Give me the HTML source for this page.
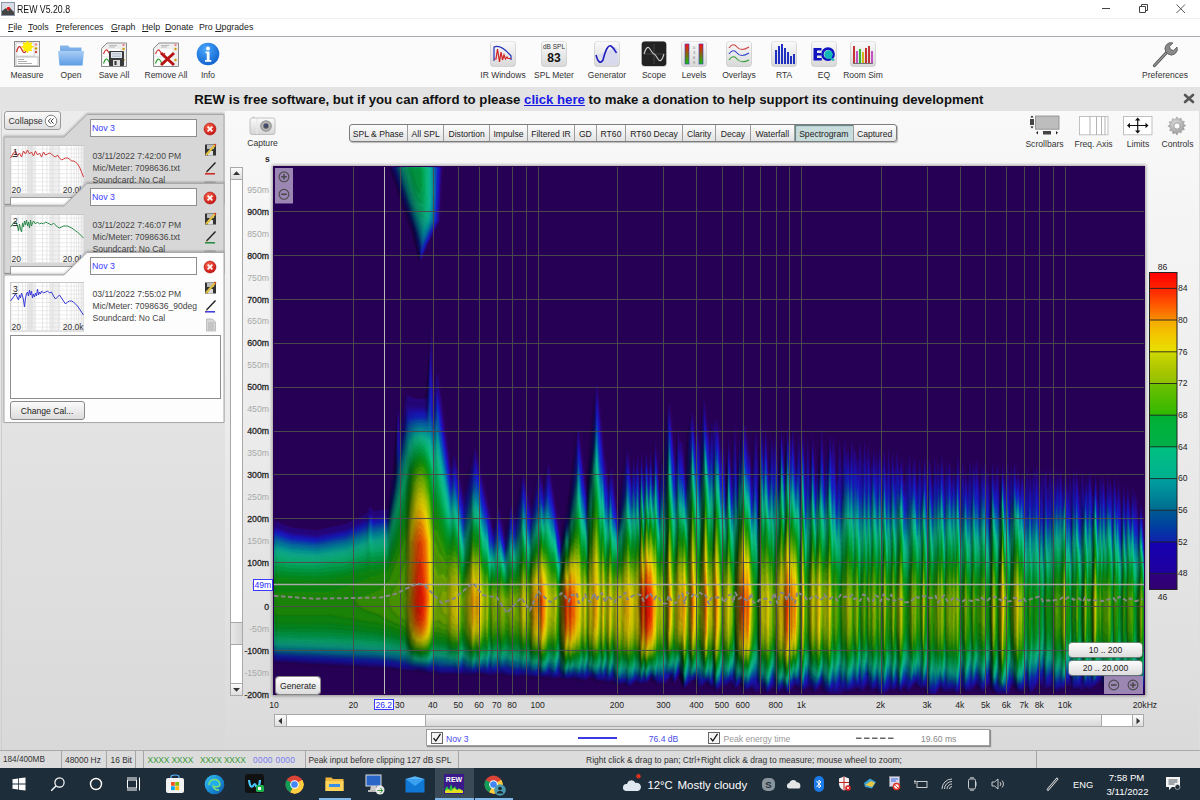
<!DOCTYPE html>
<html><head><meta charset="utf-8"><title>REW</title><style>*{margin:0;padding:0;box-sizing:border-box}
html,body{width:1200px;height:800px;overflow:hidden;background:#fff;font-family:"Liberation Sans",sans-serif;color:#222}
.a{position:absolute}
.t{position:absolute;white-space:pre;font-size:8.5px;line-height:10px;color:#333}
#title{left:0;top:0;width:1200px;height:18px;background:#fff}
#menu{left:0;top:18px;width:1200px;height:19px;background:#fff;border-top:1px solid #f0f0f0;border-bottom:1px solid #a9abb3}
#tool{left:0;top:37px;width:1200px;height:50px;background:#fbfbfb}
#banner{left:0;top:87px;width:1200px;height:24px;background:#e3e3e3}
#left{left:0;top:111px;width:225px;height:639px;background:linear-gradient(#ececec,#d9d9d9)}
#graph{left:225px;top:111px;width:975px;height:639px;background:linear-gradient(#f9f9f9 0%,#efefef 40%,#dadada 100%)}
#status{left:0;top:750px;width:1200px;height:18px;background:#dcdcdc;border-top:1px solid #a9a9a9}
#task{left:0;top:768px;width:1200px;height:32px;background:#1e2d3a}
.u{text-decoration:underline}
.ico{position:absolute;width:26px;height:26px;border-radius:4px;background:linear-gradient(#fdfdfd,#dcdcdc);box-shadow:0 0 0 1px #c9c9c9, 1px 1px 1px #bbb}
.lbl{position:absolute;white-space:pre;font-size:8.5px;line-height:10px;color:#333;text-align:center}
</style></head>
<body>
<div id="title" class="a"></div>
<svg class="a" style="left:1px;top:2px" width="14" height="14" viewBox="0 0 14 14">
<rect x="0.5" y="0.5" width="13" height="13" fill="#d8dde6" stroke="#8a96a8"/>
<path d="M2 12 L7 3 L12 12 Z" fill="#f4f4f4"/><path d="M1 9 L5 6 L7 9 L9 6 L13 10 L13 13 L1 13Z" fill="#444"/>
<circle cx="7.5" cy="6.5" r="1.8" fill="#e01818"/></svg>
<div class="t" style="left:17.0px;top:4.84px;font-size:10px;line-height:10px;color:#111;transform:scaleX(0.875);transform-origin:0 0;">REW V5.20.8</div>
<div class="a" style="left:1102px;top:8px;width:8px;height:1px;background:#444"></div>
<svg class="a" style="left:1138px;top:3px" width="11" height="11"><path d="M1.5 3.5h6v6h-6z M3.5 3.5V1.5h6v6h-2" stroke="#444" stroke-width="1" fill="none"/></svg>
<svg class="a" style="left:1176px;top:4px" width="10" height="10"><path d="M0.5 0.5 L9 9 M9 0.5 L0.5 9" stroke="#444" stroke-width="0.9"/></svg>
<div id="menu" class="a"></div>
<div class="t" style="left:8.0px;top:23.25px;font-size:8.8px;line-height:8.8px;color:#222;"><u>F</u>ile</div>
<div class="t" style="left:28.0px;top:23.25px;font-size:8.8px;line-height:8.8px;color:#222;"><u>T</u>ools</div>
<div class="t" style="left:56.0px;top:23.25px;font-size:8.8px;line-height:8.8px;color:#222;"><u>P</u>references</div>
<div class="t" style="left:111.0px;top:23.25px;font-size:8.8px;line-height:8.8px;color:#222;"><u>G</u>raph</div>
<div class="t" style="left:142.0px;top:23.25px;font-size:8.8px;line-height:8.8px;color:#222;"><u>H</u>elp</div>
<div class="t" style="left:165.0px;top:23.25px;font-size:8.8px;line-height:8.8px;color:#222;"><u>D</u>onate</div>
<div class="t" style="left:199.0px;top:23.25px;font-size:8.8px;line-height:8.8px;color:#222;">Pro <u>U</u>pgrades</div>
<div id="tool" class="a"></div>
<svg class="a" style="left:13px;top:40px" width="28" height="28" viewBox="0 0 28 28">
<rect x="1.5" y="1.5" width="25" height="25" fill="#f4f4f4" stroke="#8c8c8c"/>
<rect x="3" y="3" width="18" height="13" fill="#fff" stroke="#bbb" stroke-width="0.6"/>
<path d="M3.5 12 Q6 3 8.5 9 T13 11" stroke="#d03030" stroke-width="1.3" fill="none"/>
<rect x="3" y="17" width="22" height="8.5" fill="#fff" stroke="#999" stroke-width="0.6"/>
<path d="M5 19.5h6M5 21.5h9M5 23.5h14" stroke="#777" stroke-width="0.6"/>
<circle cx="23" cy="4.5" r="1.3" fill="#e88"/><circle cx="23" cy="8.5" r="1.3" fill="#c90"/><circle cx="23" cy="12" r="1.2" fill="#c44"/>
<circle cx="14.5" cy="6.8" r="4.6" fill="#ffee00"/><path d="M14.5 0.8v12M8.5 6.8h12M10.3 2.6l8.4 8.4M18.7 2.6l-8.4 8.4" stroke="#ffd800" stroke-width="1.6"/><circle cx="14.5" cy="6.8" r="4" fill="#fff200"/>
</svg>
<div class="t" style="left:-33px;width:120px;text-align:center;top:71.40px;font-size:8.5px;line-height:8.5px;color:#333">Measure</div>
<svg class="a" style="left:57px;top:43px" width="28" height="24" viewBox="0 0 28 24">
<defs><linearGradient id="fo" x1="0" y1="0" x2="0" y2="1"><stop offset="0" stop-color="#8ab8ec"/><stop offset="1" stop-color="#4d8fdc"/></linearGradient>
<linearGradient id="fo2" x1="0" y1="0" x2="0" y2="1"><stop offset="0" stop-color="#a9cdf5"/><stop offset="1" stop-color="#5c9ce4"/></linearGradient></defs>
<path d="M3 2.5h8l2 2h11.5v14H3z" fill="url(#fo)"/>
<path d="M1 8h26l-1.5 14.5h-23z" fill="url(#fo2)"/>
</svg>
<div class="t" style="left:11px;width:120px;text-align:center;top:71.40px;font-size:8.5px;line-height:8.5px;color:#333">Open</div>
<svg class="a" style="left:100px;top:40px" width="28" height="28" viewBox="0 0 28 28">
<path d="M1.5 26.5V8.5L7 3h19.5v23.5z" fill="#eee" stroke="#8c8c8c"/>
<rect x="3" y="9" width="17" height="7" fill="#fff"/><path d="M3.5 14 Q6 7 8.5 12 T13 13" stroke="#d03030" stroke-width="1.2" fill="none"/>
<rect x="3" y="17.5" width="17" height="8" fill="#fff"/><path d="M3.5 23.5 Q6 16 8.5 21 T13 22" stroke="#30a030" stroke-width="1.2" fill="none"/>
<path d="M9 5.5h8M9 7h6" stroke="#999" stroke-width="0.6"/>
<circle cx="23.5" cy="5" r="1.2" fill="#e88"/><circle cx="23.5" cy="9" r="1.2" fill="#c90"/><circle cx="23.5" cy="20" r="1.2" fill="#c90"/>
<rect x="9" y="11" width="15" height="15" rx="1" fill="#3a3a3a"/><rect x="11" y="12" width="11" height="6" fill="#dfe6ee"/><path d="M12 13.5h9M12 15h9M12 16.5h9" stroke="#9ab" stroke-width="0.5"/><rect x="13" y="20" width="7" height="6" fill="#ddd"/><rect x="14.5" y="21" width="2" height="4" fill="#333"/></svg>
<div class="t" style="left:54px;width:120px;text-align:center;top:71.40px;font-size:8.5px;line-height:8.5px;color:#333">Save All</div>
<svg class="a" style="left:152px;top:40px" width="28" height="28" viewBox="0 0 28 28">
<path d="M1.5 26.5V8.5L7 3h19.5v23.5z" fill="#eee" stroke="#8c8c8c"/>
<rect x="3" y="9" width="17" height="7" fill="#fff"/><path d="M3.5 14 Q6 7 8.5 12 T13 13" stroke="#d03030" stroke-width="1.2" fill="none"/>
<rect x="3" y="17.5" width="17" height="8" fill="#fff"/><path d="M3.5 23.5 Q6 16 8.5 21 T13 22" stroke="#30a030" stroke-width="1.2" fill="none"/>
<path d="M9 5.5h8M9 7h6" stroke="#999" stroke-width="0.6"/>
<circle cx="23.5" cy="5" r="1.2" fill="#e88"/><circle cx="23.5" cy="9" r="1.2" fill="#c90"/><circle cx="23.5" cy="20" r="1.2" fill="#c90"/>
<path d="M9 13 L22 25 M22 13 L9 25" stroke="#b81414" stroke-width="3"/></svg>
<div class="t" style="left:106px;width:120px;text-align:center;top:71.40px;font-size:8.5px;line-height:8.5px;color:#333">Remove All</div>
<svg class="a" style="left:196px;top:42px" width="24" height="24" viewBox="0 0 24 24">
<defs><radialGradient id="ig" cx="0.4" cy="0.3" r="0.8"><stop offset="0" stop-color="#4aa8ff"/><stop offset="1" stop-color="#0a5cc8"/></radialGradient></defs>
<circle cx="12" cy="12" r="11.3" fill="url(#ig)"/>
<circle cx="12" cy="6.5" r="2" fill="#fff"/><path d="M9.5 9.5h4v8.5h1.8v1.8H9v-1.8h1.8v-6.7H9.5z" fill="#fff"/>
</svg>
<div class="t" style="left:148px;width:120px;text-align:center;top:71.40px;font-size:8.5px;line-height:8.5px;color:#333">Info</div>
<svg class="a" style="left:489px;top:40px" width="28" height="28" viewBox="0 0 28 28">
<defs><linearGradient id="bt" x1="0" y1="0" x2="0" y2="1"><stop offset="0" stop-color="#fafafa"/><stop offset="1" stop-color="#d9d9d9"/></linearGradient></defs>
<rect x="1.2" y="1.2" width="25.6" height="25.6" rx="3.5" fill="#c6c6c6"/>
<rect x="1.8" y="1.5" width="24.4" height="24.6" rx="3" fill="url(#bt)"/>
<path d="M5 21V7 Q12 4 22 16 v4" stroke="#2030c0" stroke-width="1.2" fill="none"/><path d="M5 19h2l1.5-10 2 13 1.5-10 1.5 8 1.5-5 1.5 4 1.5-2 1 1.5H22" stroke="#d02020" stroke-width="1.2" fill="none"/></svg>
<div class="t" style="left:443px;width:120px;text-align:center;top:71.40px;font-size:8.5px;line-height:8.5px;color:#333">IR Windows</div>
<svg class="a" style="left:540px;top:40px" width="28" height="28" viewBox="0 0 28 28">
<defs><linearGradient id="bt" x1="0" y1="0" x2="0" y2="1"><stop offset="0" stop-color="#fafafa"/><stop offset="1" stop-color="#d9d9d9"/></linearGradient></defs>
<rect x="1.2" y="1.2" width="25.6" height="25.6" rx="3.5" fill="#c6c6c6"/>
<rect x="1.8" y="1.5" width="24.4" height="24.6" rx="3" fill="url(#bt)"/>
<text x="14" y="9" font-size="6.5" text-anchor="middle" fill="#333" font-family="Liberation Sans">dB SPL</text><text x="14" y="21.5" font-size="12" font-weight="700" text-anchor="middle" fill="#111" font-family="Liberation Sans">83</text></svg>
<div class="t" style="left:494px;width:120px;text-align:center;top:71.40px;font-size:8.5px;line-height:8.5px;color:#333">SPL Meter</div>
<svg class="a" style="left:593px;top:40px" width="28" height="28" viewBox="0 0 28 28">
<defs><linearGradient id="bt" x1="0" y1="0" x2="0" y2="1"><stop offset="0" stop-color="#fafafa"/><stop offset="1" stop-color="#d9d9d9"/></linearGradient></defs>
<rect x="1.2" y="1.2" width="25.6" height="25.6" rx="3.5" fill="#c6c6c6"/>
<rect x="1.8" y="1.5" width="24.4" height="24.6" rx="3" fill="url(#bt)"/>
<path d="M3 16 Q8 16 9 19 V25 H25 V10 Q21 4 19 9z" fill="#d8d8ef" opacity="0.9"/><path d="M3 15 Q6 26 10 20 Q14 4 18 6 Q21 8 23.5 13" stroke="#2020c0" stroke-width="1.6" fill="none"/></svg>
<div class="t" style="left:547px;width:120px;text-align:center;top:71.40px;font-size:8.5px;line-height:8.5px;color:#333">Generator</div>
<svg class="a" style="left:640px;top:40px" width="28" height="28" viewBox="0 0 28 28">
<defs><linearGradient id="bt" x1="0" y1="0" x2="0" y2="1"><stop offset="0" stop-color="#fafafa"/><stop offset="1" stop-color="#d9d9d9"/></linearGradient></defs>
<rect x="1.2" y="1.2" width="25.6" height="25.6" rx="3.5" fill="#c6c6c6"/>
<rect x="1.8" y="1.5" width="24.4" height="24.6" rx="3" fill="#222"/>
<path d="M14 4v20M4 14h20" stroke="#666" stroke-width="0.5"/><path d="M4 14 Q7 4 10 9 T14 14 T18 19 T24 14" stroke="#ccc" stroke-width="1.1" fill="none"/></svg>
<div class="t" style="left:594px;width:120px;text-align:center;top:71.40px;font-size:8.5px;line-height:8.5px;color:#333">Scope</div>
<svg class="a" style="left:680px;top:40px" width="28" height="28" viewBox="0 0 28 28">
<defs><linearGradient id="bt" x1="0" y1="0" x2="0" y2="1"><stop offset="0" stop-color="#fafafa"/><stop offset="1" stop-color="#d9d9d9"/></linearGradient></defs>
<rect x="1.2" y="1.2" width="25.6" height="25.6" rx="3.5" fill="#c6c6c6"/>
<rect x="1.8" y="1.5" width="24.4" height="24.6" rx="3" fill="url(#bt)"/>
<rect x="5" y="4" width="4" height="20" fill="url(#lv)" stroke="#3a3ac0" stroke-width="0.6"/><rect x="19" y="4" width="4" height="20" fill="url(#lv)" stroke="#3a3ac0" stroke-width="0.6"/><defs><linearGradient id="lv" x1="0" y1="0" x2="0" y2="1"><stop offset="0" stop-color="#ff1010"/><stop offset="1" stop-color="#10c010"/></linearGradient></defs><text x="14" y="9" font-size="4" text-anchor="middle" fill="#777" font-family="Liberation Sans">0</text><text x="14" y="14" font-size="4" text-anchor="middle" fill="#777" font-family="Liberation Sans">3</text><text x="14" y="19" font-size="4" text-anchor="middle" fill="#777" font-family="Liberation Sans">6</text><text x="14" y="24" font-size="4" text-anchor="middle" fill="#777" font-family="Liberation Sans">9</text></svg>
<div class="t" style="left:634px;width:120px;text-align:center;top:71.40px;font-size:8.5px;line-height:8.5px;color:#333">Levels</div>
<svg class="a" style="left:725px;top:40px" width="28" height="28" viewBox="0 0 28 28">
<defs><linearGradient id="bt" x1="0" y1="0" x2="0" y2="1"><stop offset="0" stop-color="#fafafa"/><stop offset="1" stop-color="#d9d9d9"/></linearGradient></defs>
<rect x="1.2" y="1.2" width="25.6" height="25.6" rx="3.5" fill="#c6c6c6"/>
<rect x="1.8" y="1.5" width="24.4" height="24.6" rx="3" fill="url(#bt)"/>
<path d="M4 8 Q8 2 12 7 T24 7" stroke="#d04040" stroke-width="1.1" fill="none"/><path d="M4 14 Q8 8 12 13 T24 13" stroke="#3040d0" stroke-width="1.1" fill="none"/><path d="M4 20 Q8 14 12 19 T24 20" stroke="#30a030" stroke-width="1.1" fill="none"/></svg>
<div class="t" style="left:679px;width:120px;text-align:center;top:71.40px;font-size:8.5px;line-height:8.5px;color:#333">Overlays</div>
<svg class="a" style="left:770px;top:40px" width="28" height="28" viewBox="0 0 28 28">
<defs><linearGradient id="bt" x1="0" y1="0" x2="0" y2="1"><stop offset="0" stop-color="#fafafa"/><stop offset="1" stop-color="#d9d9d9"/></linearGradient></defs>
<rect x="1.2" y="1.2" width="25.6" height="25.6" rx="3.5" fill="#c6c6c6"/>
<rect x="1.8" y="1.5" width="24.4" height="24.6" rx="3" fill="url(#bt)"/>
<path d="M6 10v14M9 6v18M12 4v20M15 8v16M18 12v12M21 16v8M24 14v10" stroke="#2030c0" stroke-width="2"/></svg>
<div class="t" style="left:724px;width:120px;text-align:center;top:71.40px;font-size:8.5px;line-height:8.5px;color:#333">RTA</div>
<svg class="a" style="left:810px;top:40px" width="28" height="28" viewBox="0 0 28 28">
<defs><linearGradient id="bt" x1="0" y1="0" x2="0" y2="1"><stop offset="0" stop-color="#fafafa"/><stop offset="1" stop-color="#d9d9d9"/></linearGradient></defs>
<rect x="1.2" y="1.2" width="25.6" height="25.6" rx="3.5" fill="#c6c6c6"/>
<rect x="1.8" y="1.5" width="24.4" height="24.6" rx="3" fill="url(#bt)"/>
<path d="M3.5 8h8v2.6H7v2.3h4v2.5H7v2.5h4.8V20.5H3.5z" fill="#1014c0"/><circle cx="18" cy="14.2" r="5.6" fill="none" stroke="#1014c0" stroke-width="2.6"/><circle cx="18.5" cy="14.5" r="4.2" fill="#12b8b8"/><path d="M20 17.5l4 3" stroke="#12b8b8" stroke-width="2"/></svg>
<div class="t" style="left:764px;width:120px;text-align:center;top:71.40px;font-size:8.5px;line-height:8.5px;color:#333">EQ</div>
<svg class="a" style="left:849px;top:40px" width="28" height="28" viewBox="0 0 28 28">
<defs><linearGradient id="bt" x1="0" y1="0" x2="0" y2="1"><stop offset="0" stop-color="#fafafa"/><stop offset="1" stop-color="#d9d9d9"/></linearGradient></defs>
<rect x="1.2" y="1.2" width="25.6" height="25.6" rx="3.5" fill="#c6c6c6"/>
<rect x="1.8" y="1.5" width="24.4" height="24.6" rx="3" fill="url(#bt)"/>
<path d="M5 6v17" stroke="#c02020" stroke-width="1.8"/><path d="M8 11v12" stroke="#c040c0" stroke-width="1.8"/><path d="M11 9v14" stroke="#20b020" stroke-width="1.8"/><path d="M14 12v11" stroke="#d0b000" stroke-width="1.8"/><path d="M17 8v15" stroke="#c02020" stroke-width="1.8"/><path d="M20 6v17" stroke="#c02020" stroke-width="1.8"/><path d="M23 11v12" stroke="#c040c0" stroke-width="1.8"/><path d="M4 23.5h20" stroke="#555" stroke-width="0.8"/></svg>
<div class="t" style="left:803px;width:120px;text-align:center;top:71.40px;font-size:8.5px;line-height:8.5px;color:#333">Room Sim</div>
<svg class="a" style="left:1151px;top:40px" width="28" height="28" viewBox="0 0 28 28">
<path d="M3.5 25.5 L17 11" stroke="#555" stroke-width="3.2" stroke-linecap="round"/>
<path d="M3.5 25.5 L17 11" stroke="#999" stroke-width="1.2" stroke-linecap="round"/>
<path d="M15 12 a6 6 0 0 1 7-9 l-3.5 3.5 1 3 3 1 3.5-3.5 a6 6 0 0 1 -9 7z" fill="#8a8a8a" stroke="#555" stroke-width="0.8"/>
</svg>
<div class="t" style="left:1105px;width:120px;text-align:center;top:71.40px;font-size:8.5px;line-height:8.5px;color:#333">Preferences</div>
<div id="banner" class="a"></div>
<div class="t" style="left:194.3px;top:92.63px;font-size:13.2px;line-height:13.2px;color:#111;font-weight:700;">REW is free software, but if you can afford to please <span style="color:#1a1ae6;text-decoration:underline">click here</span> to make a donation to help support its continuing development</div>
<svg class="a" style="left:1183px;top:93px" width="12" height="11"><path d="M2 2 L10 9 M10 2 L2 9" stroke="#555" stroke-width="2.6" stroke-linecap="round"/></svg>
<div id="left" class="a"></div>
<div class="a" style="left:3.5px;top:111px;width:57.5px;height:19px;border:1px solid #9a9a9a;border-radius:3px;background:linear-gradient(#fafafa,#dedede)"></div>
<div class="t" style="left:8.5px;top:117.05px;font-size:8.8px;line-height:8.8px;color:#333;">Collapse</div>
<svg class="a" style="left:44px;top:114px" width="14" height="14" viewBox="0 0 14 14"><circle cx="7" cy="7" r="5.8" fill="#fff" stroke="#777" stroke-width="0.9"/><path d="M6.8 4.3 4.3 7l2.5 2.7M9.6 4.3 7.1 7l2.5 2.7" stroke="#444" stroke-width="1" fill="none"/></svg>
<svg class="a" style="left:0;top:0" width="226" height="208"><defs><filter id="cs0" x="-5%" y="-5%" width="110%" height="110%"><feDropShadow dx="0" dy="-1" stdDeviation="1" flood-color="#000" flood-opacity="0.25"/></filter></defs><polygon points="4,137.0 64,137.0 87,114.5 224,114.5 224,204.5 4,204.5" fill="#d7d7d7" stroke="#a9a9a9" stroke-width="1" filter="url(#cs0)"/></svg>
<div class="a" style="left:89.5px;top:119.0px;width:107px;height:18px;background:#fff;border:1px solid #8e8e8e"></div>
<div class="t" style="left:92px;top:124.35px;font-size:8.8px;line-height:8.8px;color:#3a3aff;">Nov 3</div>
<svg class="a" style="left:203px;top:121.5px" width="14" height="14" viewBox="0 0 14 14"><defs><radialGradient id="dg128" cx="0.4" cy="0.35" r="0.7"><stop offset="0" stop-color="#ff6a50"/><stop offset="1" stop-color="#c01010"/></radialGradient></defs><circle cx="7" cy="7" r="6" fill="url(#dg128)" stroke="#a00" stroke-width="0.5"/><path d="M4.6 4.6l4.8 4.8M9.4 4.6l-4.8 4.8" stroke="#fff" stroke-width="1.6"/></svg>
<svg class="a" style="left:9.5px;top:144.5px" width="74.5" height="49.5" viewBox="0 0 74.5 49.5"><rect x="0.5" y="0.5" width="73.5" height="48.5" fill="#fff" stroke="#c8c8c8"/><rect x="17" y="1" width="6" height="47" fill="#ececec"/><rect x="40" y="1" width="4" height="47" fill="#efefef"/><path d="M1.0 1V48.5" stroke="#d8d8d8" stroke-width="0.6"/><path d="M8.3 1V48.5" stroke="#d8d8d8" stroke-width="0.6"/><path d="M12.6 1V48.5" stroke="#d8d8d8" stroke-width="0.6"/><path d="M15.6 1V48.5" stroke="#d8d8d8" stroke-width="0.6"/><path d="M18.0 1V48.5" stroke="#d8d8d8" stroke-width="0.6"/><path d="M19.9 1V48.5" stroke="#d8d8d8" stroke-width="0.6"/><path d="M21.5 1V48.5" stroke="#d8d8d8" stroke-width="0.6"/><path d="M22.9 1V48.5" stroke="#d8d8d8" stroke-width="0.6"/><path d="M24.2 1V48.5" stroke="#d8d8d8" stroke-width="0.6"/><path d="M25.3 1V48.5" stroke="#d8d8d8" stroke-width="0.6"/><path d="M32.6 1V48.5" stroke="#d8d8d8" stroke-width="0.6"/><path d="M36.9 1V48.5" stroke="#d8d8d8" stroke-width="0.6"/><path d="M39.9 1V48.5" stroke="#d8d8d8" stroke-width="0.6"/><path d="M42.3 1V48.5" stroke="#d8d8d8" stroke-width="0.6"/><path d="M44.2 1V48.5" stroke="#d8d8d8" stroke-width="0.6"/><path d="M45.8 1V48.5" stroke="#d8d8d8" stroke-width="0.6"/><path d="M47.2 1V48.5" stroke="#d8d8d8" stroke-width="0.6"/><path d="M48.5 1V48.5" stroke="#d8d8d8" stroke-width="0.6"/><path d="M49.6 1V48.5" stroke="#d8d8d8" stroke-width="0.6"/><path d="M56.9 1V48.5" stroke="#d8d8d8" stroke-width="0.6"/><path d="M61.2 1V48.5" stroke="#d8d8d8" stroke-width="0.6"/><path d="M64.2 1V48.5" stroke="#d8d8d8" stroke-width="0.6"/><path d="M66.6 1V48.5" stroke="#d8d8d8" stroke-width="0.6"/><path d="M68.5 1V48.5" stroke="#d8d8d8" stroke-width="0.6"/><path d="M70.1 1V48.5" stroke="#d8d8d8" stroke-width="0.6"/><path d="M71.5 1V48.5" stroke="#d8d8d8" stroke-width="0.6"/><path d="M72.8 1V48.5" stroke="#d8d8d8" stroke-width="0.6"/><path d="M1 4.1H73.5" stroke="#dedede" stroke-width="0.6"/><path d="M1 8.2H73.5" stroke="#dedede" stroke-width="0.6"/><path d="M1 12.3H73.5" stroke="#dedede" stroke-width="0.6"/><path d="M1 16.4H73.5" stroke="#dedede" stroke-width="0.6"/><path d="M1 20.5H73.5" stroke="#dedede" stroke-width="0.6"/><path d="M1 24.6H73.5" stroke="#dedede" stroke-width="0.6"/><path d="M1 28.7H73.5" stroke="#dedede" stroke-width="0.6"/><path d="M1 32.8H73.5" stroke="#dedede" stroke-width="0.6"/><path d="M1 36.9H73.5" stroke="#dedede" stroke-width="0.6"/><path d="M1 41.0H73.5" stroke="#dedede" stroke-width="0.6"/><path d="M1 45.1H73.5" stroke="#dedede" stroke-width="0.6"/><path d="M0.5 13.0 3.5 8.0 5.5 6.0 7.5 11.0 9.5 8.0 11.5 12.0 13.5 6.0 15.5 9.0 17.5 5.0 19.5 9.0 21.5 7.0 23.5 11.0 25.5 6.0 27.5 10.0 29.5 8.0 31.5 12.0 33.5 7.0 35.5 10.0 37.5 9.0 39.5 8.0 41.5 9.0 43.5 11.0 45.5 12.0 47.5 10.0 49.5 13.0 51.5 15.0 53.5 14.0 55.5 13.0 57.5 13.0 59.5 14.0 61.5 16.0 63.5 16.0 65.5 17.0 67.5 19.0 69.5 22.0 71.5 27.0 73.5 32.0" stroke="#d03a3a" stroke-width="1" fill="none"/><text x="3" y="10" font-size="8.5" fill="#222" font-family="Liberation Sans">1</text><path d="M2.5 11.5h5" stroke="#222" stroke-width="0.9"/><text x="1.5" y="47.5" font-size="8.5" fill="#333" font-family="Liberation Sans">20</text><text x="73.5" y="47.5" font-size="8.5" fill="#333" text-anchor="end" font-family="Liberation Sans">20.0k</text></svg>
<div class="t" style="left:92.5px;top:151.72px;font-size:8.6px;line-height:8.6px;color:#444;">03/11/2022 7:42:00 PM</div>
<div class="t" style="left:92.5px;top:163.72px;font-size:8.6px;line-height:8.6px;color:#444;">Mic/Meter: 7098636.txt</div>
<div class="t" style="left:92.5px;top:175.72px;font-size:8.6px;line-height:8.6px;color:#444;">Soundcard: No Cal</div>
<svg class="a" style="left:204px;top:142.5px" width="13" height="13" viewBox="0 0 13 13"><rect x="1" y="1.5" width="11" height="11" fill="#333"/><rect x="3" y="2" width="7" height="4" fill="#bbb"/><rect x="4" y="8" width="5" height="4.5" fill="#ddd"/><path d="M2 12 L11.5 1.5" stroke="#e0c040" stroke-width="2.2"/><path d="M10.5 1 l1.5 1.5" stroke="#d03020" stroke-width="1.5"/></svg>
<svg class="a" style="left:204px;top:160.5px" width="13" height="14" viewBox="0 0 13 14"><path d="M2.5 11 L11.5 1.5" stroke="#222" stroke-width="1.4"/><path d="M2 11.5 l1.5 -0.5" stroke="#c9a060" stroke-width="1"/><path d="M1 12.8h10" stroke="#d02020" stroke-width="1.5"/></svg>
<div class="a" style="left:204px;top:180.5px;width:12px;height:4px;background:#bbb;border-radius:2px 2px 0 0"></div>
<div class="a" style="left:9.5px;top:197.0px;width:74px;height:8px;background:#fff;border:1px solid #999;border-bottom:none"></div>
<svg class="a" style="left:0;top:0" width="226" height="276"><defs><filter id="cs1" x="-5%" y="-5%" width="110%" height="110%"><feDropShadow dx="0" dy="-1" stdDeviation="1" flood-color="#000" flood-opacity="0.25"/></filter></defs><polygon points="4,206.0 64,206.0 87,183.5 224,183.5 224,273.5 4,273.5" fill="#d7d7d7" stroke="#a9a9a9" stroke-width="1" filter="url(#cs1)"/></svg>
<div class="a" style="left:89.5px;top:188.0px;width:107px;height:18px;background:#fff;border:1px solid #8e8e8e"></div>
<div class="t" style="left:92px;top:193.35px;font-size:8.8px;line-height:8.8px;color:#3a3aff;">Nov 3</div>
<svg class="a" style="left:203px;top:190.5px" width="14" height="14" viewBox="0 0 14 14"><defs><radialGradient id="dg197" cx="0.4" cy="0.35" r="0.7"><stop offset="0" stop-color="#ff6a50"/><stop offset="1" stop-color="#c01010"/></radialGradient></defs><circle cx="7" cy="7" r="6" fill="url(#dg197)" stroke="#a00" stroke-width="0.5"/><path d="M4.6 4.6l4.8 4.8M9.4 4.6l-4.8 4.8" stroke="#fff" stroke-width="1.6"/></svg>
<svg class="a" style="left:9.5px;top:213.5px" width="74.5" height="49.5" viewBox="0 0 74.5 49.5"><rect x="0.5" y="0.5" width="73.5" height="48.5" fill="#fff" stroke="#c8c8c8"/><rect x="17" y="1" width="6" height="47" fill="#ececec"/><rect x="40" y="1" width="4" height="47" fill="#efefef"/><path d="M1.0 1V48.5" stroke="#d8d8d8" stroke-width="0.6"/><path d="M8.3 1V48.5" stroke="#d8d8d8" stroke-width="0.6"/><path d="M12.6 1V48.5" stroke="#d8d8d8" stroke-width="0.6"/><path d="M15.6 1V48.5" stroke="#d8d8d8" stroke-width="0.6"/><path d="M18.0 1V48.5" stroke="#d8d8d8" stroke-width="0.6"/><path d="M19.9 1V48.5" stroke="#d8d8d8" stroke-width="0.6"/><path d="M21.5 1V48.5" stroke="#d8d8d8" stroke-width="0.6"/><path d="M22.9 1V48.5" stroke="#d8d8d8" stroke-width="0.6"/><path d="M24.2 1V48.5" stroke="#d8d8d8" stroke-width="0.6"/><path d="M25.3 1V48.5" stroke="#d8d8d8" stroke-width="0.6"/><path d="M32.6 1V48.5" stroke="#d8d8d8" stroke-width="0.6"/><path d="M36.9 1V48.5" stroke="#d8d8d8" stroke-width="0.6"/><path d="M39.9 1V48.5" stroke="#d8d8d8" stroke-width="0.6"/><path d="M42.3 1V48.5" stroke="#d8d8d8" stroke-width="0.6"/><path d="M44.2 1V48.5" stroke="#d8d8d8" stroke-width="0.6"/><path d="M45.8 1V48.5" stroke="#d8d8d8" stroke-width="0.6"/><path d="M47.2 1V48.5" stroke="#d8d8d8" stroke-width="0.6"/><path d="M48.5 1V48.5" stroke="#d8d8d8" stroke-width="0.6"/><path d="M49.6 1V48.5" stroke="#d8d8d8" stroke-width="0.6"/><path d="M56.9 1V48.5" stroke="#d8d8d8" stroke-width="0.6"/><path d="M61.2 1V48.5" stroke="#d8d8d8" stroke-width="0.6"/><path d="M64.2 1V48.5" stroke="#d8d8d8" stroke-width="0.6"/><path d="M66.6 1V48.5" stroke="#d8d8d8" stroke-width="0.6"/><path d="M68.5 1V48.5" stroke="#d8d8d8" stroke-width="0.6"/><path d="M70.1 1V48.5" stroke="#d8d8d8" stroke-width="0.6"/><path d="M71.5 1V48.5" stroke="#d8d8d8" stroke-width="0.6"/><path d="M72.8 1V48.5" stroke="#d8d8d8" stroke-width="0.6"/><path d="M1 4.1H73.5" stroke="#dedede" stroke-width="0.6"/><path d="M1 8.2H73.5" stroke="#dedede" stroke-width="0.6"/><path d="M1 12.3H73.5" stroke="#dedede" stroke-width="0.6"/><path d="M1 16.4H73.5" stroke="#dedede" stroke-width="0.6"/><path d="M1 20.5H73.5" stroke="#dedede" stroke-width="0.6"/><path d="M1 24.6H73.5" stroke="#dedede" stroke-width="0.6"/><path d="M1 28.7H73.5" stroke="#dedede" stroke-width="0.6"/><path d="M1 32.8H73.5" stroke="#dedede" stroke-width="0.6"/><path d="M1 36.9H73.5" stroke="#dedede" stroke-width="0.6"/><path d="M1 41.0H73.5" stroke="#dedede" stroke-width="0.6"/><path d="M1 45.1H73.5" stroke="#dedede" stroke-width="0.6"/><path d="M0.5 13.0 3.5 9.0 5.5 7.0 7.5 12.0 8.5 17.0 9.5 10.0 10.5 15.0 11.5 18.0 12.5 9.0 13.5 13.0 14.5 7.0 15.5 11.0 16.5 6.0 17.5 12.0 18.5 8.0 19.5 14.0 20.5 6.0 21.5 12.0 22.5 9.0 23.5 7.0 25.5 10.0 27.5 8.0 29.5 10.0 31.5 9.0 33.5 10.0 35.5 8.0 37.5 9.0 39.5 10.0 41.5 11.0 43.5 9.0 45.5 11.0 47.5 13.0 49.5 14.0 51.5 13.0 53.5 12.0 55.5 12.0 57.5 12.0 59.5 13.0 61.5 14.0 63.5 15.0 65.5 17.0 67.5 18.0 69.5 20.0 71.5 22.0 73.5 24.0" stroke="#2a8a4a" stroke-width="1" fill="none"/><text x="3" y="10" font-size="8.5" fill="#222" font-family="Liberation Sans">2</text><path d="M2.5 11.5h5" stroke="#222" stroke-width="0.9"/><text x="1.5" y="47.5" font-size="8.5" fill="#333" font-family="Liberation Sans">20</text><text x="73.5" y="47.5" font-size="8.5" fill="#333" text-anchor="end" font-family="Liberation Sans">20.0k</text></svg>
<div class="t" style="left:92.5px;top:220.72px;font-size:8.6px;line-height:8.6px;color:#444;">03/11/2022 7:46:07 PM</div>
<div class="t" style="left:92.5px;top:232.72px;font-size:8.6px;line-height:8.6px;color:#444;">Mic/Meter: 7098636.txt</div>
<div class="t" style="left:92.5px;top:244.72px;font-size:8.6px;line-height:8.6px;color:#444;">Soundcard: No Cal</div>
<svg class="a" style="left:204px;top:211.5px" width="13" height="13" viewBox="0 0 13 13"><rect x="1" y="1.5" width="11" height="11" fill="#333"/><rect x="3" y="2" width="7" height="4" fill="#bbb"/><rect x="4" y="8" width="5" height="4.5" fill="#ddd"/><path d="M2 12 L11.5 1.5" stroke="#e0c040" stroke-width="2.2"/><path d="M10.5 1 l1.5 1.5" stroke="#d03020" stroke-width="1.5"/></svg>
<svg class="a" style="left:204px;top:229.5px" width="13" height="14" viewBox="0 0 13 14"><path d="M2.5 11 L11.5 1.5" stroke="#222" stroke-width="1.4"/><path d="M2 11.5 l1.5 -0.5" stroke="#c9a060" stroke-width="1"/><path d="M1 12.8h10" stroke="#208a40" stroke-width="1.5"/></svg>
<div class="a" style="left:204px;top:249.5px;width:12px;height:4px;background:#bbb;border-radius:2px 2px 0 0"></div>
<div class="a" style="left:9.5px;top:266.0px;width:74px;height:8px;background:#fff;border:1px solid #999;border-bottom:none"></div>
<svg class="a" style="left:0;top:0" width="226" height="426"><defs><filter id="cs2" x="-5%" y="-5%" width="110%" height="110%"><feDropShadow dx="0" dy="-1" stdDeviation="1" flood-color="#000" flood-opacity="0.25"/></filter></defs><polygon points="4,275.0 64,275.0 87,252.5 224,252.5 224,422.5 4,422.5" fill="#fdfdfd" stroke="#a9a9a9" stroke-width="1" filter="url(#cs2)"/></svg>
<div class="a" style="left:89.5px;top:257.0px;width:107px;height:18px;background:#fff;border:1px solid #8e8e8e"></div>
<div class="t" style="left:92px;top:262.35px;font-size:8.8px;line-height:8.8px;color:#3a3aff;">Nov 3</div>
<svg class="a" style="left:203px;top:259.5px" width="14" height="14" viewBox="0 0 14 14"><defs><radialGradient id="dg266" cx="0.4" cy="0.35" r="0.7"><stop offset="0" stop-color="#ff6a50"/><stop offset="1" stop-color="#c01010"/></radialGradient></defs><circle cx="7" cy="7" r="6" fill="url(#dg266)" stroke="#a00" stroke-width="0.5"/><path d="M4.6 4.6l4.8 4.8M9.4 4.6l-4.8 4.8" stroke="#fff" stroke-width="1.6"/></svg>
<svg class="a" style="left:9.5px;top:282.0px" width="74.5" height="49.5" viewBox="0 0 74.5 49.5"><rect x="0.5" y="0.5" width="73.5" height="48.5" fill="#fff" stroke="#c8c8c8"/><rect x="17" y="1" width="6" height="47" fill="#ececec"/><rect x="40" y="1" width="4" height="47" fill="#efefef"/><path d="M1.0 1V48.5" stroke="#d8d8d8" stroke-width="0.6"/><path d="M8.3 1V48.5" stroke="#d8d8d8" stroke-width="0.6"/><path d="M12.6 1V48.5" stroke="#d8d8d8" stroke-width="0.6"/><path d="M15.6 1V48.5" stroke="#d8d8d8" stroke-width="0.6"/><path d="M18.0 1V48.5" stroke="#d8d8d8" stroke-width="0.6"/><path d="M19.9 1V48.5" stroke="#d8d8d8" stroke-width="0.6"/><path d="M21.5 1V48.5" stroke="#d8d8d8" stroke-width="0.6"/><path d="M22.9 1V48.5" stroke="#d8d8d8" stroke-width="0.6"/><path d="M24.2 1V48.5" stroke="#d8d8d8" stroke-width="0.6"/><path d="M25.3 1V48.5" stroke="#d8d8d8" stroke-width="0.6"/><path d="M32.6 1V48.5" stroke="#d8d8d8" stroke-width="0.6"/><path d="M36.9 1V48.5" stroke="#d8d8d8" stroke-width="0.6"/><path d="M39.9 1V48.5" stroke="#d8d8d8" stroke-width="0.6"/><path d="M42.3 1V48.5" stroke="#d8d8d8" stroke-width="0.6"/><path d="M44.2 1V48.5" stroke="#d8d8d8" stroke-width="0.6"/><path d="M45.8 1V48.5" stroke="#d8d8d8" stroke-width="0.6"/><path d="M47.2 1V48.5" stroke="#d8d8d8" stroke-width="0.6"/><path d="M48.5 1V48.5" stroke="#d8d8d8" stroke-width="0.6"/><path d="M49.6 1V48.5" stroke="#d8d8d8" stroke-width="0.6"/><path d="M56.9 1V48.5" stroke="#d8d8d8" stroke-width="0.6"/><path d="M61.2 1V48.5" stroke="#d8d8d8" stroke-width="0.6"/><path d="M64.2 1V48.5" stroke="#d8d8d8" stroke-width="0.6"/><path d="M66.6 1V48.5" stroke="#d8d8d8" stroke-width="0.6"/><path d="M68.5 1V48.5" stroke="#d8d8d8" stroke-width="0.6"/><path d="M70.1 1V48.5" stroke="#d8d8d8" stroke-width="0.6"/><path d="M71.5 1V48.5" stroke="#d8d8d8" stroke-width="0.6"/><path d="M72.8 1V48.5" stroke="#d8d8d8" stroke-width="0.6"/><path d="M1 4.1H73.5" stroke="#dedede" stroke-width="0.6"/><path d="M1 8.2H73.5" stroke="#dedede" stroke-width="0.6"/><path d="M1 12.3H73.5" stroke="#dedede" stroke-width="0.6"/><path d="M1 16.4H73.5" stroke="#dedede" stroke-width="0.6"/><path d="M1 20.5H73.5" stroke="#dedede" stroke-width="0.6"/><path d="M1 24.6H73.5" stroke="#dedede" stroke-width="0.6"/><path d="M1 28.7H73.5" stroke="#dedede" stroke-width="0.6"/><path d="M1 32.8H73.5" stroke="#dedede" stroke-width="0.6"/><path d="M1 36.9H73.5" stroke="#dedede" stroke-width="0.6"/><path d="M1 41.0H73.5" stroke="#dedede" stroke-width="0.6"/><path d="M1 45.1H73.5" stroke="#dedede" stroke-width="0.6"/><path d="M0.5 19.0 3.5 15.0 5.5 12.0 7.5 16.0 8.5 18.0 9.5 13.0 10.5 16.0 11.5 11.0 12.5 14.0 13.5 18.0 14.5 25.0 15.5 16.0 16.5 12.0 17.5 10.0 18.5 14.0 19.5 8.0 20.5 13.0 21.5 9.0 22.5 16.0 23.5 12.0 24.5 15.0 25.5 11.0 26.5 14.0 27.5 7.0 28.5 13.0 29.5 10.0 30.5 12.0 31.5 9.0 33.5 11.0 35.5 10.0 37.5 9.0 39.5 11.0 41.5 10.0 43.5 14.0 45.5 17.0 47.5 15.0 49.5 13.0 51.5 16.0 53.5 19.0 55.5 22.0 57.5 20.0 59.5 19.0 61.5 19.0 63.5 20.0 65.5 22.0 67.5 24.0 69.5 27.0 71.5 30.0 73.5 33.0" stroke="#3838d8" stroke-width="1" fill="none"/><text x="3" y="10" font-size="8.5" fill="#222" font-family="Liberation Sans">3</text><path d="M2.5 11.5h5" stroke="#222" stroke-width="0.9"/><text x="1.5" y="47.5" font-size="8.5" fill="#333" font-family="Liberation Sans">20</text><text x="73.5" y="47.5" font-size="8.5" fill="#333" text-anchor="end" font-family="Liberation Sans">20.0k</text></svg>
<div class="t" style="left:92.5px;top:289.72px;font-size:8.6px;line-height:8.6px;color:#444;">03/11/2022 7:55:02 PM</div>
<div class="t" style="left:92.5px;top:301.72px;font-size:8.6px;line-height:8.6px;color:#444;">Mic/Meter: 7098636_90deg</div>
<div class="t" style="left:92.5px;top:313.72px;font-size:8.6px;line-height:8.6px;color:#444;">Soundcard: No Cal</div>
<svg class="a" style="left:204px;top:280.5px" width="13" height="13" viewBox="0 0 13 13"><rect x="1" y="1.5" width="11" height="11" fill="#333"/><rect x="3" y="2" width="7" height="4" fill="#bbb"/><rect x="4" y="8" width="5" height="4.5" fill="#ddd"/><path d="M2 12 L11.5 1.5" stroke="#e0c040" stroke-width="2.2"/><path d="M10.5 1 l1.5 1.5" stroke="#d03020" stroke-width="1.5"/></svg>
<svg class="a" style="left:204px;top:298.5px" width="13" height="14" viewBox="0 0 13 14"><path d="M2.5 11 L11.5 1.5" stroke="#222" stroke-width="1.4"/><path d="M2 11.5 l1.5 -0.5" stroke="#c9a060" stroke-width="1"/><path d="M1 12.8h10" stroke="#3838d8" stroke-width="1.5"/></svg>
<svg class="a" style="left:205px;top:317.5px" width="12" height="14" viewBox="0 0 12 14"><path d="M1.5 1h6l3 3v9h-9z" fill="#d8d8d8" stroke="#aaa" stroke-width="0.7"/><path d="M3 5h6M3 7h6M3 9h6M3 11h6" stroke="#999" stroke-width="0.6"/></svg>
<div class="a" style="left:9.5px;top:334.5px;width:211px;height:64px;background:#fff;border:1px solid #8e8e8e"></div>
<div class="a" style="left:9.5px;top:401px;width:75px;height:18.5px;border:1px solid #8a8a8a;border-radius:3px;background:linear-gradient(#fbfbfb,#dcdcdc)"></div>
<div class="t" style="left:47px;top:406.72px;font-size:8.6px;line-height:8.6px;color:#222;width:75px;left:9.5px;text-align:center">Change Cal...</div>
<div id="graph" class="a"></div>
<svg class="a" style="left:249px;top:116px" width="28" height="20" viewBox="0 0 28 20">
<defs><linearGradient id="cam" x1="0" y1="0" x2="0" y2="1"><stop offset="0" stop-color="#fbfbfb"/><stop offset="1" stop-color="#d5d5d5"/></linearGradient>
<radialGradient id="lens" cx="0.5" cy="0.5" r="0.5"><stop offset="0" stop-color="#333"/><stop offset="0.35" stop-color="#555"/><stop offset="0.6" stop-color="#bbb"/><stop offset="1" stop-color="#888"/></radialGradient></defs>
<rect x="3" y="0.5" width="3" height="2" fill="#ddd"/>
<rect x="1" y="2" width="25" height="16.5" rx="2" fill="url(#cam)" stroke="#b5b5b5" stroke-width="0.8"/>
<path d="M8 3v15" stroke="#e8e8e8" stroke-width="1.5"/>
<circle cx="17" cy="10" r="5.8" fill="url(#lens)"/><circle cx="17" cy="9.5" r="1.5" fill="#3a4a8a"/>
</svg>
<div class="t" style="left:222.5px;width:80px;text-align:center;top:138.72px;font-size:8.6px;line-height:8.6px;color:#333">Capture</div>
<div class="t" style="left:265px;top:154.72px;font-size:8.6px;line-height:8.6px;color:#222;font-weight:700">s</div>
<div class="a" style="left:348.5px;top:124.2px;width:548px;height:17.5px;border:1px solid #7c7c7c;border-radius:3px;background:linear-gradient(#fdfdfd,#e2e2e2);box-shadow:1px 1px 1px rgba(0,0,0,0.25)"></div>
<div class="t" style="left:328.125px;width:100px;text-align:center;top:130.02px;font-size:8.6px;line-height:8.6px;color:#222">SPL &amp; Phase</div>
<div class="a" style="left:407.0px;top:125px;width:1px;height:16px;background:#9c9c9c"></div>
<div class="t" style="left:375.625px;width:100px;text-align:center;top:130.02px;font-size:8.6px;line-height:8.6px;color:#222">All SPL</div>
<div class="a" style="left:443.25px;top:125px;width:1px;height:16px;background:#9c9c9c"></div>
<div class="t" style="left:416.625px;width:100px;text-align:center;top:130.02px;font-size:8.6px;line-height:8.6px;color:#222">Distortion</div>
<div class="a" style="left:489.0px;top:125px;width:1px;height:16px;background:#9c9c9c"></div>
<div class="t" style="left:458.5px;width:100px;text-align:center;top:130.02px;font-size:8.6px;line-height:8.6px;color:#222">Impulse</div>
<div class="a" style="left:527.0px;top:125px;width:1px;height:16px;background:#9c9c9c"></div>
<div class="t" style="left:501.0px;width:100px;text-align:center;top:130.02px;font-size:8.6px;line-height:8.6px;color:#222">Filtered IR</div>
<div class="a" style="left:574.0px;top:125px;width:1px;height:16px;background:#9c9c9c"></div>
<div class="t" style="left:535.375px;width:100px;text-align:center;top:130.02px;font-size:8.6px;line-height:8.6px;color:#222">GD</div>
<div class="a" style="left:595.75px;top:125px;width:1px;height:16px;background:#9c9c9c"></div>
<div class="t" style="left:561.0px;width:100px;text-align:center;top:130.02px;font-size:8.6px;line-height:8.6px;color:#222">RT60</div>
<div class="a" style="left:625.25px;top:125px;width:1px;height:16px;background:#9c9c9c"></div>
<div class="t" style="left:604.125px;width:100px;text-align:center;top:130.02px;font-size:8.6px;line-height:8.6px;color:#222">RT60 Decay</div>
<div class="a" style="left:682.0px;top:125px;width:1px;height:16px;background:#9c9c9c"></div>
<div class="t" style="left:649.125px;width:100px;text-align:center;top:130.02px;font-size:8.6px;line-height:8.6px;color:#222">Clarity</div>
<div class="a" style="left:715.25px;top:125px;width:1px;height:16px;background:#9c9c9c"></div>
<div class="t" style="left:682.875px;width:100px;text-align:center;top:130.02px;font-size:8.6px;line-height:8.6px;color:#222">Decay</div>
<div class="a" style="left:749.5px;top:125px;width:1px;height:16px;background:#9c9c9c"></div>
<div class="t" style="left:722.25px;width:100px;text-align:center;top:130.02px;font-size:8.6px;line-height:8.6px;color:#222">Waterfall</div>
<div class="a" style="left:794.5px;top:125px;width:58.5px;height:16px;background:#c9dcdc;box-shadow:inset 1px 1px 1px #5f8080"></div>
<div class="a" style="left:794.0px;top:125px;width:1px;height:16px;background:#9c9c9c"></div>
<div class="t" style="left:773.75px;width:100px;text-align:center;top:130.02px;font-size:8.6px;line-height:8.6px;color:#222">Spectrogram</div>
<div class="a" style="left:852.5px;top:125px;width:1px;height:16px;background:#9c9c9c"></div>
<div class="t" style="left:824.625px;width:100px;text-align:center;top:130.02px;font-size:8.6px;line-height:8.6px;color:#222">Captured</div>
<svg class="a" style="left:1028px;top:114px" width="34" height="22" viewBox="0 0 34 22">
<rect x="7.5" y="2" width="23.5" height="13.2" fill="#bdbdbd" stroke="#888" stroke-width="0.8"/>
<rect x="2" y="5" width="4" height="6" fill="#444"/><path d="M4 1.5 2.3 3.5h3.4zM4 14.5 2.3 12.5h3.4z" fill="#222"/>
<rect x="15" y="17" width="8" height="3.5" fill="#444"/><path d="M8 18.8 10 17v3.5zM30 18.8 28 17v3.5z" fill="#222"/>
</svg>
<div class="t" style="left:1004.5px;width:80px;text-align:center;top:140.22px;font-size:8.6px;line-height:8.6px;color:#333">Scrollbars</div>
<svg class="a" style="left:1078px;top:115px" width="31" height="21" viewBox="0 0 31 21">
<rect x="1.5" y="1.5" width="28.5" height="18.3" fill="#fff" stroke="#bbb" stroke-width="0.9"/>
<path d="M12 1.5v18.3M18.5 1.5v18.3M23.5 1.5v18.3M27 1.5v18.3" stroke="#aaa" stroke-width="0.9"/>
</svg>
<div class="t" style="left:1053.5px;width:80px;text-align:center;top:140.22px;font-size:8.6px;line-height:8.6px;color:#333">Freq. Axis</div>
<svg class="a" style="left:1122px;top:115px" width="31" height="21" viewBox="0 0 31 21">
<rect x="1.5" y="1.5" width="28.5" height="18.3" fill="#fff" stroke="#bbb" stroke-width="0.9"/>
<path d="M15.7 4v13M7 10.5h17.5" stroke="#111" stroke-width="1.2"/>
<path d="M15.7 2.5 13 5.5h5.4zM15.7 18.5 13 15.5h5.4zM5 10.5 8 7.8v5.4zM26.5 10.5 23.5 7.8v5.4z" fill="#111"/>
</svg>
<div class="t" style="left:1098.0px;width:80px;text-align:center;top:140.22px;font-size:8.6px;line-height:8.6px;color:#333">Limits</div>
<svg class="a" style="left:1167px;top:116px" width="20" height="20" viewBox="0 0 20 20">
<defs><radialGradient id="gear" cx="0.45" cy="0.4" r="0.6"><stop offset="0" stop-color="#e6e6e6"/><stop offset="1" stop-color="#8f8f8f"/></radialGradient></defs>
<path d="M10 0.8l1.6 2.3 2.6-1 .5 2.8 2.8.5-1 2.6 2.3 1.6-2.3 1.6 1 2.6-2.8.5-.5 2.8-2.6-1L10 19.2l-1.6-2.3-2.6 1-.5-2.8-2.8-.5 1-2.6L.8 10l2.3-1.6-1-2.6 2.8-.5.5-2.8 2.6 1z" fill="url(#gear)" stroke="#999" stroke-width="0.4"/>
<circle cx="10" cy="10" r="3.2" fill="#fafafa" stroke="#888" stroke-width="0.8"/>
</svg>
<div class="t" style="left:1137.5px;width:80px;text-align:center;top:140.22px;font-size:8.6px;line-height:8.6px;color:#333">Controls</div>
<div class="a" style="left:273px;top:166px;width:872px;height:529px;box-shadow:0 0 3px 1px rgba(0,0,0,0.35);background:#2e0052"></div>
<svg class="a" style="left:274px;top:167px" width="870" height="527" viewBox="0 0 870 527"><defs><filter id="cm" x="0" y="0" width="1" height="1" color-interpolation-filters="sRGB"><feGaussianBlur stdDeviation="0.6" result="g"/><feComponentTransfer in="g" result="col"><feFuncR type="table" tableValues="0.180 0.169 0.157 0.137 0.118 0.098 0.078 0.059 0.039 0.029 0.020 0.010 0.000 0.029 0.059 0.049 0.039 0.020 0.000 0.000 0.000 0.039 0.078 0.176 0.275 0.392 0.510 0.627 0.745 0.833 0.922 0.941 0.961 0.961 0.961 0.961 0.961 0.951 0.941 0.922 0.902"/><feFuncG type="table" tableValues="0.000 0.016 0.031 0.051 0.071 0.104 0.137 0.216 0.294 0.373 0.451 0.529 0.608 0.667 0.725 0.735 0.745 0.716 0.686 0.647 0.608 0.598 0.588 0.618 0.647 0.686 0.725 0.755 0.784 0.814 0.843 0.775 0.706 0.618 0.529 0.431 0.333 0.235 0.137 0.069 0.000"/><feFuncB type="table" tableValues="0.392 0.490 0.588 0.667 0.745 0.765 0.784 0.745 0.706 0.686 0.667 0.647 0.627 0.608 0.588 0.539 0.490 0.412 0.333 0.245 0.157 0.098 0.039 0.020 0.000 0.000 0.000 0.000 0.000 0.000 0.000 0.000 0.000 0.000 0.000 0.000 0.000 0.000 0.000 0.000 0.000"/></feComponentTransfer><feGaussianBlur in="SourceGraphic" stdDeviation="1.0" result="gb"/><feColorMatrix in="gb" type="matrix" values="0 0 0 0 0  0 0 0 0 0  0 0 0 0 0  1 0 0 0 0" result="h"/><feDiffuseLighting in="h" surfaceScale="9" diffuseConstant="1.0" lighting-color="#fff" result="lt"><feDistantLight azimuth="-30" elevation="50"/></feDiffuseLighting><feComposite in="col" in2="lt" operator="arithmetic" k1="0.85" k2="0.2" k3="0" k4="0"/></filter></defs><g filter="url(#cm)"><rect width="870" height="527" fill="#000"/><path fill="rgb(10,10,10)" fill-rule="evenodd" d="M146.5 94.5l-6.5 -26 -23.5 -68 51 0 -2.5 54 -13 25 -5.5 15zM832.5 526.5l-6 -12 -11 8 -5 -1.5 -4 2.5 -3 -2.5 -4 2 -3 -4 -4 -0.5 -4 4 -3 0 -3 2.5 -5 -5 -6 2 -7 -5.5 -8 10 -4 -7 -4 4.5 -2 0.5 -3 -0.5 -3 -5 -2 -1 -2.5 3.5 -1.5 5 -12.5 0 -6.5 -8.5 -8 7 -5 -7.5 -5 5.5 -5 2 -5 -4.5 -4 6 -2 0 -3 -3 -8 1.5 -5 -4.5 -3.5 6 -8.5 0 -3 -6 -4 1 -6 -5 -6 8 -5 -4.5 -3 4.5 -4 -3.5 -3 2.5 -4 -1 -4 3.5 -2 0.5 -4 0 -4 -5 -4 2.5 -4 -5.5 -6 6 -5 -3.5 -9 4 -4 -1 -2.5 2.5 -12.5 0 -4 -2.5 -4 -6 -5 7 -6 -5.5 -6 4.5 -9 -5.5 -7 8 -5 -4.5 -5 3 -4 -4.5 -2 0.5 -4 5.5 -6 -6 -5 5.5 -6 -5.5 -5 4 -5 -8 -5 5.5 -5 -6.5 -6 4 -3 0 -5 4.5 -3 -4 -3 0 -4 -4.5 -7 5.5 -5 -8.5 -6 4.5 -4 5 -4 -11.5 -2 -2 -4 8.5 -4 -7 -6 7.5 -4 -1 -3 1 -7 -6.5 -5 6 -2 -1 -4 1.5 -4 -2.5 -6 5 -5 -3 -8 1 -5 -4 -4 1.5 -5 -1.5 -5 0 -7 -3.5 -6 3 -11 -2 -7 1 -6 -1.5 -8 1 -4 -1.5 -19 -0.5 -8 -1.5 -5 1.5 -5 -1.5 -5 0.5 -5 -2 -12 1.5 -11 -2 -10 1.5 -5 -1.5 -5 1.5 -4 -1 -15 0.5 -6 -2 -5 0.5 -10 -2.5 -16 0 -9 -2 -119 -6.5 0 -140.5 16 6 25 3 30 -6.5 21 -10.5 3 -7 4 5 11 -2.5 3 1 7 -42.5 3 -56 1 -1 1 21 7 -36.5 4 2.5 6 1.5 8 0 2 -1.5 5 -71 1 61 1 7 3 -20.5 1 0 13 96 3 -13.5 1 0 9 41.5 11 -48 1 0 17 79 1 1 4 -21 1 0 6 29.5 6 -31.5 1 0 3 11.5 8 -42 1 0 7 33.5 8 -36.5 1 0 4 17 4 -25.5 1 0 12 75.5 9 -41 8 -69.5 1 -0.5 7 58.5 1 -2 10 -104.5 8 79.5 1 0.5 3 24.5 2 -16.5 1 0.5 6 47 9 -65 1 0 4 28.5 2 -24 2 19.5 2 -23 2 31 2 -31.5 1 22.5 1 2 2 -22 1 -1.5 2 23.5 2 -25.5 2 28 3 -40 4 54 2 -35 1 8 6 -61.5 1 0 6 61.5 3 -40 1 16.5 2 -1.5 2 15.5 2 24.5 4 -60.5 1 3.5 1 -11 1 0 3 33 2 -27 2 31 4 -49 1 0 3 29 1 -2.5 1 17.5 2 -23.5 2 8.5 1 -11 1 0 1 10.5 1 -11 3 38 2 -29 3 61.5 3 -53.5 3 45.5 3 -60.5 3 56.5 2 -42.5 1 22 2 -32 3 2.5 3 30.5 1 -7 2 31.5 4 -55.5 3 47 3 -52 2 39.5 2 -37 3 53.5 3 -42.5 2 18 2 -21.5 3 43 3 -49.5 3 48 3 -47.5 1 16.5 1 -4.5 1 0 1 7 1 -19.5 3 47 3 -38.5 2 24 2 -29 3 48 2 -40 2 33 1 0.5 2 -38.5 3 53.5 2 -23.5 1 18.5 3 -55 3 55 2 -31 1 16.5 2 -28 1 -1.5 1 18.5 2 -20.5 3 51.5 3 -47.5 2 34 3 -36 2 20.5 2 -8.5 1 16 2 -25.5 2 15.5 1 -6 3 15.5 2 -23 3 25.5 2 -26.5 2 23.5 2 -19 2 26.5 3 -21.5 2 14 1 -11.5 1 14 2 -18.5 2 21.5 1 -1.5 1 -15.5 1 1.5 2 24.5 2 -31 2 30 2 -27 2 22.5 2 -20.5 3 20 2 -16 2 26 1 1 2 -23.5 1 12.5 2 -17.5 2 22 2 -18.5 1 0.5 2 26.5 3 -26 2 21.5 3 -23 2 21 3 -20 3 28.5 2 -32.5 2 21.5 1 -12 1 -0.5 1 11.5 2 -20.5 3 28.5 2 -23.5 1 14 2 -14.5 2 25 2 -16.5 2 12.5 2 -24.5 3 32.5 2 -26.5 2 22.5 1 -13 1 1 1 13 2 -22.5 1 0 1 15 2 -18.5 1 13 2 -13 3 29 2 -24 2 9 1 -10 1 1 1 10 2 -1 1 15.5 3 -26.5 2 22.5 2 -19 1 0 2 28 3 -31 2 25.5 3 -26 2 20.5 2 -17 1 13.5 2 -18 2 20.5 2 -11.5 2 16 2 -16 2 23 2 -27 2 16 2 -11 1 11.5 2 -16 2 10 1 -12 3 27.5 2 -23 2 12.5 2 -15.5 2 25 2 -20.5 1 -0.5 1 14.5 2 -20 2 23.5 2 -19.5 1 14 2 -14.5 2 23 3 -23.5 2 27 2 -21.5 2 14.5 2 -19 2 15.5 1 -14.5 3 27.5 2 -21.5 1 -2.5 2 18 2 -16 1 11 2 -17 3 27.5 1 -1 2 -23 2 31 3 -30.5 1 12 1 -0.5 1 -10.5 2 28 2 -27 2 16 1 -11 2 14 2 -19.5 2 25 2 -19.5 3 31 2 -28 2 24 2 -21.5 3 26 2 -24.5 2 15 1 -11 3 30 2 -17.5 1 4.5 2 23.5 0 161 -6 -1.5 -4 1 -5 -5.5 -4 4 -2 0.5 -5 -6 -3 2.5 -3 -1 -5 7z"/><path fill="rgb(16,16,16)" fill-rule="evenodd" d="M146.5 94l-6.5 -27.5 -23 -66 50 0 -2.5 54 -12.5 25 -5.5 14.5zM733.5 526.5l-6 -1.5 -3.5 1.5 -4.5 -3 -4 -7.5 -8 7.5 -5 -7.5 -4 5 -7 3 -3 -4.5 -2 -1 -4 7 -4 -3 -9 0.5 -4 -3.5 -4 7 -7 0 -4 -7 -5 0 -5 -4 -6 7 -5 -4 -3 5 -1 0 -3 -4.5 -3 3.5 -4 -2 -4 4 -5 1.5 -4 -5.5 -5 2 -4 -6 -6 6.5 -2 -2.5 -1 0.5 -3 -1 -8 4 -3 -2 -3 2 -2 -1 -5 3 -2 -1.5 -4 0.5 -3 -1 -5 -7 -5 7 -7 -6.5 -5 5.5 -9 -5.5 -7 8 -5 -4.5 -4 3 -1 0 -3 -4.5 -2 -0.5 -5 6.5 -6 -6 -6 3 -5 -3 -5 3.5 -5 -7 -5 5 -5 -6.5 -6 4 -3 -1 -5 5.5 -3 -4.5 -3 0.5 -4 -4 -7 4.5 -5 -7.5 -6 3.5 -4 6 -4 -12.5 -2 -1.5 -4 8 -4 -6.5 -7 7.5 -7 -1 -6 -5 -4 5 -3 -0.5 -3 1.5 -5 -2.5 -7 5 -4 -3 -8 1 -4 -4 -5 1.5 -3 -1.5 -7 0.5 -7 -4 -6 3 -12 -2 -6 1 -8 -2 -5 1.5 -5 -2 -7 0.5 -3 -1 -4 1 -13 -2 -5 1 -10 -1 -4 -1.5 -15 1 -9 -1 -11 0.5 -5 -1 -4 1.5 -13 -1.5 -6 0.5 -6 -2 -5 1 -10 -2.5 -6 0.5 -36 -4 -102 -5 0 -134.5 15.5 6 25.5 3 30 -6 21 -10.5 3 -6 4 4.5 11 -3 3 1 7 -40 3 -58 1 -1 1 22.5 1 1.5 6 -33 18.5 0 1.5 -2.5 4 -60.5 3 62 2.5 -16 0.5 -2 1 0 13 88.5 2.5 -11.5 1.5 -1.5 9 41 9.5 -41.5 1.5 -5.5 1 0 17 75 1 1 3.5 -17.5 1.5 -1 6 27 6 -30 1 0 3 11 8 -40.5 1 -0.5 7 32.5 8 -32.5 1 -1.5 4 14 4 -22 1.5 2.5 11.5 68 8 -34.5 8.5 -67.5 1.5 -4 7 56.5 1 -1 10 -102 8 79 4 22 2 -16 1 2 6 43 9 -61 1 -1 4 27 2 -22 2 18.5 2 -22.5 2 31 2 -33 2 25.5 3 -24.5 2 23 2 -25 2 27 3 -37.5 4 53 2 -33 1 7 5.5 -57 1.5 -3.5 6 61 3 -38.5 1 16.5 2 -1.5 4 36.5 3 -47.5 1 -7.5 1 1.5 1 -13 1 -0.5 3 33.5 2 -22.5 2 30 3.5 -45.5 1.5 -5.5 2 22 1 6 1 -0.5 1 16 2 -21 2 10.5 1 -14.5 1 -2.5 1 11 1 -9.5 3 38 2 -25.5 3 55 3 -52 3 45.5 3 -49 3 44 2 -41.5 1 21 2 -31 1 0 2 5.5 3 26.5 1 -5.5 2 31.5 4 -45.5 3 41 3 -55 2 37.5 2 -35 3 50.5 3 -38 2 19 2 -21 3 37 3 -48 3 46.5 3 -46.5 1 18 2 -3 1 4.5 1 -17.5 3 43.5 3 -33 2 23 2 -32.5 3 52 2 -38.5 2 29 1 -0.5 2 -37 3 51.5 2 -23.5 1 17.5 3 -49.5 3 50.5 2 -28.5 1 15 2 -28.5 1 -0.5 1 20 1 0.5 1 -17.5 3 46.5 2 -32.5 1 -5 2 26 3 -34 2 16.5 2 -8.5 1 15.5 2 -23 2 17.5 1 -8 1 1 2 12 1 -9.5 1 -1.5 1 0.5 2 15.5 2 -26 2 24.5 2 -21 2 27 3 -23 2 14 1 -8.5 1 13 2 -19.5 2 22.5 1 -1.5 1 -17 1 -0.5 2 26.5 2 -29 2 28.5 2 -28 2 22 2 -17 1 0.5 2 14.5 2 -16 2 28 1 1.5 2 -20 1 10.5 2 -17 2 17.5 2 -16 1 0 2 25.5 3 -24 2 20 3 -23 2 24 1 0.5 2 -24 3 29 2 -30.5 2 19.5 2 -14 1 12.5 2 -21 3 30.5 2 -24 1 12.5 2 -13.5 2 23.5 2 -16 2 13 2 -25 3 36.5 2 -27 2 18.5 1 -12.5 2 15 2 -20 2 14 2 -20.5 1 13 1 0 1 -9 3 25.5 2 -23.5 2 8 1 -8.5 2 13.5 1 -2.5 1 0.5 1 16.5 3 -31.5 2 22 2 -14.5 1 0.5 2 22.5 3 -31.5 2 26.5 3 -22.5 2 23 2 -21 1 13.5 2 -20 2 20 2 -10.5 1 14.5 1 1 1 -12.5 1 -0.5 2 22 2 -22 2 13 2 -11.5 1 14 2 -17.5 2 9.5 1 -11.5 3 29 2 -23.5 2 27 2 -32 2 25 2 -18.5 1 -1 1 14.5 2 -21.5 2 21 2 -16.5 1 12 2 -13 2 19.5 3 -22 2 27.5 2 -18.5 2 16.5 2 -23 2 16 1 -16 3 28.5 3 -21 2 11.5 2 -13 1 12.5 2 -18 3 25 3 -25 2 32.5 3 -29.5 1 13 1 -0.5 1 -12 2 27 2 -26 2 15 1 -9.5 0.5 1.5 1.5 15.5 2 -23.5 2 25.5 2 -17 3 29 2 -29.5 2 25 2 -21.5 3 24 2 -23 2 16.5 1 -8.5 3 25 2 -18.5 1 4 2 24 0 154 -7 -1.5 -3 1.5 -5 -5 -5 4.5 -5 -6.5 -4 3 -3 -2 -5 7.5 -6 -12 -7 6.5 -4 1.5 -8 -2 -1 1.5 -3 -0.5 -4 1.5 -3 -8 -1 3 -3 0 -4 4.5 -3 0 -4 2.5 -4 -5.5 -6 2.5 -2 -7 -2 3.5 -3 -3.5 -3 6 -5 5 -4 -7.5 -4 6 -2 0.5 -3 -0.5 -3 -5 -2 -1 -2.5 2.5 -2.5 7z"/><path fill="rgb(22,22,22)" fill-rule="evenodd" d="M146.5 93l-6.5 -27.5 -22 -65 48 0 -2.5 54 -11.5 24 -5.5 14.5zM732.5 526l-5 -2 -2 1 -6 -2.5 -4 -9 -7 8.5 -2 -1 -4 -6.5 -4 5 -2 -0.5 -5 4 -5 -7 -2 6.5 -2 2 -4 -3.5 -6 1 -1 -1.5 -2 1 -4 -3.5 -5 7.5 -5 0.5 -2 -6 -8 -2 -5 -3.5 -5 6 -6 -3.5 -3 5.5 -1 0 -3 -5.5 -3 4.5 -4 -3 -4 5 -3 -0.5 -2 1.5 -4 -6 -4 3 -3 -2.5 -2 -4.5 -6 7 -2 -5 -1 3.5 -2 -1.5 -3 0 -6 4 -3 -2 -3 2 -2 -3.5 -1 2.5 -4 2.5 -2 -2 -3 2 -4 -1.5 -4 -7 -6 7 -7 -7.5 -5 7.5 -4 -4 -6 -2 -6 8 -5 -4.5 -4 3.5 -1 -0.5 -2 -4 -3 -2 -5 7.5 -5 -5.5 -3 0.5 -2 -3.5 -2 3.5 -5 -1.5 -3 3.5 -3 0 -4 -6.5 -4 4.5 -3 -5 -1 0.5 -2 -1.5 -6 3.5 -3 -1.5 -5 6.5 -3 -5.5 -3 1.5 -4 -4 -7 3.5 -5 -6.5 -3 2.5 -3 1 -4 6 -5 -14 -2 1 -3 7 -4 -6 -7 6.5 -3 -1 -2 1.5 -3 -1.5 -5 -4 -4 5 -3 -1 -3 1.5 -5 -2.5 -7 5 -3 -2.5 -9 0.5 -4 -4.5 -5 2 -2 -2 -8 1 -6 -4 -4 0.5 -3 2.5 -12 -2 -7 1.5 -7 -3.5 -5 2.5 -5 -2.5 -7 1.5 -3 -2 -2 1.5 -3 0 -12 -2 -4 1 -10 -1 -9 -2 -11 1.5 -10 -1 -10 0.5 -5 -1.5 -4 2 -4 -1 -15 0 -6 -2 -5 1 -10 -2 -6 0.5 -36 -4.5 -102 -5 0 -131.5 16 6 25 2.5 30 -6 21 -10 3 -6 4 4.5 11 -3 3 1 8 -47 2 -46 1 -0.5 1 21.5 7 -34.5 20 -1.5 4 -57.5 2 57 1 2 3 -18.5 1 0.5 13 87.5 3 -12.5 1 0 9 41 9 -40 2 -6 1 0 17 72.5 1 1 4 -17 2 3.5 5 21.5 6 -29 1 0.5 3 10.5 8 -40 1 0 7 32 7 -29 2 -3 1 0.5 3 11.5 4 -20.5 6 27.5 7 40.5 8 -34.5 9 -68 1 -1 7 55 1 0 10 -100 8 78.5 4 20 2 -16 1 2.5 6 41.5 9 -59 1 -1.5 4 26 2 -21 2 18 2 -22 2 31 2 -34.5 2 27 3 -26 2 23 2 -24.5 2 27 3 -36 4 52 2 -32.5 1 7.5 3 -20.5 3 -38.5 1 -1 6 60 3 -37 1 16 2 -1 4 34.5 3 -45 1 -8 1 1 1 -13 1 -1 3 34 2 -21.5 2 30 5 -52 2 21.5 1 6 1 0 1 16 2 -20.5 2 13.5 1 -18.5 1 -2.5 1 11 1 -9.5 3 38.5 2 -23.5 3 51.5 3 -50.5 3 44.5 3 -39 3 34 2 -42 1 21 2 -31 1 0 5 31.5 1 -4.5 2 32 3 -36 1 -1.5 2 36.5 1 -0.5 3 -57.5 2 37 2 -34 3 48.5 3 -36 2 20 2 -21.5 3 34.5 3 -47 3 45.5 3 -46.5 2 21 1 -3 1 2 1 -16 3 41 3 -30 2 22 2 -33 3 54 2 -37.5 2 25.5 1 -0.5 2 -36.5 3 51 2 -24 1 17.5 3 -46.5 3 48 2 -27.5 1 14.5 2 -28.5 1 0 2 23 1 -16 3 42 2 -29 1 1 2 17.5 3 -32.5 2 14 2 -8.5 1 15.5 2 -22 2 19 1 -9.5 1 0.5 2 11.5 1 -8.5 1 7.5 1 -4.5 2 11.5 2 -25 2 25 2 -22.5 2 27 3 -23.5 2 13.5 1 -6.5 1 12.5 2 -20.5 2 24 2 -20.5 1 -0.5 2 27 2 -27 2 26.5 2 -28.5 2 21.5 3 -15.5 2 13.5 2 -15.5 2 28 1 1.5 2 -16.5 1 8 2 -16 2 15 2 -15.5 1 0 2 25 3 -22.5 2 19 3 -23 2 26.5 1 3 2 -29 3 29 2 -29.5 2 18.5 2 -14.5 1 12.5 2 -20.5 3 31.5 2 -25 1 12 2 -13 2 23 2 -16 2 13.5 2 -25 3 39.5 2 -28.5 2 16.5 1 -12.5 1 2.5 1 13 2 -18.5 2 13.5 2 -21.5 1 13 1 1.5 1 -9 3 24 2 -23.5 2 8 1 -8.5 2 16 1 -3.5 1 1.5 1 16.5 3 -34 2 21 2 -12.5 3 21 3 -31.5 2 27 3 -21.5 2 26 1.5 -20.5 0.5 -4 1 13.5 2 -20.5 2 20 2 -11 1 15 1 0.5 1 -12 1 0 2 21.5 2 -17.5 2 10.5 1 -11.5 1 -1 1 17.5 2 -20 2 9 1 -11 3 31.5 2 -25 2 35 2 -42 2 25.5 3 -18.5 1 15.5 2 -23.5 2 19.5 2 -16 1 12 2 -12.5 2 18.5 3 -22 2 28 2 -16 1 23 3 -31.5 2 16 1 -16.5 3 29.5 2 -5.5 1 -13.5 2 8 2 -13 1 14.5 2 -19.5 3 24.5 3 -25 2 32 3 -29 1 13.5 1 -0.5 1 -12.5 2 26.5 2 -25.5 2 15 1 -9.5 0 1 2 18.5 2 -26.5 2 26 2 -15.5 3 28.5 2 -30.5 2 24.5 2 -21 3 23 2 -22 2 17.5 1 -5.5 3 20 2 -18.5 1 4 2 23.5 0 149.5 -3 0.5 -5 -3.5 -2 3 -4 -5 -3 0.5 -3 4 -4 -6.5 -3 1 -2 2.5 -2 -4 -6 9 -5 -11.5 -1 0 -3 1.5 -4 5 -2 -1 -2 2 -2 -1.5 -4 1 -2 -4.5 -2 4 -6 1.5 -1.5 -2.5 -1.5 -10 -2 8 -2 -1 -4 5.5 -3 0 -4 2 -4 -6.5 -6 3.5 -2 -11.5 -2 7 -3 -4 -3 7 -2 2.5 -2 0 -1 3 -1 0 -3 -8.5 -3 5.5 -3 2.5 -3 -0.5 -5 -6.5 -3 2 -3 8.5z"/><path fill="rgb(29,29,29)" fill-rule="evenodd" d="M146.5 91l-6.5 -27.5 -21.5 -63 47 0 -2.5 54 -16.5 36.5zM655.5 524.5l-2 -8 -5 1.5 -2 -2.5 -1 1 -2 -2.5 -3 -1 -3 4.5 -2 1 -2 -0.5 -1 -2 -3 -0.5 -3 6 -4 -6.5 -3 5.5 -4 -4 -2 1 -3 5.5 -2 -2 -3 1.5 -3 -6 -4 4 -3 -3 -2 -5.5 -6 8 -2 -7.5 -1 5.5 -5 -1.5 -2 3 -4 2 -3 -3 -2 2 -1 -0.5 -2 -4.5 -1 3.5 -3 3.5 -3 -2.5 -3 3 -5 -2.5 -3 -6.5 -6 7.5 -6 -6 -1 -2.5 -6 8.5 -3 -5 -2 0.5 -4 -2 -2 4 -2 -0.5 -2 5.5 -5 -5 -4 3.5 -1 -0.5 -2 -4.5 -3 -2.5 -5 8.5 -5 -6 -3 1 -2 -6 -3 4.5 -3 -0.5 -4 4 -3 0 -4 -6.5 -4 4.5 -3 -7.5 -1 2.5 -2 -1.5 -6 4 -3 -2.5 -5 7.5 -1.5 -1.5 -1.5 -5 -3 2.5 -4 -3.5 -6 3 -6 -6.5 -3 3 -3 0 -4 6.5 -5 -14.5 -2 1 -3 7 -4 -5.5 -7 6 -3 -0.5 -2 1 -1 -1 -2 0.5 -5 -4.5 -4 5.5 -3 -2 -3 2 -5 -2.5 -4 4 -3 1 -3 -3 -9 1 -4 -5.5 -3 2.5 -3 -0.5 -1 -2.5 -2 2.5 -3 -1 -3 1 -6 -3.5 -4 0 -3 2.5 -3 -1 -3 1 -6 -1.5 -7 1 -7 -4.5 -2 2.5 -3 1 -5 -2.5 -3 1.5 -4 0.5 -3 -3.5 -2 2.5 -4 0 -11 -2 -4 0.5 -10 -1 -9 -2 -6 2 -3 -1.5 -2 1.5 -10 -1 -5 1.5 -10 -3 -4 2.5 -4 -1.5 -15 0.5 -6 -2 -5 1 -35 -5 -17 -1.5 -102 -5 0 -128.5 16 5.5 25 3 30 -6 21 -10 3 -6 1 0 2 4 12 -2.5 3 1 8 -45.5 2 -41 1 -0.5 1 17.5 7 -35 7 -2 13 -0.5 4 -49 2 49.5 1 2 3 -18 1 0.5 13 86 3 -11.5 1 0 9 41.5 9 -40.5 2 -5 1 0.5 4 13 10.5 50.5 3.5 7.5 3 -13 1 -2.5 1 0.5 6 23 6 -28 1 0 3 10.5 8 -39.5 1 0 7 31.5 6 -25.5 1 -2 1 1 2 -5 3 11 4 -18 6 25 7 40 8 -33.5 9 -66.5 1 -1.5 4.5 38 3.5 17 10 -98.5 9 84.5 1 0 2 12 2 -16 7 43 10 -59 4 25 2 -19.5 2 17.5 2 -22 2 31 2 -35.5 2 28 2 -24.5 1 -2.5 2 23 2 -24 2 26 3 -35 4 51.5 2 -31 1 7 3 -15.5 3 -43.5 1 -0.5 6 59.5 3 -35.5 1 16 2 -1 1 9 1 0.5 2 22.5 3 -41.5 1 -8.5 1 -0.5 1 -13.5 1 -1.5 3 34 2 -18 2 30 5 -54.5 5 43.5 2 -19 2 16.5 2 -26.5 1 11.5 1 -9 3 38.5 2 -20.5 3 47 3 -50 3 45 4 -33 2 27.5 2 -41.5 1 20.5 2 -30.5 1 -0.5 5 31.5 1 -3.5 2 32 3 -30.5 1 2 2 32 1 -1.5 3 -60.5 2 35.5 2 -33 3 47 3 -33 2 21.5 2 -22 3 30.5 3 -46 3 44.5 3 -45.5 2 25 2 -5 1 -14 3 38 3 -26 2 21 2 -35.5 3 57.5 2 -36.5 2 22 1 -1.5 2 -35 3 49.5 2 -24 1 17 3 -43 3 45 2 -26 1 13.5 2 -28.5 1 0.5 2 26.5 1 -15 1 6 2 31.5 2 -24.5 2 16 1 0 3 -31.5 2 11 2 -8.5 1 15.5 2 -21 2 21 1 -11.5 1 0.5 1 9 1 1 1 -6.5 1 15.5 2 -9.5 1 8.5 2 -24.5 2 26 2 -24.5 2 27.5 3 -25 2 13.5 1 -3.5 1 11.5 2 -21.5 2 25.5 3 -24.5 2 29 2 -25 2 25 2 -30 2 21.5 3 -14 2 11 2 -15.5 2 29.5 1 2 2 -14 1 7.5 2 -17 2 12 2 -14 1 0 2 24.5 3 -21 2 17.5 3 -23 3 34.5 2 -34 3 29 2 -28 2 17 2 -15.5 1 13 2 -20.5 3 33 2 -25.5 1 11 2 -12.5 2 22.5 2 -16 2 13.5 2 -25 3 43.5 2 -30.5 2 14 1 -12.5 0.5 1.5 1.5 15.5 2 -17 2 13 2 -23 2 16 1 -8.5 1 4 2 18 2 -23 2 7 1 -7.5 2 18.5 1 -4.5 1 2 1 17 3 -38.5 2 21.5 2 -10 3 18 3 -31.5 2 27.5 3 -19.5 2 29 1.5 -24 0.5 -4.5 1 13.5 2 -21.5 2 19 2 -10 1 15 1 0.5 1 -11.5 1 1 2 21 2 -13 2 7.5 1 -12.5 1 -0.5 1 21 2 -22.5 2 8.5 1 -10.5 3 33.5 2 -26 2 31.5 2 -41 2 26.5 3 -17.5 1 16 2 -25.5 2 18 1 -12.5 1 -2 1 11 2 -11.5 2 16 3 -21 2 28 0 1 2 -13.5 1 20 1 1 2 -31.5 2 16 1 -17.5 3 31 2 -2 1 -14.5 1 -1 1 3.5 1 -10.5 1 -0.5 1 16 2 -20.5 3 22.5 3 -25.5 2 33 3 -28.5 1 14.5 1 -1 1 -13 2 25.5 2 -24.5 2 13.5 1 -8.5 2 23 2 -30 2 26.5 1 -14 1 0 3 27.5 2 -31.5 2 25 2 -21.5 3 22 2 -21 2 19 1 -3 2 6 1 9.5 2 -19 1 3.5 2 23.5 0 145.5 -3 1 -5 -5.5 -2 4.5 -4 -4.5 -3 -1 -3 5.5 -4 -8 -3 2 -2 3 -2 -5.5 -6 10.5 -5 -12 -4 1.5 -4 5.5 -2 -2 -2 2.5 -2 -2 -2 2 -2.5 -1.5 -1.5 -5.5 -2 5 -2 1.5 -2 -0.5 -2 1 -1.5 -1.5 -1.5 -11 -2 9 -2 -2.5 -3 6 -1 1 -2 -1 -5 3 -4 -8.5 -6 5 -2 -12 -2 7 -3 -5.5 -3 9 -2 2 -2 -1.5 -1 4.5 -1 0 -3 -9 -5 9.5 -4 -0.5 -4 -6 -1 -1 -2 1.5 -1 -1 -3 10 -5 -1.5 -2 1 -2 -2.5 -3 0.5 -2 -1.5 -3 -10 -7 10.5 -1.5 -0.5 -4.5 -8 -3 5 -1 1 -2 -2 -5 5.5 -5 -9 -3 10 -5 -3 -6 1 -1 -3 -2 2.5 -4 -3.5 -4 6.5 -4 0 -2 1z"/><path fill="rgb(35,35,35)" fill-rule="evenodd" d="M147.5 87.5l-1 0.5 -6.5 -26.5 -20.5 -61 45 0 -2 54 -15 33zM732.5 522.5l-7 0.5 -2 -4 -4 1.5 -2 -4 -2 -9 -2 4 -1 -0.5 -2 6.5 -2 2 -6 -9 -3 6 -1 0.5 -2 -3.5 -1.5 4 -3.5 3 -5 -10.5 -3 12 -5 -3.5 -6 1 -1 -4 -2 3.5 -4 -3.5 -4 6.5 -4 0 -2 1.5 -2 -10.5 -5 4 -2 -3.5 -1 1.5 -2 -2.5 -3 -0.5 -3 4.5 -4 -0.5 -1 -2.5 -3 0.5 -3 7 -2 -2.5 -2 -5.5 -3 6 -4 -4.5 -2 0.5 -3 7 -2 -3 -3 2 -3 -6.5 -4 4.5 -2 -3.5 -1 1 -2 -6.5 -6 8 -2 -7.5 -1 6 -4 -0.5 -1 -2 -2 4 -4 2.5 -3 -4 -2 2.5 -0.5 -0.5 -2.5 -5.5 -4 8 -3 -3.5 -3 5 -5 -3.5 -3 -6.5 -4 6.5 -1 1 -2 -0.5 -5 -5 -1 -4 -2 4 -1 -1 -2 7 -2 -1 -2 -5 -2 1.5 -4 -2.5 -2 4.5 -2 -1.5 -2 6.5 -5 -5 -4 3.5 -1 -0.5 -2 -5 -3 -3 -4 8.5 -2 0.5 -4 -5.5 -3 0.5 -2 -6 -3 3 -4 1.5 -3 4 -2 -1.5 -1 1.5 -1 -0.5 -3 -5.5 -2 0.5 -2 3.5 -3 -9 -1 3.5 -2 -1 -6 4 -3 -3.5 -2 5 -3 4 -1.5 -2 -1.5 -6.5 -3 4 -3 -3 -7 1.5 -6 -5 -3 2.5 -3 -0.5 -4 7.5 -5 -15 -2 1 -3 7 -4 -5.5 -5 2.5 -3 3.5 -2 -0.5 -2 1 -1 -1.5 -2 1 -5 -4 -4 5 -3 -2.5 -2 3 -1 0 -1 -2 -4 -1 -4 4 -3 1 -3 -3 -6 1.5 -3 -0.5 -4 -6 -3 3.5 -3 -1 -1 -3.5 -2 3.5 -3 -1.5 -3 1.5 -6 -3.5 -3 0.5 -1 -1 -3 3 -3 -1.5 -3 1.5 -6 -1.5 -7 1.5 -7 -6 -2 3.5 -3 1 -5 -3 -3 2 -4 0.5 -3 -4 -2 2.5 -4 0.5 -4 -1.5 -28 -2 -2 -2 -6 3 -3 -2.5 -2 2.5 -5 -1 -3 0.5 -4 -0.5 -3 1.5 -10 -3.5 -4 3 -5 -1.5 -14 0 -6 -2 -6 2 -34 -6 -17 -1 -102 -5 0 -126 16 5.5 25 2.5 30 -6 21 -9.5 3 -6 1 0 2 4.5 12 -3 3 1 8 -43 2 -36.5 1 -0.5 1 12.5 7 -35.5 7 -3 13 -0.5 4 -37 2 39.5 1 1.5 3 -17.5 1 0.5 13 85 3 -11 1 0 9 41.5 9 -40.5 2 -3.5 2 2 3 9.5 2 13 6 22 2 15 4 7 3 -12 1 -2 2 2 5 20 6 -27 1 0 2 9 1 0.5 8 -38 1 0 5 26 2 5 6 -25 1 -1 1 3 2 -8.5 3 10.5 4 -16 6 23.5 5 33.5 2 5.5 8 -33 10 -66 4 35.5 4 19.5 10 -98 9 87 1 -3 2 10.5 2 -15.5 7 41.5 10 -57 4 24 2 -18 2 16.5 2 -21.5 2 31.5 2 -37 2 29.5 2 -26 1 -2.5 2 23 2 -24 2 25.5 3 -33.5 4 51 2 -30.5 1 7 3 -10.5 3 -47.5 1 -1 6 59 3 -34 1 16 2 -0.5 1 8 1 -1 2 21.5 3.5 -41 3.5 -23.5 3 34.5 2 -15 2 29.5 5 -56.5 5 43.5 2 -17.5 2 19.5 2 -31.5 1 11.5 1 -8 3 38.5 1 1 1 -19 3 42.5 3 -49 3 45 4 -30.5 2 24 2 -41 1 20.5 2 -30.5 1 -1 5 32 1 -2.5 2 32 3 -25 1 1 2 27.5 1 1.5 3 -63.5 2 34.5 2 -31.5 3 45 3 -30 2 22.5 2 -22.5 3 27 3 -45 3 43.5 3 -45 2 29.5 3 -21 3 35 3 -22.5 2 20.5 2 -38 3 61 2 -35.5 2 18 1 -1.5 2 -34.5 3 48.5 2 -24 1 16 3 -39 3 42.5 2 -25 1 13 2 -29.5 1 1.5 2 30 1 -14 1 3 2 30.5 2 -20.5 2 14.5 1 -1.5 3 -30.5 2 8.5 2 -9 1 15.5 2 -19.5 2 23 1 -13.5 1 0 1 8.5 1 0.5 1 -5 1 15.5 2 -9.5 1 9 2 -24.5 2 27.5 2 -26.5 2 28 3 -26.5 1 11 1 3 1 -1.5 1 11 2 -22.5 2 27 3 -27.5 2 30.5 2 -23.5 2 23.5 2 -30.5 2 20.5 1 -0.5 2 -11.5 2 8.5 2 -15 3 32.5 2 -10.5 1 5.5 2 -17 2 8.5 2 -12 1 -0.5 2 24.5 3 -19.5 1 14.5 1 1.5 3 -23.5 3 39 2 -38.5 3 29.5 2 -26.5 2 15.5 2 -16 1 13 2 -20.5 3 35 2 -26.5 1 9.5 1 -1 1 -11 2 22 2 -16 2 14 2 -25 3 47 2 -31.5 2 10.5 1 -11.5 2 17.5 2 -15 2 12.5 2 -25 1 13 1 5 1 -7.5 3 20 2 -23.5 2 6.5 1 -7 2 21.5 1 -6 1 3 1 17.5 3 -42.5 2 21 1 -0.5 1 -6 3 14.5 3 -32 2 28.5 3 -17.5 2 31.5 1.5 -28 0.5 -4 1 13.5 2 -22.5 2 18.5 2 -9.5 1 15 1 0 1 -11 1 2.5 2 20 2 -8 2 5 1 -14.5 1 0.5 1 23.5 2 -24 1 7 1 0.5 1 -9.5 3 34.5 2 -26 2 28.5 2 -40 2 26.5 3 -15.5 1 16 2 -27 2 15.5 1 -11.5 1 -1.5 1 10.5 2 -11 2 14.5 3 -20.5 1.5 26 0.5 4 2 -11.5 2 21 1 -28 1 -5 2 16 1 -18.5 3 32.5 1 0 1 -4 2 -15 1 2 1 -10.5 1 1 1 17.5 2 -21.5 3 21.5 3 -26.5 2 33.5 3 -27.5 1 15 1 -0.5 1 -14.5 2 25 2 -24 2 13 1 -7.5 2 25 2 -33 2 27 1 -14 4 28.5 2 -33 2 26 2 -21.5 3 20.5 2 -20.5 2 21 1 -1.5 2 3 1 8.5 2 -19.5 1 3.5 2 24 0 141 -3 1.5 -5 -8 -2 6.5 -4 -4.5 -2 0.5 -1 -2 -3 6 -4 -9 -5 6 -2 -7 -3 8.5 -3 3.5 -5 -12.5 -4 2 -4 6 -2 -3.5 -2 3.5 -2 -3 -1.5 3 -1.5 0.5 -3 -8 -4 7.5 -2 -1.5 -2 1.5 -1 -0.5 -2 -12 -2 9 -2 -3 -3 7 -1 0.5 -2 -1.5 -5 3.5 -4 -9.5 -1 2 -2 0 -3 4 -2 -12.5 -2 6.5 -1 0 -2 -6 -2 8 -3 4 -2 -3 -1 6.5 -1 0 -3 -10.5 -3 8 -3 3.5 -3 0 -4 -6.5 -1 -1.5 -2 1.5 -1 -3 -3 11.5z"/><path fill="rgb(41,41,41)" fill-rule="evenodd" d="M147.5 85.5l-8.5 -29 -18.5 -56 43.5 0 -2 54 -14.5 31zM729.5 522l-4 -0.5 -2 -5 -3 3.5 -2 -1.5 -3 -13 -2 4 -1 -1 -2 7.5 -2 2 -6 -9.5 -4 7 -2 -4.5 -1.5 4.5 -3.5 4 -5 -12 -3 13.5 -5 -3.5 -6 0.5 -1 -5 -2 4.5 -4 -3 -4 6.5 -4 -1 -2 2 -2 -11 -4 5 -1.5 -0.5 -1.5 -4.5 -1 2 -2 -2.5 -2 1.5 -2 -1 -2 4.5 -4 -2 -1 -2.5 -3 1 -3 8 -2 -2.5 -2 -7 -3 7.5 -4 -6 -1 1.5 -1 -1 -3 8 -2 -4 -1 -0.5 -2 3.5 -3 -7 -4 5.5 -2 -4.5 -1 1.5 -2 -7.5 -1 0 -5 9 -2 -8 -1 6.5 -1 0.5 -3 -1 -1 -2.5 -2 4.5 -4 3 -3 -5 -2 3 -3 -6 -4 7.5 -3 -4 -3 6.5 -5 -3.5 -3 -7 -4 7 -3 0.5 -5 -5.5 -1 -5 -2 5 -1 -2 -2 8.5 -1 0.5 -1 -1.5 -2 -6.5 -3 2.5 -3 -2.5 -2 5 -2 -1.5 -2 6.5 -5 -5 -4 3.5 -1 -0.5 -2 -5.5 -3 -3.5 -5 10.5 -5 -6 -3 0.5 -2 -7 -2 2.5 -4 1.5 -4 5.5 -2 -2 -1 2 -1 -0.5 -3 -5.5 -2 0.5 -2 3.5 -3 -9.5 -1 3.5 -2 -1 -2 2.5 -4 2 -3 -4.5 -2 6 -3 4 -1.5 -2 -1.5 -7 -1 0 -2 4.5 -3 -3 -7 1 -6 -4.5 -3 3 -3 -1.5 -4 8 -5 -15.5 -2 1 -3 7 -4 -5 -2 2 -3 -0.5 -3 4.5 -2 -1 -2 1.5 -1 -2.5 -2 2 -5 -4 -4 5.5 -3 -3 -2 3.5 -2 -3 -4 -1 -3 3.5 -4 2 -3 -3 -4 0 -2 1.5 -3 -0.5 -4 -7 -3 4.5 -2 -0.5 -2 -4.5 -2 4 -3 -1.5 -4 1.5 -5 -3.5 -3 0.5 -1 -1.5 -3 3.5 -3 -1.5 -3 1.5 -6 -1.5 -7 2 -5.5 -4.5 -1.5 -3 -3 5 -2 0.5 -5 -4 -3 3 -4 1 -3 -5 -2 3 -4 0.5 -4 -2 -5 0.5 -4 -1.5 -5 1 -9 -2.5 -5 1 -2 -2.5 -2 2 -4 1.5 -3 -3.5 -2 3.5 -5 -1.5 -3 1.5 -4 -1 -3 1.5 -6 -1.5 -4 -2.5 -4 3.5 -5 -1.5 -14 -0.5 -6 -1.5 -6 2 -15 -2 -19 -4 -17 -1.5 -102 -4.5 0 -123.5 16 5.5 25 2.5 30 -6 21 -9.5 3 -6 1 0 2 4.5 12 -2.5 3 0.5 7.5 -39.5 2.5 -32.5 1 -0.5 1 6.5 7 -35.5 8 -3.5 12 -0.5 1.5 -6 1.5 -18.5 1 2 1 21 2 6.5 3 -17 1 0.5 13 84 3 -10 1 -0.5 9 42 10 -43.5 3 2 3 8 2 14 6 20.5 2 16.5 2 1.5 2 4 3 -11.5 1 -1 2 1 5 19.5 6 -26.5 1 0.5 3 9.5 1 -2.5 7 -35.5 1 -0.5 5 27 2 4 6 -24 2 1 2 -8.5 3 10.5 2 -10 2 -4 6 21.5 5 34 2 4 5 -24.5 3 -7.5 10 -65 3.5 31.5 4.5 23.5 10 -96.5 9 87 1 -3.5 2 9 2 -16 2 18.5 5 22.5 10 -55.5 4 23 2 -17 2 16.5 2 -21 2 31.5 2 -39 2 31 2 -26.5 1 -3 2 22.5 2 -23.5 2 24.5 3 -31.5 4 50 2 -29 1 6.5 3 -7.5 3 -50 1 -1 4 48.5 2 10 3 -32.5 1 16 1 1 1 -1.5 1 8 1 -2.5 2 20.5 7 -64 3 35 2 -12.5 2 29.5 5 -58.5 5 43.5 2 -16.5 2 20 2 -34 1 11.5 1 -7 3 39 1 3.5 1 -19.5 3 38.5 3 -48.5 3 46 4 -28.5 2 21 2 -40.5 1 20 2 -30.5 1 -1 2 18.5 3 13.5 1 -1.5 2 32.5 3 -23 1 -0.5 3 29 3 -64 2 33.5 2 -30.5 3 43 3 -27 2 23 2 -22.5 3 23.5 3 -44.5 3 42.5 3 -44 2 30 3 -19 3 32 2 -18.5 1 -0.5 1 18 1 1.5 2 -40 3 63.5 2 -34 1 14.5 1 0.5 3 -35.5 3 47 2 -24 1 15.5 2 -34 1 -1.5 3 39.5 2 -23.5 1 12 2 -29.5 1 2 2 33 1 -13.5 1 1.5 2 28.5 2 -18 1 0.5 1 11.5 1 0 3 -29 1 0 1 5.5 2 -9 1 15.5 2 -18.5 2 24.5 1 -14.5 1 -0.5 1 8 2 -4 1 15 2 -9 1 9.5 2 -24 2 28 2 -28 2 28.5 2 -25.5 1 -2.5 4 25 2 -23.5 2 28.5 3 -30 2 32 2 -22 2 22.5 2 -32 3 22 2 -12.5 2 6 2 -14.5 3 34 2 -8 1 4.5 2 -16.5 2 5 2 -11 1 -0.5 2 24 3 -18 1 15.5 1 -0.5 3 -23.5 3 38.5 2 -38.5 3 30 2 -25 2 14 2 -17 1 13.5 2 -21 3 37 2 -27 1 8.5 1 -0.5 1 -11 2 21 2 -15.5 2 14.5 2 -26 3 49 2 -31 1 7.5 1 0.5 1 -11.5 2 19 2 -14 2 12 2 -26.5 2 20 1 -7 3 18 2 -23.5 2 6.5 1 -6.5 2 23 1 -6.5 1 3.5 1 16.5 3 -44.5 2 20.5 1 0.5 1 -4 3 11.5 3 -32.5 2 29.5 3 -16 2 32 1.5 -29.5 0.5 -3.5 1 13.5 2 -23.5 2 18 2 -9 1 15 1 -0.5 1 -10.5 0.5 1.5 2.5 22 2 -6 2 4.5 1 -15.5 1 1.5 1 22.5 2 -23 1 8 1 -0.5 1 -9 3 31.5 2 -22.5 2 25.5 2 -38.5 2 26.5 3 -14.5 1 15.5 2 -27.5 2 14 1 -11 1 -0.5 1 10 2 -10.5 2 12 3 -19.5 1 26.5 1 4.5 1 -10.5 1 1 2 18.5 2 -32.5 2 16.5 1 -19.5 3 33.5 2 -5 2 -15 1 0.5 1 -10.5 2 21.5 2 -22.5 2 20.5 1 0 3 -27.5 2 34.5 3 -27.5 1 16.5 1 -1 1 -15 2 23.5 2 -23 2 12 1 -6.5 2 27.5 2 -35.5 2 27.5 1 -14.5 2 21.5 2 8 2 -34 2 26 2 -21.5 3 19.5 2 -19.5 2 22.5 1 -2 1 2 1 -0.5 1 8.5 2 -20 1 3 2 24 0 137 -2 2 -1 0 -5 -9.5 -2 7 -1 0.5 -3 -4.5 -2 0.5 -1 -3 -3 7 -4 -10.5 -2 5 -1 -1 -2 4 -2 -9 -2 7.5 -3 5.5 -2 -0.5 -4 -11.5 -1 1.5 -3 0.5 -4 6.5 -2 -5 -2 4.5 -2 -4 -1.5 4.5 -1.5 0.5 -3 -8.5 -4 7.5 -2 -2 -2 2 -1 -0.5 -2 -12.5 -2 9.5 -2 -4 -2 7.5 -2 1.5 -2 -2 -5 3.5 -4 -11 -1 2.5 -2 0 -3 4.5 -2 -12.5 -3 6.5 -2 -5.5 -2 7.5 -3 4 -2 -3 -2 7 -3 -11.5 -2 7 -4 5.5 -1 -0.5 -2 1 -5 -8.5 -1 1.5 -1 -0.5 -1 -3 -2 11 -4 2z"/><path fill="rgb(48,48,48)" fill-rule="evenodd" d="M147.5 82.5l-26.5 -82 42 0 -2 54 -13.5 28zM728.5 521.5l-1 -1.5 -2 0.5 -2 -6.5 -3 5 -2 -1.5 -3 -14 -2 4 -1 -1 -2 8 -2 2 -6 -10 -3 7.5 -1 0 -2 -5 -2 5.5 -1 0 -2 4 -5 -13 -3 14 -5 -3.5 -4 0 -1 1 -2 -6 -2 5.5 -4 -3.5 -4 6.5 -2 -2 -2 1 -2 2.5 -2 -12 -4 6 -1 -0.5 -2 -5.5 -1 2 -2 -2.5 -2 2 -2 -1 -2 5 -5 -5.5 -3 1.5 -3 8.5 -2 -3 -2 -7 -3 8 -4 -7 -1 1.5 -1 -1 -3 9 -2 -5.5 -1 0 -2 4 -3 -7.5 -1 3 -3 3 -2 -5 -1 2 -2 -8 -1 0.5 -2 5 -3 3.5 -2 -8 -2 8 -3 -1.5 -1 -3 -2 5 -4 3 -3 -5.5 -2 3.5 -3 -6.5 -4 8 -3 -4.5 -3 7.5 -5 -4 -3 -7 -4 7.5 -3 0 -5 -5.5 -1 -5 -2 4.5 -1 -1.5 -2 9 -1 0.5 -1 -1.5 -2 -7.5 -3 3.5 -3 -2.5 -2 4.5 -2 -1.5 -2 7.5 -5 -5.5 -4 3.5 -1 -1 -2 -6 -3 -3.5 -4 10.5 -2 0.5 -4 -5.5 -3 0.5 -2 -7.5 -2 2.5 -4 1.5 -4 6 -2 -2 -2 2 -3 -6 -2 0.5 -2 3 -3 -10 -1 4 -2 -1 -2 3 -4 1.5 -3 -5 -2 7 -3 4 -1.5 -1 -1.5 -8.5 -1 0 -2 4.5 -2 -2.5 -3 1 -3 -1.5 -2 0.5 -6 -3 -3 2.5 -3 -2 -4 8.5 -5 -15.5 -2 0.5 -2 7 -1 0 -1 -2 -3 -2 -2 1.5 -3 -1 -3 5 -2 -1.5 -2 1.5 -1 -2.5 -2 2.5 -5 -3.5 -4 5 -3 -3 -2 3.5 -2 -3.5 -4 -0.5 -3 3.5 -4 2 -2 -3 -5 0 -2 1.5 -3 -0.5 -4 -7.5 -3 5 -2 -1 -2 -4.5 -2 4.5 -3 -2 -4 2 -5 -3.5 -3 1 -1 -3 -3 4.5 -3 -2 -3 2 -6 -2 -2 2 -2 -1.5 -3 2.5 -4.5 -4 -2.5 -4.5 -3 5.5 -2 0 -5 -3.5 -3 3.5 -4 0.5 -3 -5 -2 3 -4 0.5 -4 -2.5 -2 1 -2 -1 -1 1 -4 -2 -2 1 -4 0 -8 -2.5 -5 1.5 -2 -3 -2 2 -2 0 -2 1.5 -3 -3.5 -2 4 -5 -1.5 -3 1.5 -4 -1.5 -3 2.5 -2 -1.5 -4 -0.5 -4 -3 -4 4 -5 -2 -14 0 -6 -2 -6 2.5 -15 -1.5 -7 -3 -12 -2 -17 -1.5 -102 -4.5 0 -120.5 16 5.5 25 2.5 30 -6 21 -9 3 -6 1 0 2 4 12 -2.5 3 1 7.5 -39.5 2.5 -25 1 -2.5 1 2 0.5 -1.5 6.5 -33.5 3 -3 5 -2 12 0 3 -15.5 2 16 2 5.5 3 -15.5 1 0.5 13 82 3 -9.5 1 0 9 42 10 -43.5 3 2 3 7 2 15 6 19.5 2 17 1 1 1 -0.5 2 4 3 -11 2 1 1 -1 5 18.5 6 -25.5 4 10 1 -2.5 7 -35 1 -0.5 5 27 2 4 2 -12 4 -12 2 0.5 2 -8 3 9.5 3 -11.5 1 0 6 19.5 5 33.5 2 3.5 5 -25 3 -6.5 10 -63 3 29 5 25.5 3 -37 7 -58 3 37 2 14 1 1 3 33.5 1 -3 2 8 2 -16 2 19.5 3 8.5 2 11.5 10 -53.5 4 22.5 2 -16 2 15.5 2 -20.5 2 31.5 2 -40 2 32 3 -30.5 2 22.5 2 -23 2 23.5 0.5 -1.5 2.5 -29 4 49.5 2 -28 1 6.5 1 -2 1 1 1 -5.5 3 -50.5 1 -1 4 50 2 8 3 -31 1 16 1 1 1 -1.5 1 7.5 1 -4 2 20 7 -63.5 3 35.5 2 -9.5 2 28.5 5 -60 5 43.5 2 -15 2 18 2 -34.5 1 12 1 -6.5 3 39.5 1 4 1 -18 3 34.5 3 -47.5 3 46 4 -26.5 2 18.5 2 -40.5 1 19.5 2 -29.5 1 -1.5 2 19.5 1 4.5 1 0 1 7.5 1 0 2 32.5 3 -22.5 1 0 2 25.5 1 1.5 3 -63 2 32.5 2 -29.5 3 41.5 3 -24.5 2 23.5 2 -22 3 20 3 -43.5 3 41.5 3 -43 2 30 3 -17 3 29 2 -16 1 0.5 1 17.5 1 1 2 -42 3 64 2 -31.5 1 12.5 1 0.5 1 -3 2 -32.5 3 46 2 -24 1 14.5 2 -32 1 0.5 3 36.5 2 -21.5 1 10.5 2 -30 3 36.5 1 -13 1 1.5 2 27.5 2 -17.5 1 1 1 10.5 1 0.5 3 -27 1 -1.5 1 4.5 2 -9 1 15.5 2 -17.5 2 24.5 1 -14.5 1 -0.5 1 7 2 -3 1 15 2 -9 1 9.5 2 -23 2 27 2 -28 2 29 2 -27 1 -2.5 4 26.5 2 -24 2 28.5 3 -32 2 33.5 2 -21 2 21.5 2 -32.5 3 23.5 2 -13 2 4 2 -14.5 3 35.5 2 -8 1 5 2 -16 2 2.5 1 -6 2 -4 2 23.5 1 -1 2 -16 1 16 4 -25.5 3 38.5 2 -39 3 30.5 2 -24 2 13 2 -18 1 14 2 -21 3 38 2 -27.5 1 8 1 0 1 -11 2 20.5 2 -15.5 2 14.5 2 -26 3 48.5 2 -28.5 1 7 2 -13 2 20 2 -12.5 2 11.5 2 -27.5 2 21 1 -6 1 0 2 16 2 -23.5 2 6 1 -5.5 2 23 1 -5.5 2 18 3 -45 2 20 1 2 1 -3 3 9 3 -33 2 30.5 1 -1 2 -13 2 30.5 2 -31.5 0 -1 1 13.5 2 -24.5 2 17 2 -8.5 1 15.5 1 -1 1 -9.5 3 24 2 -5.5 2 5 1 -16 1 1.5 1 21.5 2 -21 1 7.5 1 -0.5 1 -9 3 30 2 -21 2 24 2 -37.5 2 27 3 -14.5 1 14 2 -26 2 12 1 -10 1 0 1 9.5 2 -9.5 2 10 3 -19 1 27.5 1 4 1 -10.5 3 19 1 -26.5 1 -5 2 16.5 1 -20.5 3 34 5 -21 1 -10 2 23.5 2 -23 2 21.5 1 -2.5 3 -28 2 35.5 3 -27 1 17 1 -1 1 -16 2 23 2 -22.5 2 11.5 1 -6 2 27.5 2 -36 2 28 1 -15 2 21.5 2 9 2 -35 2 26.5 2 -21 3 17.5 2 -18 2 23 1 -2.5 1 2.5 1 -1 1 7.5 2 -20.5 1 3 2 24.5 0 132 -2 3 -1 -0.5 -5 -10 -3 8 -3 -4.5 -2 0.5 -1 -4 -3 8.5 -4 -11.5 -2 5.5 -1 -1.5 -2 5 -2 -10 -2 8.5 -3 5 -2 -0.5 -4 -12 -1 2 -2 -0.5 -1 1 -2 5.5 -2 1.5 -2 -6 -2 4.5 -2 -4.5 -1.5 6 -1.5 0.5 -3 -9.5 -4 8 -2 -3 -2 2.5 -1 -0.5 -2 -12.5 -2 9.5 -2 -4.5 -2 9 -2 1.5 -2 -3 -5 4 -4 -11 -1 2 -2 0 -3 5 -2 -13 -3 6.5 -2 -5.5 -2 7.5 -1 1.5 -1 0 -1 2 -2 -3 -2 8 -3 -12 -5 13 -2 -0.5 -2 1.5 -5 -9 -1 2 -1 -1 -1 -3.5 -2 11 -5 3.5z"/><path fill="rgb(54,54,54)" fill-rule="evenodd" d="M148.5 79l-1 0.5 -1 -2 -24.5 -77 40 0 0 28 -1.5 26 -12 24.5zM728.5 521l-1 -2 -2 0.5 -2 -7.5 -3 5.5 -2 -1 -3 -15 -2 4 -1 -1 -2 8.5 -2 2.5 -6 -11 -3 8.5 -1 -0.5 -2 -5.5 -2 6 -1 -0.5 -2 4.5 -2 -7.5 -3 -6 -3 15 -2 -2.5 -2 0 -1 -1.5 -4 0 -1 1.5 -2 -7 -2 6 -2 -0.5 -1 -3 -1 0 -4 6 -2 -2 -2 1 -2 3 -2 -13 -4 7.5 -1 -0.5 -2 -6.5 -1 2.5 -2 -3 -2 3 -2 -1 -2 5 -5 -6.5 -3 1.5 -3 9.5 -2 -3 -2 -8 -3 8.5 -3 -6.5 -1 -0.5 -1 1.5 -1 -1.5 -3 10 -2 -6.5 -1 0 -2 4.5 -3 -8 -1 3.5 -3 3 -2 -5.5 -1.5 2 -1.5 -7.5 -6 8.5 -2 -8 -2 9 -3 -2.5 -1 -3 -2 5.5 -4 3.5 -3 -6.5 -2 3.5 -3 -6.5 -4 8 -3 -4 -3 8 -3 -3.5 -2 -1 -3 -7 -4 8 -3 -0.5 -5 -5 -1 -5.5 -2 4.5 -1 -2 -2 10 -1.5 0 -2.5 -9 -3 4 -2 -0.5 -1 -2.5 -2 5 -2 -1.5 -2 7.5 -5 -5.5 -4 3.5 -1 -1 -4 -10 -1 0 -4 11 -2 0.5 -4 -6 -3 0.5 -2 -8 -2 2.5 -4 2 -4 6.5 -2 -2.5 -2 2.5 -2 -5.5 -3 0 -2 3 -3 -10.5 -1 3.5 -2 0 -2 3.5 -3 0.5 -2 -0.5 -2 -4.5 -2 7.5 -4 4 -2 -9.5 -1 -0.5 -2 5 -2 -3 -3 1.5 -3 -2 -2 0.5 -2 -1.5 -2 0 -2 -1 -3 3 -3 -3 -4 9.5 -5 -16 -2 0.5 -2 7 -4 -4 -3 1.5 -3 -1.5 -3 5 -2 -1 -2 1.5 -1 -3 -2 3.5 -5 -4 -4 5.5 -3 -4 -2 4.5 -2 -4 -2 0.5 -2 -1 -3 3.5 -2 0 -2 2 -2 -3.5 -5 0.5 -2 2 -3 -1 -4 -7.5 -3 5 -2 -1 -2 -5 -2 5 -3 -2.5 -4 2.5 -3 -1 -2 -2.5 -3 1 -1 -3.5 -3 5 -3 -2.5 -2 2.5 -7 -2 -2 2 -2 -1.5 -3 2.5 -4 -3.5 -3 -5.5 -3 6 -2 0 -5 -4 -3 4 -4 0.5 -3 -5 -2 3 -4 0.5 -4 -3 -2 1.5 -2 -1 -1 1 -4 -2.5 -2 1.5 -7 -1 -5 -2 -5 1.5 -2 -3 -2 2.5 -2 -0.5 -2 2 -3 -4 -2 4.5 -5 -2 -3 2 -4 -1.5 -3 2.5 -2 -2 -4 -0.5 -4 -3 -4 4 -5 -1.5 -14 -0.5 -6 -1.5 -6 2.5 -15 -1.5 -7 -3 -11 -2 -18 -1.5 -102 -5 0 -117 16 5 25 2.5 30 -5.5 21 -9 3 -5.5 1 0 2 3.5 12 -2.5 3 1 7.5 -37.5 2.5 -22.5 3 -7.5 6 -30.5 3 -4 4 -2.5 6 -1 7 0.5 3 -7.5 4 16 3 -15 1 1 13 80 2 -7 2 -2 5 20 3 19.5 1 2 10 -43 2 2.5 1 -0.5 3 6.5 2 15.5 6 18 2 17 1 1.5 1 -1.5 2 4 3 -10 2 1 1 -1 5 17.5 6 -24.5 4 9.5 1 -2 4 -15.5 3 -19 1 -0.5 5 27 2 3 2 -12 2 -3 2 -8 2 0 2 -8 3 9.5 3 -11 1 0.5 6 18.5 5 33 2 3 5 -25.5 3 -5.5 10 -61.5 3 28.5 5 26 3 -38 7 -56 3 38 2 13.5 1 -1 3 34 1 -2.5 2 7 2 -16 2 19.5 3 7.5 2 11.5 10 -52 3 20.5 1 1 2 -15 2 15 2 -20 2 30.5 2 -40 2 31.5 3 -30.5 2 23 2 -23 2 23 3 -29 4 49 2 -27 1 6 1 -1 1 0.5 1 -5 3 -50.5 1 -1.5 4 51 2 6.5 1 -1.5 2 -28.5 1 15.5 2 -1 1 7.5 1 -4 2 19 7 -63 3 35.5 2 -7 2 27.5 5 -60.5 5 43 2 -13 2 16.5 2 -35 1 12 1 -6 3 39.5 1 4.5 1 -17 3 31.5 3 -46.5 3 45.5 4 -24.5 2 16.5 2 -40.5 1 19.5 2 -29.5 1 -2 2 20.5 4 12 2 32 3 -20.5 1 0 2 24.5 1 1 3 -62.5 2 31.5 2 -28 3 39.5 3 -22 2 22.5 2 -20.5 3 16.5 3 -42.5 3 41 3 -42.5 2 30 3 -16.5 3 28 2 -14 1 1 1 16.5 1 2 2 -44 3 64.5 2 -30.5 1 12.5 2 -4 2 -31 3 44.5 2 -24 1 14 2 -30.5 4 36 2 -20.5 1 10.5 2 -30.5 3 37 1 -12 1 1.5 2 26 2 -17 2 11.5 1 0.5 1 -16 2 -10 1 -1.5 1 3.5 2 -9 1 15 2 -16 2 24 1 -14.5 1 -0.5 1 6.5 2 -2 1 14.5 2 -8.5 1 9 2 -22.5 2 26 2 -27.5 2 28.5 2 -27 1 -2.5 4 27 2 -24 2 28 3 -32.5 2 34 2 -20.5 2 21.5 2 -32.5 3 23.5 2 -12.5 1 -1 1 3 2 -14.5 3 36.5 2 -7.5 1 4.5 2 -15 1 1.5 1 -1 1 -6.5 2 -2.5 2 23 1 0 2 -15.5 1 15 3 -25.5 1 -0.5 3 39 2 -39.5 3 31 2 -23 2 12 2 -18.5 1 14 2 -21 3 38.5 2 -27 1 6.5 1 0.5 1 -10.5 2 19.5 2 -15.5 2 15 2 -26 3 48.5 2 -27.5 1 7 2 -14 2 20.5 2 -11.5 2 11 2 -28.5 2 22 1 -5.5 1 -0.5 2 15.5 2 -23.5 2 5.5 1 -5 2 23 1 -5.5 2 17 3 -45 2 19.5 1 3 1 -1.5 1 4 2 2.5 3 -33.5 2 31 1 0 2 -12 2 29.5 2 -31.5 1 13 2 -26 2 17 2 -8 1 15.5 2 -10.5 3 24.5 1 -0.5 1 -4.5 2 4.5 1 -15.5 1 2 1 20.5 2 -19.5 1 6.5 1 0 1 -8.5 3 28.5 2 -20 2 23.5 2 -37 2 25.5 3 -13.5 1 14 2 -25.5 2 11 1 -10 2 9.5 2 -9 2 8.5 2 -17 1 -1 1 28 1 3.5 1 -10.5 3 19 1 -26.5 1 -4 2 16 1 -20.5 3 33.5 2 -5.5 4 -26.5 2 24.5 2 -22.5 2 21 4 -31.5 2 36 3 -26.5 1 17.5 1 -1 1 -16.5 2 22.5 2 -22 2 11 1 -5.5 2 27.5 2 -36 2 28 1 -15 2 21.5 2 8 2 -34 2 26.5 2 -21.5 1 1 2 16 2 -17 2 23 1 -2.5 1 2.5 1 -1.5 1 7 2 -21 1 3 2 24.5 0 50.5 0 77 -2 4 -6 -11.5 -3 8.5 -3 -4 -2 -0.5 -1 -4 -3 9 -4 -12 -2 6 -1 -1.5 -2 5 -2 -10.5 -2 9.5 -3 5 -2 -1 -4 -12.5 -1 2.5 -2 -1 -1 1.5 -3 7.5 -1 0 -2 -7 -2 5 -2 -5 -2 7 -1 0 -3 -10 -4 9 -2 -4 -2 3 -1 -0.5 -2 -13 -2 10 -2 -4.5 -2 9.5 -2 1 -2 -3 -3 1 -2 3 -4 -11.5 -1 2 -2 0 -3 5 -2 -13.5 -2 6.5 -1 0.5 -2 -5.5 -3 9 -1 0 -1 2 -2 -3 -2 8 -3 -12 -5 14 -2 -0.5 -2 2 -5 -10 -1.5 1.5 -1.5 -4.5 -2 11 -5 5z"/><path fill="rgb(61,61,61)" fill-rule="evenodd" d="M148.5 76l-2 -2 -23.5 -73.5 38 0 0 28 -1.5 26 -11 21.5zM728.5 520l-1 -2 -2 0 -2 -8 -3 6.5 -2 -1 -3 -16 -2 4 -1 -1 -2 8.5 -2 3 -6 -11 -3 8.5 -3 -7 -5 11.5 -2 -8.5 -3 -6 -3 16 -2 -3.5 -2 0.5 -1 -1.5 -4 0 -1 1.5 -2 -7 -2 6 -2 0 -1 -3 -1 0 -1 2.5 -2 0 -1 3 -2 -2.5 -2 1 -2 4 -2 -14 -4 8.5 -3 -8 -1 3 -2 -3 -2 3.5 -2 -1.5 -2 5 -5 -7 -3 1.5 -3 10 -4 -11 -1 0.5 -2 8.5 -3 -7 -1 -1 -1 2 -1 -2 -3 11 -2 -7 -1 -0.5 -2 4.5 -3 -8 -1 4 -3 3.5 -2 -6.5 -1 3 -2 -8.5 -6 9 -2 -8.5 -2 9.5 -3 -2.5 -1 -3 -2 5.5 -4 3.5 -3 -6.5 -2 3.5 -3 -7 -4 8.5 -3 -4.5 -3 9 -3 -4.5 -2 0 -3 -7.5 -4 8.5 -3 -0.5 -4 -4 -2 -7.5 -2 4.5 -1 -1.5 -3 11.5 -3 -10.5 -3 4.5 -2 -0.5 -1 -2.5 -2 5 -2 -1.5 -2 7.5 -5 -5.5 -4 3.5 -1 -1 -4 -10.5 -1 0 -4 11.5 -2 0 -4 -5.5 -2 1 -1 -0.5 -2 -9 -6 5 -3 6 -1 1 -2 -2.5 -2 3 -2 -6 -3 0 -2 2.5 -3 -11 -1 4 -2 0 -2 4 -2 -0.5 -1 1 -2 -1 -2 -5 -2 8.5 -4 4 -2 -10 -1 -0.5 -2 5.5 -2 -3 -3 2 -7 -4.5 -2 1 -2 -1 -3 3 -3 -3.5 -4 10 -5 -16 -2 0.5 -2 6.5 -2 -3 -3 -0.5 -2 2 -3 -2.5 -3 5.5 -2 -1.5 -2 1.5 -1 -3 -2 4 -5 -3.5 -4 5 -3 -4 -2 4.5 -2 -4.5 -2 1 -3 -1.5 -2 4 -1 1 -1 -1 -2 2 -2 -4 -5 0.5 -2 2.5 -3 -1 -4 -8 -3 5.5 -2 -1.5 -2 -5 -3 5.5 -2 -3 -4 3 -3 -0.5 -2 -3 -2 1.5 -2 -4.5 -3 5.5 -3 -2.5 -2 2.5 -7 -2 -2 2.5 -2 -2 -3 3 -4 -4.5 -3 -5.5 -3 6.5 -2 0 -5 -4 -3 4 -4 1 -3 -5.5 -2 3 -4 0.5 -4 -3.5 -2 1.5 -2 -1 -1 1.5 -4 -2.5 -2 1 -7 -0.5 -5 -2.5 -5 2 -2 -3.5 -2 2.5 -2 -0.5 -2 2.5 -3 -4.5 -2 5 -5 -2.5 -3 3 -4 -2 -3 2.5 -2 -2 -4 -0.5 -4 -3.5 -4 4.5 -5 -1.5 -3 0.5 -17 -3 -6 3 -15 -1.5 -7 -3.5 -29 -3.5 -102 -4.5 0 -114 16 5 25 2 30 -5.5 21 -8.5 3 -5.5 1 0 2 3.5 12 -2.5 3 1 7 -35.5 3 -21 3 -9 6 -30.5 3 -5 4 -3 6 -1.5 7 1 3 -3.5 4 13.5 3 -14 13.5 78 0.5 1 2 -6.5 2 -1.5 4 14 4 25 1 2 10 -43 1 2 2 0.5 3 5.5 2 16 6 17.5 2 16.5 1 1.5 1 -1.5 2 3.5 3 -9.5 2 1 2 -0.5 4 16.5 6 -23.5 4 9.5 1 -2 4 -15.5 3 -18.5 1 -0.5 5 26.5 2 3 2 -12 2 -3.5 2 -8 2 0.5 2 -8 1 0 2 9 3 -9.5 1 0 4 15 2 3 5 32.5 2 2.5 5 -26 3 -4.5 2 -17 8 -42.5 3 28.5 5 25 3 -38.5 7 -53.5 3 38 2 13 1 -2 3 33.5 1 -2.5 2 6.5 2 -15.5 2 19.5 3 7 2 10.5 10 -50 3 20 1 0.5 1 -2.5 1 -11.5 2 14.5 2 -19.5 2 29.5 2 -40.5 2 32 3 -30.5 2 22.5 2 -22.5 2 22.5 3 -28 4 48.5 2 -26 1 6 2 0.5 1 -5.5 3 -50.5 1 -1.5 4 51.5 2 5 1 -1 2 -27.5 1 14.5 2 -1 1 7.5 1 -4.5 2 18.5 7 -62.5 3 36 2 -5 2 26 5 -61 5 43.5 2 -12.5 2 16 2 -36 1 12.5 1 -5.5 1 6 2 33.5 1 5 1 -16.5 3 29 3 -46 3 46 1 -8 1 2 2 -17.5 2 14.5 2 -39.5 1 19 3 -31.5 2 21 4 12 2 31 3 -18.5 1 0 2 24 1 0.5 3 -61.5 2 30.5 2 -27.5 3 38 3 -20 2 22 2 -19.5 1 0.5 2 13.5 3 -41.5 3 40 3 -42 2 30 3 -15.5 3 26 2 -12 3 19 2 -44.5 3 64.5 2 -28.5 1 11.5 2 -5 2 -30 3 43.5 2 -24 1 13 2 -29 4 35.5 2 -19 1 9 2 -30.5 3 38 1 -11.5 1 1.5 2 24.5 2 -15.5 2 11.5 1 -0.5 1 -15.5 2 -9.5 1 -1.5 1 2.5 2 -9 1 15 2 -15 2 23.5 1 -13.5 1 -1.5 1 6 1 -1.5 1 0 1 15.5 2 -9.5 1 9 2 -22 2 25.5 2 -27 2 27.5 2 -27 1 -2 4 27 2 -24 2 28 3 -33.5 2 34.5 2 -20 2 21 2 -32.5 3 24.5 3 -14.5 1 2 2 -14 3 37 2 -6.5 1 4 2 -15 1 1.5 2 -9 2 -1.5 2 23 1 0.5 2 -15.5 1 15 3 -27 1 0.5 3 39 2 -39.5 3 31 2 -22 2 11 2 -19 1 14.5 0.5 -1.5 1.5 -20 3 39 2 -27 2 7 1 -10.5 2 19 2 -15 2 15 2 -26.5 3 49 2 -27 1 7 2 -15 2 21 2 -10.5 2 10 2 -28.5 2 22.5 1 -5 1 -0.5 2 14.5 2 -23 2 5 1 -4.5 2 23 1 -5.5 2 16.5 3 -46 2 20 4 8 2 -4.5 2 -30 2 32 1 0 2 -11 2 29.5 2 -32.5 1 13.5 2 -26.5 2 16 2 -7 1 15.5 2 -10.5 3 24.5 1 0.5 1 -4 2 4 1 -16 1 2.5 1 20.5 2 -19.5 1 6.5 1 0 1 -8 3 27.5 2 -19.5 2 24 2 -37 2 24.5 3 -13 1 13.5 2 -24.5 2 9.5 1 -9.5 2 10 2 -8.5 2 6.5 2 -17 1 0 1 28 1 3.5 1 -10.5 3 19 1 -26 1 -3.5 2 15.5 1 -21 3 33.5 2 -5.5 4 -27 2 25.5 2 -22 2 20.5 4 -32.5 2 35.5 3 -25.5 1 18 1 -1 1 -17 2 21.5 2 -21 2 10 1 -4.5 2 27 2 -36 2 28 1 -15 2 22 2 7.5 2 -34 2 26.5 2 -21 1 0.5 2 15.5 2 -16.5 2 23 1 -2 1 2.5 1 -2 1 7 2 -21.5 1 2.5 2 24.5 0 48 0 75.5 -2 4 -6 -12 -3 8.5 -3 -3.5 -2 -0.5 -1 -4.5 -3 9.5 -4 -13 -2 7 -1 -2 -2 6 -2 -11.5 -2.5 10.5 -2.5 4.5 -2 -1 -2 -4.5 -2 -8.5 -1 3 -2 -1 -1 1 -3 8.5 -1 0 -2 -8 -2 5 -2 -5 -2 8 -1 0 -3 -11 -3 5 -1 4.5 -2 -4.5 -2 3 -1 -0.5 -2 -13.5 -2 11 -2 -5 -2 10.5 -2 0.5 -2 -3.5 -3 1.5 -2 3 -4 -12.5 -1 3 -2 -0.5 -3 5.5 -2 -14.5 -2 7 -1 0.5 -2 -5.5 -2 8 -1 1 -1 0 -1 2 -2 -3 -2 8 -3 -12 -5 14.5 -1 0.5 -1 -1 -2 2.5 -5 -10.5 -1 2 -2 -6 -2 12 -5 5.5z"/><path fill="rgb(67,67,67)" fill-rule="evenodd" d="M148.5 72.5l-2 -2.5 -13 -37.5 -9.5 -32 36 0 0.5 28 -2 26 -7 14.5 -3 3.5zM728.5 519l-1 -2 -2 -0.5 -2 -9 -3 7.5 -2 -0.5 -3 -17 -2 4.5 -1 -1.5 -2 9 -2 3 -6 -11.5 -3 9 -3 -7.5 -5 12 -2 -9 -3 -6 -3 16.5 -2 -3.5 -2 1 -1 -2 -2 1 -2 -1 -1 1.5 -2 -7.5 -3 7 -2 -4 -1 0.5 -1 2.5 -2 -0.5 -1 3.5 -2 -3 -2 1 -2 4.5 -2 -15 -4 10 -3 -9 -1 3 -2 -3 -2 4 -2 -1.5 -2 5.5 -5 -8.5 -3 2.5 -3 10.5 -4 -11.5 -1 0 -2 9 -3 -7.5 -1 -1 -1 2 -1 -2 -3 11.5 -2 -8 -1 0 -2 5 -3 -8 -1 4 -3 3.5 -2 -6.5 -1 3 -1 -2.5 -1 -6 -2 1.5 -1 4 -2 0.5 -1 2.5 -2 -8.5 -2 10 -3 -3 -1 -3 -2 5.5 -4 4.5 -3 -7.5 -2 3.5 -3 -7 -4 8.5 -3 -4.5 -3 10 -3 -5 -2 0 -3 -7.5 -2 6.5 -2 2.5 -5 -2.5 -3 -4.5 -1 -5.5 -2 4.5 -1 -2 -3 12.5 -3 -11.5 -3 5.5 -2 -0.5 -1 -2.5 -2 5 -2 -2 -2 8 -1 0 -4 -6 -4 4 -1 -1 -4 -11.5 -1 0 -4 12.5 -2 0 -4 -6 -2 1.5 -1 -1 -2 -9.5 -6 5.5 -3 6.5 -1 0.5 -2 -2 -2 3 -2 -6 -3 -0.5 -2 3 -3 -12 -1 4.5 -2 0 -2 4.5 -2 -0.5 -2 1 -3 -6.5 -2 8.5 -4 5 -2 -11 -1 -0.5 -2 5.5 -2 -3 -3 3 -3 -3.5 -1 0.5 -3 -2.5 -2 1.5 -2 -1 -3 3 -3 -4 -4 10.5 -5 -16.5 -2 0.5 -2 6.5 -2 -3 -3 0 -2 2 -3 -3 -3 5.5 -2 -1.5 -2 2 -1 -3.5 -2 4.5 -5 -3.5 -2 1 -2 4.5 -3 -4.5 -2 5 -2 -5 -2 0.5 -3 -1 -2 4 -1 1 -1 -1.5 -2 2.5 -2 -4 -5 0 -2 3 -3 -1 -4 -8.5 -3 6 -3 -3.5 -1 -3.5 -3 6 -2 -3.5 -4 3.5 -3 -0.5 -2 -3 -2 1.5 -2 -5 -3 5.5 -3 -2.5 -2 3 -7 -2 -2 2.5 -2 -2 -3 3 -4 -4.5 -3 -6.5 -3 7.5 -2 -0.5 -5 -4 -3 4.5 -4 1 -3 -5.5 -2 3 -4 0.5 -4 -4 -2 2 -2 -1.5 -1 2 -4 -3 -2 1 -2 -1 -5 0.5 -5 -2.5 -5 2 -2 -3.5 -2 2.5 -2 0 -2 2 -3 -4.5 -2 5 -2 -1.5 -2 0.5 -1 -1 -3 3 -4 -2.5 -3 3 -10 -6.5 -4 5 -5 -2 -3 0.5 -17 -3 -4 3 -3 0.5 -14 -1.5 -7 -4 -29 -3.5 -102 -4.5 0 -110.5 16 4.5 25 2.5 30 -5.5 21 -8.5 3 -5.5 3 4 12 -3 3 1 10 -53 10 -43 4 -5.5 4 -2.5 5 -1 6 1.5 3 -1.5 4 13 3 -13.5 14 77.5 2 -6 2 -2 4 14 4 25 1 1.5 7 -27.5 2 -14.5 1 0 1 2 2 0.5 2 4.5 1 0 2 16.5 6 16.5 2 17 1 1 1 -1.5 2 3 3 -8.5 2 1 2 -1 4 16 6 -22.5 4 9 1 -2 4 -14.5 3 -19 1 -0.5 5 26.5 2 2.5 2 -12 2 -3 2 -8 2 0.5 2 -8 1 -0.5 2 9.5 2 -8.5 2 0 8 24.5 2.5 21 0.5 3 2 2 5 -26 1 -2 1 1 1 -3 2 -16.5 8 -41 3 29 5 24 3 -39 7 -51 3 38 2 12.5 1 -3 3 33.5 1 -2.5 2 6 2 -16 2 20 3 6 2 10 2 -13.5 8 -34.5 3 19.5 2 -2.5 1 -10.5 2 14 2 -19 2 28.5 2 -40.5 2 31.5 3 -30 2 22.5 2 -22.5 2 22 3 -26.5 2 33 2 14.5 2 -25 1 5.5 2 2 1 -5.5 3 -50.5 1 -2 4 51.5 2 4.5 1 -1 2 -27 1 14 2 -1 1 7 1 -4 2 17.5 2 -10 5 -52 3 36.5 1 -4 1 0.5 2 25.5 5 -61.5 5 43 2 -11.5 2 15.5 2 -37 1 12.5 1 -4.5 1 6 2 33.5 1 5 1 -16 3 26.5 3 -44.5 3 45.5 1 -7 1 2.5 2 -17.5 2 13 2 -39.5 1 18.5 3 -31.5 2 22 4 12 2 30.5 3 -16.5 1 0 2 23 1 0 3 -61 2 29.5 2 -26.5 3 36.5 3 -18 2 22 1 -16 2 -3.5 2 12 3 -41 3 39.5 3 -41.5 2 30.5 3 -15.5 3 25 2 -10.5 1 2 1 16 1 1 2 -45.5 3 65 2 -27.5 1 11.5 2 -6.5 2 -29 3 42 2 -23.5 1 12.5 2 -28 4 35 2 -18 1 8.5 2 -30.5 3 38.5 1 -10.5 1 0.5 2 24 2 -14.5 2 11 1 -1 1 -15 3 -10.5 1 1.5 2 -9 1 15 2 -13.5 2 23 1 -14 1 -1 1 5.5 1 -2.5 1 1.5 1 15.5 2 -9.5 1 8 2 -21.5 2 25.5 2 -26.5 2 27 2 -27 1 -2.5 4 27.5 2 -23.5 2 27.5 3 -34 2 35 2 -19.5 2 20 2 -32 3 24.5 3 -15 1 1.5 2 -14 2 35.5 1 2.5 2 -6 1 3.5 2 -14.5 1 1.5 2 -10.5 2 -0.5 2 22.5 1 0.5 2 -15 1 15 3 -28 1 1 3 39.5 2 -40.5 3 31.5 2 -21 2 10 2 -19.5 1 14.5 2 -21.5 3 39.5 2 -26.5 2 6.5 1 -10.5 2 18.5 2 -15 2 15.5 2 -27 3 49.5 2 -26 1 6.5 2 -16 2 21.5 2 -10 2 10 2 -29 2 23.5 2 -6 2 14 2 -23 2 5 1 -4 2 23 1 -6 2 16.5 3 -46.5 2 19.5 4 9 2 -5.5 2 -30.5 2 32.5 1 0.5 2 -9.5 2 28.5 2 -32.5 1 13.5 2 -27 2 15.5 1 -6.5 1 -0.5 1 15.5 2 -10 3 25 1 0.5 1 -3.5 2 3.5 1 -15.5 1 2.5 1 20 2 -18.5 1 6.5 1 -1 1 -7 3 26 2 -18.5 2 24.5 2 -37.5 2 24 3 -12.5 1 13 2 -24 2 8.5 1 -8.5 2 9.5 2 -7.5 2 4.5 2 -17 1 1 1 28.5 1 3 1 -10.5 3 19 1 -25.5 1 -3.5 2 15 1 -21 3 33 1 0 1 -4.5 4 -28.5 2 26.5 2 -21.5 2 20 4 -33.5 2 36.5 3 -25 1 18 1 -1.5 1 -17 2 20.5 2 -20.5 1 1 1 8.5 1 -3.5 2 27 2 -36.5 2 28.5 1 -15.5 2 22.5 2 7 2 -34 2 26.5 1 -1.5 1 -19 1 0 2 14.5 2 -15.5 2 23.5 1 -2 1 2.5 1 -2.5 1 6.5 2 -22 3 27 0 119 -2 5 -6 -13.5 -3 9.5 -3 -4 -2 0 -1 -5.5 -3 10.5 -2 -9.5 -2 -4 -2 7.5 -1 -2.5 -2 6.5 -2 -12.5 -2.5 12 -2.5 3.5 -2 -0.5 -2 -4.5 -2 -8.5 -1 3 -2 -1.5 -1 1.5 -3 9 -1 0 -2 -9.5 -2 5.5 -2 -5 -2 9 -1 0 -3 -12.5 -3 5 -1 5.5 -2 -5 -2 3 -1 0 -2 -14 -2 11 -2 -5 -2 11.5 -2 0.5 -2 -4.5 -3 1.5 -2 3.5 -4 -13 -1 3 -2 -0.5 -3 5.5 -2 -15 -2 7.5 -1 1 -2 -6.5 -2 8.5 -1 1 -1 -0.5 -1 2.5 -2 -3.5 -2 8.5 -3 -12 -5 15.5 -1 0.5 -1 -1.5 -2 3 -5 -11.5 -1 2.5 -2 -6.5 -2 12 -5 6.5z"/><path fill="rgb(73,73,73)" fill-rule="evenodd" d="M149.5 68.5l-1.5 0 -1.5 -2.5 -10 -27.5 -11.5 -38 34 0 0.5 27 -2 26 -8 15zM728.5 518.5l-1 -2.5 -2 -0.5 -2 -10 -3 8.5 -2 -0.5 -3 -18.5 -2 5 -1 -1.5 -2 9.5 -2 2.5 -6 -11.5 -3 10 -3 -9 -5 13 -2 -9.5 -3 -6.5 -3 18 -2 -4.5 -2 1.5 -1 -2 -2 1 -2 -1.5 -1 2 -2 -8.5 -3 8.5 -2 -4.5 -1 0 -1 3.5 -2 -1.5 -1 3.5 -2 -3 -2 1 -2 5 -2 -16 -4 11.5 -3 -10 -1 3 -2 -3 -2 5 -2 -2.5 -2 6 -1 -3.5 -4 -5.5 -3 2.5 -3 11.5 -4 -12.5 -1 0 -2 10 -3 -8.5 -1 -1 -1 2 -1 -2 -3 12.5 -2 -9 -1 -0.5 -2 5.5 -3 -8 -1 4.5 -3 3.5 -2 -7 -1 3.5 -1 -2.5 -1 -6.5 -2 1.5 -1 4.5 -2 0 -1 2.5 -2 -9 -2 11 -1 -2 -2 -1 -1 -3.5 -2 6 -4 4.5 -3 -7.5 -2 3.5 -3 -7.5 -4 9 -3 -5 -3 10.5 -3 -5 -2 0 -3 -7.5 -2 7 -2 2 -5 -2.5 -3 -4.5 -1 -6 -2 4.5 -1 -2 -3 13.5 -3 -12.5 -3 6 -2 -0.5 -1 -2.5 -2 5.5 -2 -2 -2 8 -1 0 -4 -6 -1 2 -3 2 -1 -1 -4 -12 -1 0 -4 12.5 -2 0.5 -4 -6.5 -2.5 1.5 -2.5 -11.5 -6 6.5 -3 7 -1 0.5 -2 -2.5 -2 3.5 -2 -6 -2 0.5 -1 -1 -2 2.5 -3 -12.5 -1 5 -2 0 -2 5 -2 -1 -2 1 -3 -7 -2 9 -4 5.5 -2 -11.5 -1 -0.5 -2 5.5 -2 -3 -3 3.5 -3 -4 -1 0.5 -3 -3 -2 2 -2 0 -3 3 -3 -5.5 -4 11.5 -5 -16.5 -2 0.5 -2 6.5 -2 -3.5 -1 1 -2 -0.5 -2 2 -3 -4 -3 6 -2 -1.5 -2 2 -1 -3.5 -2 5 -5 -3.5 -2 1.5 -2 4 -3 -4.5 -2 5 -2 -5.5 -2 1 -3 -1.5 -2 4.5 -1 0.5 -1 -1.5 -2 3 -2 -4.5 -5 0.5 -2 3 -2 -2 -1 1 -4 -9 -3 6.5 -4 -7.5 -3 6.5 -2 -4 -4 4 -2 -1 -1 1 -2 -3.5 -2 2 -2 -6 -3 6 -3 -3 -2 3.5 -7 -2 -2 2.5 -2 -2 -3 3.5 -4 -5 -3 -7 -3 7.5 -7 -4.5 -3 4.5 -4 1.5 -3 -5.5 -2 2.5 -2 -0.5 -2 1.5 -4 -4.5 -2 2 -2 -1 -1 2 -4 -3.5 -2 1 -2 -1 -5 0.5 -5 -2.5 -5 2.5 -2 -4 -2 2.5 -2 0 -2 2 -3 -5 -2 6 -2 -2 -2 0.5 -1 -1 -3 3.5 -4 -2.5 -3 3 -2 -2.5 -4 -1 -4 -3.5 -4 5 -5 -1.5 -3 0.5 -4 -2 -13 -1.5 -5 4 -5 0 -10 -1 -8 -5 -12 -2 -57 -4 -62 -2 0 -106.5 16 4.5 25 2 30 -5.5 21 -8.5 3 -5 3 3.5 12 -2.5 3 0.5 19 -91.5 5 -9 4 -3 4 -1 10 2.5 4 12.5 3 -12 1 1.5 12.5 71.5 0.5 2 2 -6 2 -1.5 4 13.5 4 25 1 1.5 7 -27.5 2 -14.5 1 0 1 2.5 2 0 2 5 1 -1 2 17 4 13 1 -1 1 3.5 2 17 1 1 1 -2 2 3.5 3 -8.5 2 1.5 2 -1.5 4 15.5 6 -21.5 4 8.5 1 -1.5 4 -14 3 -19 1 -0.5 5 26 2 2 2 -12 2 -3 2 -8 2 1 2 -8.5 1 0 2 9 2 -7.5 2 0 8 23.5 2.5 20.5 0.5 3.5 2 1.5 5 -26.5 1 -1.5 1 1 1 -2.5 2 -16.5 2 -6 6 -33.5 3 29.5 5 23 3 -39.5 2 -8.5 2 -25.5 3 -15 3 38.5 2 12 1 -4.5 3 34 1 -3 2 5.5 2 -15.5 2 19.5 3 5 2 10.5 2 -14 2 -4.5 6 -28.5 3 19.5 2 -3.5 1 -8.5 2 13.5 2 -19 2 27 2 -40 2 31.5 3 -30 2 22.5 2 -22 2 21 1 -1.5 2 -24 2 33.5 2 13.5 2 -24 1 6 2 2 1 -5 3 -51 1 -2 4 52 2 3.5 1 -1 2 -26.5 1 13 2 -0.5 1 7 1 -4.5 2 16.5 2 -7.5 5 -53.5 3 36.5 1 -2.5 1 1 2 24.5 5 -61.5 1 0.5 4 42.5 2 -11 2 15 2 -37.5 1 12.5 1 -3.5 1 5 2 34 1 5.5 1 -15.5 3 24 3 -44 3 46 1 -7 1 3.5 2 -17.5 2 11 2 -39 1 18.5 3 -31.5 2 22.5 4 11.5 2 30 3 -14.5 1 0.5 2 22 1 -0.5 3 -61 2 28.5 2 -25 3 35 1.5 -4 1.5 -12.5 2 22 1 -15 2 -4.5 2 10.5 3 -40 3 38.5 3 -40.5 2 30 3 -15 3 24 2 -8.5 2 18 1 0.5 2 -46 3 65 2 -26.5 1 11.5 2 -7.5 2 -28.5 3 41.5 2 -24.5 1 12 2 -26.5 4 34.5 2 -17 1 8.5 2 -31.5 3 40 1 -10.5 1 0.5 2 22.5 2 -13.5 2 11 1 -1.5 1 -14.5 3 -10 1 1 2 -9 1 15 2 -13 2 22.5 1 -13.5 1 -1 1 5 1 -3 1 2.5 1 16 2 -10.5 1 8 2 -21 2 25 2 -26 2 26 3 -29 4 27.5 2 -23 2 27 3 -35 2 35.5 2 -19 2 20 2 -32 3 25 6 -29 2 36 1 2.5 1 -4.5 1 -0.5 1 3 0.5 -1 1.5 -13 1 1 2 -12 1 2 1 -1 1 3.5 1 18.5 1 1 2 -15 1 15.5 3.5 -29.5 3.5 41.5 2 -41.5 3 32 2 -20.5 2 10 2 -21 1 15.5 2 -21.5 3 40 2 -26.5 2 6.5 1 -10.5 2 17.5 2 -15 2 16.5 2 -28 3 50 2 -25.5 1 6.5 2 -17 2 22.5 2 -9.5 2 9.5 2 -30 2 24.5 2 -5.5 2 13 2 -22 2 4 1 -3.5 2 23 1 -6 2 16 3 -47.5 3 25 2 5 1 0 2 -7.5 2 -31 2 34 1 1 2 -9 2 28 2 -32 1 13.5 2 -28.5 2 15.5 1 -7 1 0 1 16 2 -10 2.5 21.5 1.5 5 1 -3 2 2.5 1 -15 1 2.5 1 20 2 -18.5 1 6.5 2 -8 3 26 2 -18 2 25 2 -38 2 23 3 -12 1 13 2 -24 2 7.5 1 -8 2 9.5 2 -7 1 3 1 0 2 -17 1 2 1 29 1 2 1 -10 2 19 1 1 1 -26 1 -3 2 14.5 1 -21 3 32.5 1 0.5 1 -4.5 4 -30 2 27.5 2 -21 2 20 4 -35.5 2 37.5 3 -24.5 1 18 1 -1 1 -17 2 19.5 2 -20 1 0.5 1 8 1 -2.5 2 27.5 2 -37.5 2 28.5 1 -15 2 22.5 2 6.5 2 -34 2 26.5 1 -1 1 -19 1 -0.5 2 13.5 2 -14 2 23 1 -1.5 1 2.5 1 -3 1 6 2 -23 3 27.5 0 114 -2 6.5 -4 -9 -1 -6 -1 0 -3 10 -3 -3.5 -2 -0.5 -1 -6 -3 11.5 -2 -10.5 -2 -4 -2 8.5 -1 -3 -2 7 -2 -13.5 -4 16 -3 -0.5 -4 -13 -1 3.5 -2 -1.5 -1 1 -3 10 -1.5 -1 -1.5 -9.5 -2 6 -2 -6 -2 10.5 -1 -1 -3 -13 -3 5.5 -1 6 -2 -5.5 -2 3 -1 0 -2 -14.5 -2 11.5 -2 -5.5 -2 13 -2 0 -2 -5 -3 1.5 -2 3.5 -4 -13 -1 2.5 -2 -0.5 -3 6 -2 -16 -2 8.5 -1 0.5 -2 -6 -2 8.5 -1 1 -1 -0.5 -1 2.5 -2 -4 -2 9 -3 -12.5 -5 16.5 -1 0.5 -1 -1.5 -2 3.5 -5 -12 -1 2.5 -2 -7.5 -2 12.5 -5 8z"/><path fill="rgb(80,80,80)" fill-rule="evenodd" d="M149.5 65l-3 -3.5 -9 -23 -11.5 -38 32 0 0.5 27 -2 25 -3 7.5 -4 5zM728.5 517.5l-3 -3.5 -2 -11 -3 9.5 -2 -0.5 -3 -19 -2 4.5 -1 -1.5 -2 10 -2 2.5 -6 -11.5 -3 10 -3 -9.5 -5 14 -2 -10.5 -3 -6.5 -3 19 -2 -5 -2 2 -1 -2.5 -2 1 -2 -1.5 -1 2.5 -2 -9 -3 9 -1 0 -1 -5 -2 4 -2 -2 -1 3.5 -2 -3.5 -2 1.5 -2 5.5 -2 -17 -4 13 -3 -11.5 -1 4 -2 -3.5 -2 5.5 -1 -2.5 -1 0 -1 6 -1 0 -1 -4.5 -4 -5.5 -3 3 -3 12.5 -4 -13.5 -1 0 -2 10.5 -3 -9.5 -1 -0.5 -1 2.5 -1 -2.5 -3 13 -2 -9.5 -1 -0.5 -2 6 -3 -9 -1 5 -3 3.5 -2 -7.5 -1 4 -1 -2.5 -1 -6.5 -2 1.5 -1 5 -2 -0.5 -1 2.5 -2 -9.5 -2 12 -1 -2.5 -2 -1 -1 -3.5 -2 6 -4 5 -3 -8 -2 3.5 -2 -7.5 -1 -0.5 -4 9.5 -3 -5 -3 11.5 -3 -6 -2 0 -3 -7.5 -3 9 -1 1 -5 -3 -3 -4.5 -1 -6.5 -2 5 -1 -2.5 -3 14.5 -3 -13 -4 7 -2 -3.5 -2 5 -2 -2 -2 8.5 -1 0 -4 -6.5 -1 2.5 -3 1.5 -0.5 -0.5 -4.5 -13 -1 0 -4 13.5 -2 0 -4 -6.5 -2.5 2 -2.5 -13 -4 4.5 -5 10 -1 1 -2 -2.5 -2 3.5 -2 -6.5 -2 1 -1 -1.5 -2 2.5 -3 -13 -1 5 -2 0 -2 6 -2 -1.5 -2 1 -3 -7.5 -2 9.5 -4 6 -2 -12 -1 -0.5 -2 5.5 -2 -3 -3 4.5 -3 -5 -1 0.5 -3 -3 -5 3 -1 2.5 -1 0 -3 -6 -1 1 -3 11 -2 -9.5 -3 -7 -2 0 -2 6.5 -2 -3.5 -5 2.5 -3 -4 -3 6 -2 -1.5 -2 2 -1 -3.5 -2 5 -1 -1.5 -4 -1.5 -2 1.5 -2 4 -3 -4.5 -2 5 -2 -5.5 -2 0.5 -3 -1.5 -2 5 -1 0.5 -1 -2 -2 3 -2 -4.5 -5 0 -2 4 -2 -2.5 -1 1 -4 -9 -3 7 -4 -8 -2 6.5 -1 0.5 -2 -4.5 -3 4 -3 -0.5 -1 1 -2 -4 -2.5 2 -1.5 -6 -3 6 -3 -3 -2 4 -7 -2 -2 2.5 -2 -2 -3 4 -7 -13.5 -3 8 -7 -4 -3 4.5 -4 1.5 -3 -6 -2 3 -2 -0.5 -2 1 -4 -4.5 -2 2 -2 -1 -1 2 -4 -3.5 -2 1 -2 -1 -5 0.5 -5 -2.5 -5 2.5 -2 -4.5 -2 3 -2 -0.5 -2 2.5 -3 -5 -2 6 -2 -2 -2 0.5 -1 -1 -3 4 -4 -2.5 -3 3 -2 -2.5 -4 -1.5 -4 -3.5 -4 5.5 -12 -3.5 -13 -1.5 -5 4.5 -5 0 -10 -1 -8 -5.5 -12 -2.5 -57 -4 -62 -2 0 -102 16 4 25 2 30 -5 21 -8 3 -5 3 3.5 12 -3 3 0.5 20 -92 5 -9 7 -3 4 0.5 6 3 4 14 3 -11.5 1 1.5 12.5 68.5 0.5 2.5 2 -5.5 2 -1.5 4 13 4 24.5 1 1.5 7 -27 2 -14 1 -0.5 1 2.5 2 0.5 2 4.5 1 -1 2 17 4 12.5 1 -1 1 3.5 2 17 1 0.5 1 -2 2 3 3 -8 2 1.5 2 -1.5 4 15 6 -21 4 8.5 1 -1.5 4 -13.5 3 -18 1 -1 1 9 5 18.5 1 0 2 -12.5 2 -3 2 -7.5 2 1 3 -9 2 9 2 -7 2 0.5 4 14 4 8.5 2.5 21 0.5 2.5 2 1.5 5 -27 1 -1 1 1 1 -2.5 2 -16 2 -5.5 6 -31.5 3 29 5 22 3 -40 2 -6.5 2 -26.5 1 0.5 2 -13.5 3 38 2 12 1 -6 3 34 1 -3 2 5 2 -15 2 19 3 4.5 2 10 2 -14 2 -3.5 6 -28 3 19 2 -3.5 1 -8 2 13 2 -18.5 2 26 2 -40 2 31 3 -29 2 21.5 2 -21 2 20 1 -1 2 -23 2 33.5 2 13 2 -23 1 5.5 2 3 1 -5 3 -51 1 -2 4 52 2 2.5 1 -1 2 -26 1 12.5 2 -0.5 1 6.5 1 -4.5 2 16.5 2 -6 5 -55 3 37 1 -1.5 1 2 2 23 5 -61 1 -1 4 44 2 -10.5 2 14 2 -38.5 1 13.5 1 -3.5 1 5.5 2 33.5 1 6 1 -15 3 22 3 -44 3 46 1 -6 1 4 2 -17.5 1 0.5 1 9.5 2 -39 1 18 3 -31 2 22 1 4 1 -0.5 2 8.5 2 29.5 3 -12.5 1 0.5 2 22 1 -2 2 -56.5 1 -3 2 27 2 -23.5 3 32.5 1 -1 2 -13.5 2 21.5 1 -14.5 2 -5 2 8.5 3 -39 3 38.5 3 -39.5 2 29.5 3 -15 3 23.5 2 -7.5 2 18 1 0.5 2 -47.5 3 66 2 -25 1 10.5 2 -8 2 -27.5 3 40 2 -24 1 10.5 2 -24.5 4 34 2 -16 1 7.5 2 -32 3 41 1 -9.5 1 -0.5 2 21.5 2 -12 2 11 1 -2.5 1 -14 3 -9.5 1 0.5 2 -9 1 15 2 -12.5 2 22.5 1 -13.5 1 -1 1 4.5 1 -3 0.5 1 1.5 19.5 2 -12.5 1 8 2 -20.5 2 24.5 2 -25.5 2 25.5 3 -28.5 4 27 2 -23 2 27 1 -2.5 2 -33 2 35.5 2 -18 2 19 2 -31 3 24.5 6 -30.5 2 37 1 2.5 1 -4 1 0 1 2.5 1 -3 4 -23.5 1 4 1 -1 1 2.5 1 18.5 1 1 2 -14 1 15 3 -32 4 45 2 -42.5 3 31.5 2 -19.5 2 9.5 2 -21.5 1 16 0.5 -2.5 1.5 -20 3 40.5 2 -26 2 6.5 1 -10.5 2 17 1 -1 1 -13.5 2 16 2 -28 3 50.5 2 -25.5 1 6.5 2 -17.5 2 22.5 2 -8.5 1 8.5 1 0 2 -29.5 2 24.5 2 -5.5 2 12.5 2 -21.5 2 4 1 -3.5 2 23 1 -6 2 16 3 -48.5 3 25.5 2 5.5 3 -9 2 -31.5 2 35.5 1 1.5 2 -9 2 29 2 -33 1 13.5 2 -29.5 2 14.5 1 -7 1 0.5 1 17 2 -9.5 2 19 2 7 1 -1.5 2 1.5 1 -15 1 2 1 21 2 -18.5 1 6 2 -7.5 3 25.5 2 -18 2 25.5 2 -38.5 2 22.5 3 -11.5 1 13 2 -23.5 2 7 1 -8 2 9.5 1 -5.5 1 -1 1 2.5 1 -1 2 -17.5 2 32 1 2 1 -10 2 20 1 1 1 -26.5 1 -3 2 14 1 -20.5 2 24 2 9.5 5 -37 2 29.5 2 -20.5 2 19 4 -36.5 2 38 3 -24 1 18.5 1 -1.5 1 -17 2 19 2 -19 1 -0.5 1 8 1 -1.5 2 27.5 2 -38 2 28.5 1 -14.5 2 22.5 2 5.5 2 -33 2 25.5 1 -0.5 1 -19 1 -0.5 2 13 2 -13.5 2 23 1 -0.5 1 2 1 -4 1 5.5 2 -23.5 3 27.5 0 109 -2 7.5 -4 -10 -1 -6 -1 -0.5 -3 11.5 -3 -4 -2 0 -1 -7 -3 12 -2 -11.5 -2 -3.5 -2 9 -1 -3 -2 7.5 -2 -14.5 -4 17 -3 -1 -2 -4 -2 -9.5 -1 4.5 -2 -2.5 -1 1.5 -3 11.5 -1.5 -1.5 -1.5 -11 -2 6 -2 -6 -2 12 -1 -1 -3 -14.5 -1 0 -2 6 -1 6 -2 -6 -3 3 -2 -15 -2 12.5 -2 -5.5 -2 14 -2 -0.5 -2 -5.5 -3 1.5 -2 3.5 -4 -13.5 -1 3 -2 -1 -3 6.5 -2 -17 -3 10 -1 -6 -1 -0.5 -2 8.5 -1 1.5 -1 -1 -1 2.5 -2 -4 -2 9.5 -3 -13 -5 17 -1 1.5 -1 -2.5 -2 4.5 -5 -13 -1 2.5 -2 -8 -2 13 -3 3.5 -2 5.5z"/><path fill="rgb(86,86,86)" fill-rule="evenodd" d="M150.5 60l-3 -1.5 -8 -18 -12 -40 29.5 0 0.5 22 -1 21 -2 11 -4 5.5zM728.5 517l-3 -5 -2 -11.5 -3 10.5 -1 1 -1 -1 -3 -21 -2 5.5 -1 -2 -2 10.5 -2 2.5 -6 -12 -3 11 -3 -10.5 -5 14.5 -2 -10.5 -1 -0.5 -2 -6.5 -3 20 -2 -6 -2 2.5 -1 -2.5 -2 1 -2 -1.5 -1 2.5 -2 -9.5 -3 9.5 -1 0 -1 -5 -2 4.5 -2 -2.5 -1 3.5 -2 -4 -2 1.5 -2 6 -2 -18 -4 15 -3 -13 -1 4.5 -2 -3.5 -2 5.5 -1 -2.5 -1 0 -1 6.5 -6 -11 -3 3 -3 14 -5 -15 -2 11 -3 -9.5 -1 -1 -1 3 -1 -3 -3 13.5 -2 -10 -1 -0.5 -2 6.5 -3 -9 -1 5 -3 3.5 -2 -7.5 -1 4 -1 -2 -1 -7.5 -2 2 -1 5 -2 -0.5 -1 2.5 -2 -10 -2 12.5 -1 -2 -2 -1.5 -1 -3.5 -2 6 -4 5 -3 -8.5 -2 4 -2 -8 -1 -0.5 -4 10 -3 -5 -3 12.5 -3 -7 -2 0.5 -3 -7.5 -2 9 -2 1 -5 -3 -3 -5 -1 -6.5 -2 5 -1 -2.5 -3 15.5 -3 -14.5 -4 8 -2 -3.5 -2 5.5 -2 -2.5 -2 8.5 -1 0.5 -4 -7 -1 3 -3 1.5 -5 -14.5 -1 0 -4 14 -2 0 -4 -6.5 -2 3 -3 -15 -4 4.5 -5 11.5 -1 0.5 -2 -2.5 -2 4 -2 -6.5 -2 0.5 -1 -1.5 -2 2 -2 -12.5 -1 -0.5 -1 5.5 -2 0 -2 6.5 -2 -2 -2 0.5 -3 -7.5 -2 10 -4 6.5 -2 -12.5 -1 -0.5 -2 5.5 -2 -3.5 -3 5.5 -3 -5.5 -1 0 -3 -3 -5 4 -1 2.5 -4 -6.5 -1 0.5 -3 12 -2 -9.5 -3 -7 -2 -0.5 -2 6 -2 -3.5 -5 3.5 -3 -5 -3 6 -2 -1.5 -2 2 -1 -3.5 -2 6 -1 -1.5 -2 0 -2 -1.5 -2 1.5 -2 4 -3 -4.5 -2 5 -2 -6 -2 0.5 -3 -1.5 -2 5 -1 0.5 -1 -2 -2 3 -2 -4 -5 -0.5 -2 4 -4 -3 -3 -7.5 -3 7 -4 -8 -2 6.5 -1 0.5 -2 -4.5 -3 4 -3 -0.5 -1 1.5 -2 -4.5 -2.5 2.5 -1.5 -7 -3 6.5 -3 -3 -2 4 -7 -1.5 -2 2.5 -2 -2 -3 4 -7 -14 -3 8 -7 -4 -3 4.5 -4 2 -3 -6 -2 3 -2 -0.5 -2 1 -4 -5 -2 2 -2 -1 -1 2 -4 -4 -9 1 -5 -3 -5 3 -2 -4.5 -2 3 -2 -0.5 -2 2.5 -3 -5.5 -2 6.5 -2 -2.5 -2 1 -1 -1 -3 4 -4 -2.5 -3 3.5 -2 -3 -4 -1.5 -4 -3.5 -4 5.5 -5 -2 -4 0.5 -3 -2 -13 -1.5 -5 5 -5 0 -10 -1 -8 -6.5 -12 -2 -57 -4 -62 -2 0 -98 16 4 25 2 30 -5 21 -8 3 -5 3 3.5 12 -2.5 3 0 21 -93.5 5 -8 6 -2.5 5 1.5 5 3.5 4 16 3 -11 1 1.5 12 65 1 3 2 -5.5 2 -1.5 4 13.5 4 24 1 1 7 -26.5 2 -14 1 0 1 2.5 2 0 2 4.5 1 -1 2 17 4 12.5 1 -1 1 3 2 16.5 1 0.5 1 -2 2 3 3 -7.5 2 1.5 2 -2 4 14.5 4 -10.5 2 -9.5 4 8 1 -1 4 -13 3 -18 1 -1 1 9 5 18 1 -0.5 2 -12.5 2 -2.5 2 -8 2 1.5 3 -9 2 9 2 -6.5 2 1 4 13.5 4 8 3 23 2 0.5 5 -26.5 1 -1 1 1 1 -2 2 -16 2 -5 6 -30 3 29 3 8.5 2 12.5 3 -40.5 2 -4.5 2 -28 1 2.5 2 -13 3.5 42.5 1.5 6.5 1 -6.5 3 33.5 1 -3.5 2 5 2 -15 2 19 3 4 2 9.5 2 -14 2 -2.5 6 -27.5 3 18.5 2 -3.5 1 -7 2 12 2 -18 2 25 2 -39.5 2 30 3 -28.5 2 21.5 2 -20.5 2 19.5 1 -0.5 2 -22 2 33 2 12.5 2 -22 3 9 1 -5.5 3 -50 1 -2.5 4 51.5 2 2 1 -1 2 -25.5 1 12 2 -0.5 1 6.5 1 -4.5 1 3 1 13 2 -5 5 -56 3 38 1 -0.5 1 2 2 22.5 6 -63.5 4 45 2 -10 2 13.5 2 -38.5 1 13 1 -2.5 1 5.5 3 39 1 -14 1 1 2 19 3 -44 3 46.5 1 -6 1 6 2 -18 1 -0.5 1 8.5 2 -38 1 17.5 3 -31 2 22 1 4 1 -1 2 8.5 2 29.5 3 -10.5 3 22.5 1 -3.5 2 -56 1 -2 2 26 2 -22.5 3 30.5 1 0.5 2 -14 2 21.5 1 -14 2 -5 2 6.5 3 -38.5 1.5 28.5 1.5 9.5 3 -38.5 2 29 3 -14.5 3 22.5 2 -5.5 1 2 1 16 1 0 2 -48 3 65.5 2 -23.5 1 10.5 2 -9 2 -27 3 39 2 -23.5 1 9.5 2 -22.5 4 32.5 2 -15 1 7 2 -32 3 41.5 1 -9 1 -0.5 2 20 2 -10.5 2 11.5 2 -17.5 3 -9 1 0.5 2 -9 1 14 2 -11 2 21.5 1 -13 1 -1 1 4 1 -3.5 2 23 2 -14.5 1 8 2 -20 2 24 2 -25 2 25 2 -26 1 -2 4 26.5 2 -22.5 2 26.5 1 -2.5 2 -33 2 35.5 2 -18 2 19 2 -30.5 3 24.5 6 -32 2 37.5 1 2.5 1 -3.5 2 2.5 1 -3 4 -25 1 6 1 -1 1 2 1 18 1 1.5 2 -14 1 15 3 -33.5 4 47.5 2 -43.5 3 31 2 -18.5 2 8.5 2 -21 1 16 1 -4 1 -18.5 3 40 2 -25.5 2 6.5 1 -10 2 16 1 -1 1 -13.5 2 16 2 -27.5 3 51 2 -26 1 7 2 -18.5 2 22.5 2 -8 1 10 1 -1.5 2 -29 2 24 2 -5.5 2 12 2 -21 2 4 1 -3.5 2 24 1 -7 2 16.5 3 -50.5 3 27 2 6.5 3 -12 2 -31.5 2 36.5 1 2 2 -8 2 29 2 -33 1 12.5 2 -30 2 13.5 1 -7 1 2 1 17 2 -9.5 4 27.5 3 -1 1 -15 1 2 1 21.5 2 -19 1 7 2 -8.5 3 26 2 -17.5 2 25.5 2 -39.5 2 22 1 0 2 -10.5 1 13 2 -24 2 6.5 1 -7.5 2 9 1 -5 1 -1 1 2 1 -1 2 -18.5 2 34 1 1 1 -10 2 21.5 1 0.5 1 -27 1 -2.5 2 13.5 1 -20 4 34 5 -38.5 2 30.5 2 -21 2 19.5 4 -39 2 39 3 -23 1 18 1 -1 1 -17 2 18.5 2 -18.5 1 -0.5 1 7.5 1 -1.5 2 28.5 2 -39 2 28 1 -14 2 23.5 2 4.5 2 -33 2 25 1 0.5 1 -20 1 0 2 12 2 -12.5 2 23.5 1 0 1 2 1 -5.5 1 5 0 -1.5 2 -22.5 3 28 0 104 -2 8 -4 -11 -1 -6.5 -1 0 -1 2.5 -2 9 -3 -3.5 -1 0.5 -1 -0.5 -1 -7.5 -3 12.5 -2 -12 -2 -4 -2 10 -1 -3.5 -2 8.5 -2 -16 -4 18 -3 -1.5 -2 -3.5 -2 -9.5 -1 5 -2 -3 -1 1 -3 13 -1 -1.5 -2 -12.5 -2 6.5 -2 -6.5 -2 13 -1 -1 -3 -15.5 -1 -0.5 -2 6.5 -1 6.5 -2 -6.5 -3 3.5 -2 -16 -2 13.5 -2 -6 -2 15 -2 -1 -2 -6 -3 2 -2 3.5 -4 -14.5 -1 3.5 -2 -1 -3 7 -2 -18.5 -3 11.5 -1 -7 -1 -0.5 -2 9.5 -1 1 -1 -1 -1 3 -2 -5 -2 10.5 -3 -13.5 -5 18 -1 1 -1 -2.5 -2 5.5 -2 -6 -1 0 -2 -8 -1 2.5 -2 -9 -2 13.5 -3 4 -2 7z"/><path fill="rgb(92,92,92)" fill-rule="evenodd" d="M150.5 55.5l-4 -3 -6 -12.5 -12 -39.5 27 0 0 38.5 -2 12 -3 4.5zM728.5 516l-3 -6 -2 -12.5 -3 11.5 -1 1.5 -1 -1 -3 -22 -2 5.5 -1 -2.5 -2 11.5 -2 2.5 -6 -12.5 -3 11.5 -3 -11.5 -5 15.5 -2 -11 -1 0 -2 -7.5 -3 21 -2 -6 -2 2.5 -1 -3 -2 1.5 -2 -1.5 -1 2.5 -2 -10 -3 10 -1 0.5 -1 -5.5 -2 5 -2 -3.5 -1 3.5 -2 -4 -2 1.5 -2 6.5 -2 -19.5 -4 17.5 -3 -14.5 -1 5 -2 -4 -2 6.5 -2 -3 -1 7 -6 -12.5 -3 4 -3 14.5 -5 -16 -2 12 -3 -10.5 -1 -0.5 -1 3 -1 -3.5 -3 14.5 -2 -11 -1 -0.5 -2 7 -3 -9.5 -1 5.5 -3 3.5 -2 -8 -1 4.5 -1 -2 -1 -7.5 -2 2 -1 5 -2 -1 -1 3 -2 -11 -2 14 -1 -2.5 -2 -1.5 -1 -4 -2 6.5 -4 5.5 -3 -9 -2 4 -2 -8.5 -1 -0.5 -4 10.5 -3 -5.5 -3 13 -3 -7 -2 0.5 -3 -7.5 -2 10 -2 0 -2 -2 -3 -0.5 -2 -2.5 -2 -9.5 -2 5 -1 -3 -3 16.5 -3 -15 -4 9 -2 -3.5 -2 5.5 -2 -2.5 -2 8.5 -1 0 -4 -7 -1 3.5 -3 1 -5 -15 -1 0 -4 14 -2 0.5 -4 -7 -2 3 -3 -15.5 -4 5 -5 12 -1 1 -2 -2.5 -2 4 -2 -7 -2 1 -1 -2 -2 2 -2 -13.5 -1 -0.5 -1 6 -2 0 -2 7 -2 -2.5 -2 1 -3 -8 -2 10.5 -4 6.5 -2 -12.5 -1 -0.5 -2 5.5 -2 -3.5 -3 6.5 -2 -5 -5 -5 -5 5 -1 2.5 -4 -7.5 -1 0.5 -3 12.5 -4 -15.5 -3 -1 -2 5.5 -2 -4 -5 4 -3 -5.5 -3 6.5 -2 -1.5 -2 2 -1 -3.5 -2 6 -1 -1.5 -2 0.5 -2 -1.5 -2 1.5 -2 4 -3 -4.5 -2 5 -2 -6.5 -2 0.5 -3 -2 -2 5 -1 1 -1 -2 -2 3.5 -2 -4.5 -2 0.5 -3 -1 -2 4 -4 -3 -3 -8 -3 7.5 -4 -8.5 -2 7.5 -1 0 -2 -5 -3 4.5 -3 -0.5 -1 2 -2 -5 -2 3.5 -2 -8 -2.5 6.5 -3.5 -3.5 -2 4.5 -7 -1 -2 2.5 -2 -2 -3 4 -4 -7 -3 -8 -3 8.5 -7 -4 -3 5 -4 2 -3 -6.5 -2 3.5 -2 -1 -2 1 -4 -5.5 -2 2.5 -2 -1 -1 2 -5 -4.5 -1 1.5 -2 -1.5 -5 1.5 -5 -3.5 -5 3.5 -2 -5 -2 3 -2 0 -2 2.5 -3 -6 -2 6.5 -2 -2 -2 1 -1 -1 -3 4.5 -4 -2.5 -3 3 -2 -2.5 -4 -2 -4 -4 -4 6 -5 -1.5 -3 0 -4 -2 -13 -1.5 -5 5 -5 0.5 -10 -1 -8 -7 -12 -2.5 -57 -4 -62 -2 0 -93.5 16 4 25 1.5 30 -4.5 21 -8 3 -4.5 3 3 12 -2.5 3 0.5 21 -92 4 -8.5 3 -2.5 4 -1 5 1 5 4.5 4 18 3 -10 1 1.5 12 62.5 1 2.5 2 -5 2 -1.5 4 13 4 24 1 1 1 -3 6 -23.5 2 -14 1 0 1 2.5 1 1 1 -1 2 4.5 1 -1 2 17 4 12 1 -1 1 3 2 16.5 1 0 1 -2 2 2.5 3 -7 2 2 2 -2.5 4 14 4 -10 2 -9 3 6.5 1 1 1 -1 4 -12.5 3 -17.5 1 -1 1 9 5 17.5 3 -13.5 2 -2.5 2 -7.5 2 1 3 -9 2 9 2 -6 2 1.5 4 13 4 8 3 22.5 2 0 5 -26.5 1 -1 1 1.5 1 -2.5 2 -15.5 2 -4.5 6 -28 3 28.5 2 7 1 0.5 2 12.5 3 -40.5 2 -2.5 2 -29 1 3.5 2 -12.5 4 45 1 3 1 -7 3 32.5 1 -3 2 4 2 -14.5 2 19 3 3.5 2 9 2 -13.5 2 -2 6 -27 3 18 2 -3 1 -7 2 11.5 2 -17 2 23.5 2 -39 2 29.5 3 -28 2 20.5 2 -19.5 2 19 1 -0.5 2 -20.5 2 32.5 2 11.5 2 -21 3 9.5 1 -5 3 -50 1 -2.5 4 51.5 1 -0.5 1 1.5 1 -1 2 -25 1 11.5 2 -0.5 1 6 1 -4.5 2 15.5 0.5 -0.5 1.5 -2.5 5 -57 3 38.5 1 0 1 2.5 2 21.5 6 -65 4 47 2 -10 2 12.5 2 -38 1 13 1 -2 1 5.5 3 39.5 1 -14 1 0 2 18 3 -42 3 44.5 1 -5 1 7.5 2 -19 1 -1 1 7.5 2 -37 1 16.5 3 -30.5 2 22 1 3.5 1 -1 2 8.5 2 29 3 -7.5 3 22 1 -4 2 -56 1 -1.5 2 25 2 -21.5 3 29 1 1 2 -13.5 2 21 1 -13.5 2 -5.5 2 6 3 -37.5 1.5 26.5 1.5 10 3 -38 2 28.5 3 -13.5 3 21.5 1 -4.5 1 0 1 2.5 1 16 1 -0.5 2 -48 3 65.5 2 -23 1 11 2 -10.5 2 -26 3 37.5 2 -23 1 9 2 -21 4 31.5 2 -14 1 6.5 2 -31.5 3 42 2 -10.5 2 19.5 2 -9 2 11.5 2 -18.5 3 -8.5 1 0 2 -8.5 1 13.5 2 -10.5 2 22 1 -13.5 1 -1.5 1 4 1 -3.5 2 25 2 -16 1 7.5 2 -19.5 2 24.5 2 -25.5 2 24.5 2 -25.5 1 -2 4 26 2 -22 2 26.5 3 -36 2 35 1 0 1 -17 2 18.5 2 -30 3 25 2 -14.5 2 -5 1 -13 1 -1 2 38 1 2 1 -2 2 2.5 1 -3 4 -26.5 1 6.5 1 -1 1 2 1 17.5 1 1.5 2 -13.5 1 16.5 3 -36.5 4 49.5 2 -43.5 3 30 2 -17.5 2 8 2 -21 1 15.5 1 -3.5 1 -18 3 40 2 -26.5 2 7 1 -10 2 16 1 -1.5 1 -13 2 16 2 -27 3 51 2 -26 1 6.5 2 -18.5 2 22 2 -6.5 1 10.5 1 -2.5 2 -29 2 24 2 -5.5 2 11 2 -20.5 2 4 1 -4 2 25.5 1 -7.5 2 16.5 3 -51 3 26.5 2 8 3 -13.5 2 -33 2 38 1 2 2 -7.5 2 29.5 2 -33.5 1 12.5 2 -30 2 11.5 1 -7 1 3 1 17.5 2 -9 4 28 3 -1 1 -15.5 1 2 1 22.5 2 -18.5 1 6.5 2 -8 3 24.5 2 -16 2 24.5 2 -39.5 2 22 1 0 2 -10 1 13 2 -24.5 2 5.5 1 -7 2 9 1 -5 1 -0.5 1 1.5 1 -1.5 2 -18.5 2 35.5 1 -0.5 1 -9.5 2 22.5 1 0.5 1 -28 1 -2 1 12 1 1.5 1 -20.5 4 34.5 5 -39.5 2 31.5 2 -21 2 19.5 4 -41 2 39.5 3 -22.5 1 19 1 -1.5 1 -17 2 17.5 2 -17 1 -1 1 7 1 -1 2 29 2 -39.5 2 27.5 1 -13.5 2 24 2 3.5 2 -33 2 25.5 1 1 1 -21 1 -0.5 2 12 2 -12.5 2 25 2 1.5 1 -6 1 4 1 -6 1 -17.5 1 2 2 25 0 98.5 -2 9.5 -4 -12 -1 -7.5 -2 3 -2 10 -3 -4 -1 1 -1 -0.5 -1 -8.5 -3 13.5 -2 -13 -2 -4 -2 10.5 -1 -3.5 -2 9 -2 -17 -2 13.5 -2 5 -3 -1.5 -2 -3 -2 -10 -1 5.5 -2 -3 -1 1 -3 14 -1 -0.5 -2 -15.5 -2 7 -2 -7 -2 14 -5 -18 -3 14 -2 -7 -3 3.5 -2 -17 -2 15 -2 -7 -2 16.5 -2 -1.5 -2 -6.5 -3 2 -2 3.5 -4 -14.5 -1 3.5 -2 -1 -3 7 -2 -20.5 -2 12 -1 1.5 -1 -7.5 -1 -0.5 -2 10 -1 1 -1 -1 -1 2.5 -2 -5.5 -2 11.5 -3 -13.5 -5 18.5 -1 1 -1 -2.5 -2 6.5 -2 -7 -1 0.5 -2 -8.5 -1 2.5 -2 -10 -2 14.5 -3 4 -2 8z"/><path fill="rgb(99,99,99)" fill-rule="evenodd" d="M150.5 50l-2 0 -2 -2 -5 -9.5 -6 -17 -5.5 -21 24 0 0.5 32.5 -1.5 11.5 -2.5 5.5zM728.5 515l-3 -7.5 -2 -13 -3 12.5 -1 1.5 -1 -1 -3 -23 -2 6 -1 -2.5 -2 12 -2 2 -6 -12.5 -3 12 -3 -12.5 -5 16.5 -2 -12 -1 0.5 -2 -8.5 -3 22.5 -2 -6.5 -2 3 -1 -3 -3 1 -1 -1.5 -1 3 -2 -10.5 -3 10.5 -1 0.5 -1 -5.5 -2 5 -2 -3.5 -1 3 -2 -4.5 -2 2 -2 7 -2 -21 -4 19.5 -3 -16 -1 5.5 -2 -4 -2 7 -2 -3 -1 7.5 -6 -13.5 -3 4 -3 15 -5 -16.5 -2 12.5 -3 -11 -1 -1 -1 3.5 -1 -4 -3 15.5 -2 -12 -1 -0.5 -2 7.5 -3 -9.5 -1 6 -3 3.5 -2 -8.5 -1 5 -1 -2 -1 -8 -2 2 -1 5.5 -2 -1 -1 2.5 -2 -11.5 -2 15 -3 -4 -1 -4.5 -2 7 -4 5.5 -3 -9.5 -2 4 -2 -9 -1 -0.5 -4 11 -3 -5.5 -3 14 -3 -7.5 -2 0.5 -3 -7.5 -2 10.5 -2 0 -2 -2.5 -3 0 -2 -3 -2 -10 -2 5 -1 -3 -3 17.5 -3 -15.5 -4 9.5 -2 -3.5 -2 5.5 -2 -2.5 -2 8.5 -1 0.5 -4 -8 -1 3.5 -3 1 -5 -15.5 -1 0.5 -4 14.5 -2 0 -4 -6.5 -2 3 -3 -17 -4 5.5 -5 13.5 -1 0.5 -2 -2.5 -2 4.5 -2 -7 -2 0.5 -1 -2 -2 1.5 -2 -14 -1 -0.5 -1 6.5 -2 0.5 -2 7 -2 -2.5 -1 1 -1 -0.5 -3 -8.5 -2 11 -4 7 -2 -12.5 -1 -1 -2 5.5 -2 -3.5 -3 7 -2 -5 -5 -6 -5 6 -1 3 -4 -8.5 -1 0.5 -3 13 -4 -15 -3 -1.5 -2 5.5 -2 -4.5 -1 2 -4 3 -2 -5 -2 -1.5 -2 6.5 -2 -1.5 -2 2.5 -1 -4 -2 6.5 -1 -1.5 -2 1 -2 -1.5 -2 1 -2 4.5 -3 -5 -2 5.5 -2 -7 -2 0.5 -3 -2 -2 5 -1 0.5 -1 -1.5 -2 3.5 -2 -4.5 -2 0.5 -3 -1.5 -2 4.5 -2 -3 -1 1 -1 -1.5 -3 -7.5 -3 7.5 -4 -8.5 -2 7.5 -1 0 -2 -5 -3 5 -3 -0.5 -1 2 -2 -5.5 -2 3.5 -2 -8.5 -2 6.5 -1 0.5 -3 -3.5 -2 5 -7 -1.5 -2 3 -2 -2.5 -3 4.5 -4 -7 -3 -9 -3 9 -7 -4 -3 5 -4 2.5 -3 -6.5 -2 3 -2 -0.5 -2 1 -4 -6.5 -2 2.5 -2 -0.5 -1 2 -5 -4.5 -1 1 -2 -1 -5 1 -1 -1.5 -4 -1.5 -5 3 -2 -5 -2 3.5 -2 -0.5 -2 3 -3 -6.5 -2 7 -2 -2 -2 1 -1 -1 -3 5 -4 -3 -3 3.5 -10 -9.5 -4 6.5 -8 -1.5 -4 -2.5 -13 -1.5 -5 6 -6 0.5 -10 -1.5 -7 -7.5 -12 -2.5 -57 -4 -62 -2 0 -88 16 3.5 25 1.5 30 -4.5 21 -8 3 -4 3 3 15 -3 21.5 -91 4.5 -10 6 -3 5 1.5 4 4 5 21 3 -9.5 1 2.5 10 52 3 10 3 -6 1 0 1 2 3 10.5 4 23.5 1 0.5 1 -2.5 6 -23.5 2 -14 1 0.5 1 2.5 1 1 1 -1 2 4 1 -1 2 17 4 12 1 -1.5 1 3 2 16.5 2 -3 2 3 3 -7 2 2.5 2 -3 4 13 4 -8.5 2 -9 3 6 1 1 1 -0.5 4 -12 3 -17.5 1 -1 1 9 5 16.5 3 -13 2 -3 2 -7.5 2 1.5 3 -9 2 9 2 -6 2 2 4 13 4 7.5 3 22 1 -1 1 0 5 -26 1 -1 1 1.5 1 -2.5 2 -15 2 -4 2 -12.5 4 -13.5 3 27.5 2 7 1 0 2 12.5 1 -2.5 2 -37 2 -2 2 -28.5 1 3.5 2 -12 4 44.5 1 2.5 1 -7.5 3 32.5 1 -4 2 4 2 -14 2 18.5 3 3.5 2 8 2 -13 2 -1.5 6 -26.5 3 18 2 -3.5 1 -6 2 10.5 2 -16.5 2 22 2 -38 2 28.5 3 -27.5 2 20.5 2 -19 2 18.5 1 0 2 -19.5 2 32 1 1 1 10 2 -20 3 11 1 -5 3 -51 1 -2 4 51 1 -1 1 1 1 -1 2 -25 1 11.5 2 -0.5 1 6 1 -5 2 15.5 1 -0.5 4 -29.5 2 -28.5 3 38.5 2 3.5 2 20.5 6 -65.5 4 47.5 2 -10 1 11 1 1 2 -37.5 1 12.5 1 -1.5 1 5.5 3 40.5 1 -14.5 1 -0.5 2 16.5 3 -40.5 3 41.5 0 2 1 -4.5 1 9 3 -22 1 7.5 2 -37 1 16 3 -30 2 22 1 3.5 1 -1.5 2 9 2 28.5 1 -2.5 1 1 1 -3 3 21 3 -60 1 -1.5 2 23.5 2 -20 4 28.5 2 -12.5 2 21.5 1 -14 2 -5.5 2 5 3 -36.5 1.5 25.5 1.5 9 3 -37 2 28.5 3 -13.5 3 21 1 -4 2 3.5 1 16.5 1 -1.5 2 -47.5 3 65.5 2 -22 1 11 2 -12.5 2 -25.5 3 36.5 2 -22.5 1 8.5 1 -18 1 -1.5 4 30 2 -13 1 6 2 -30.5 3 42.5 2 -11 2 18 2 -6.5 2 11.5 2 -20 4 -8.5 2 -8 1 13 2 -9.5 2 22 1 -14 1 -1.5 1 3.5 1 -3.5 2 27 2 -18 1 8 2 -20 2 25.5 2 -26 2 24.5 2 -25.5 1 -2 4 27 2 -23.5 2 27.5 3 -37 2 35.5 1 0.5 1 -17.5 2 18.5 2 -30 3 26 2 -16 2 -5 1 -13 1 -0.5 3 40 1 -1.5 2 2.5 1 -2.5 4 -28 1 7 1 -1 1 1.5 2 20 2 -14.5 1 17.5 3 -38 4 51 2 -44 3 29 2 -16.5 2 7.5 2 -21.5 1 16 1 -3.5 1 -18 3 40.5 2 -27 2 7 1 -10 2 15.5 1 -1 1 -13.5 2 16 2 -26.5 3 51.5 2 -25.5 1 7 2 -20.5 2 22.5 1 -5.5 1 0.5 1 10.5 1 -3 2 -29.5 2 25 2 -6 2 10 2 -20.5 2 4 1 -4 2 26.5 1 -7.5 2 16 3 -51.5 5 36 3 -15.5 2 -34.5 2 39.5 1 2 2 -7 2 30.5 2 -34 1 11.5 2 -29.5 1 10.5 1 1 1 -9 0.5 1.5 1.5 20.5 2 -9 4 29.5 3 -1 1 -16.5 2 25 2 -18 1 6.5 2 -7.5 3 23.5 2 -15.5 2 25 2 -40.5 2 21.5 1 0.5 2 -9.5 1 12.5 2 -24.5 2 4.5 1 -6.5 2 9 1 -5 2 1 1 -2 2 -18 2 36.5 1 -1 1 -10.5 2 24 1 0 1 -28 1 -1.5 1 12 1 1 1 -21 4 35.5 5 -41 2 33 2 -21.5 2 20 3 -41 1 -1 2 39 3 -22 1 20 1 -2 1 -18 2 17 2 -16 1 -1 1 6.5 1 -1 2 30 2 -40.5 2 28 1 -14 3 27.5 1 0.5 2 -33.5 2 26 1 1.5 1 -22 1 -0.5 2 11.5 2 -12 2 25.5 2 2 1 -7 1 4 1 -7 1 -16.5 1 1.5 2 24.5 0 93 -2 9.5 -4 -12.5 -1 -8 -2 3 -2 11.5 -3 -4.5 -1 1.5 -1 -1 -1 -9.5 -3 14.5 -2 -14 -2 -4 -2 12 -1 -4 -2 9.5 -2 -18.5 -2 14.5 -2 5.5 -5 -4.5 -2 -10.5 -1 6 -2 -3.5 -1 1 -3 15 -1 -1 -2 -16.5 -2 7.5 -2 -7.5 -2 15 -5 -20 -3 15.5 -1 -0.5 -1 -7 -3 4 -2 -18 -2 16 -2 -7 -2 17.5 -2 -2 -2 -7 -3 2.5 -2 3 -4 -15.5 -1 4.5 -2 -2 -3 8 -2 -22.5 -2 13.5 -1 1.5 -1 -7.5 -1 -0.5 -2 10 -1 1.5 -1 -1.5 -1 3 -2 -6.5 -2 12.5 -3 -14.5 -5 20 -1 1 -1 -2.5 -2 7.5 -5 -16.5 -1 3 -2 -11.5 -2 15.5 -3 4 -2 9.5z"/><path fill="rgb(105,105,105)" fill-rule="evenodd" d="M149.5 44l-3 -1 -5 -9 -10 -33.5 21 0 0.5 29 -1.5 10.5 -2 4zM728.5 514.5l-3 -9 -2 -14.5 -3 14 -1 1.5 -1 -1 -3 -24.5 -2 6.5 -1 -3 -2 13 -2 2.5 -6 -13.5 -3 12.5 -3 -13.5 -5 18 -2 -12.5 -1 0.5 -2 -9.5 -3 24 -2 -7 -2 3.5 -1 -3.5 -3 1.5 -1 -2 -1 3 -2 -11 -3 11.5 -1 0.5 -1 -6 -2 5.5 -2 -4.5 -1 3.5 -2 -4.5 -2 2 -2 7 -2 -22.5 -4 21.5 -3 -17 -1 6 -2 -4 -2 7.5 -2 -3 -1 7.5 -6 -15 -3 5 -3 15.5 -5 -17.5 -2 13 -3 -11.5 -1 -0.5 -1 3.5 -1 -4.5 -3 17 -2 -13.5 -1 -0.5 -2 8.5 -3 -10 -1 6 -3 4 -2 -9 -1 5.5 -1 -2 -1 -9 -2 2.5 -1 6 -2 -2 -1 3 -2 -12.5 -2 16.5 -3 -4.5 -1 -4.5 -2 7.5 -4 5.5 -3 -10 -2 4.5 -2 -10.5 -1 0 -4 12 -3 -6.5 -3 15 -2 -6 -1 -1.5 -2 0.5 -3 -7.5 -2 11 -2 0 -2 -3 -3 0.5 -2 -3 -2 -11 -2 5.5 -1 -3.5 -3 18.5 -3 -16.5 -3.5 10 -1.5 0 -1 -3 -2 6 -2 -3 -2 9 -1 0 -4 -8 -1 3.5 -3 0.5 -5 -16 -1 0.5 -4 15 -2 0 -4 -6.5 -2 3.5 -3 -19 -4 6.5 -6 15.5 -2 -3 -2 4.5 -2 -7 -2 0.5 -1 -2 -2 1 -2 -15 -1 -0.5 -1 7 -2 1 -2 7.5 -2 -3 -1 1.5 -1 -1 -3 -8.5 -2 11 -4 8 -2 -13.5 -1 -0.5 -2 5 -2 -3 -3 7.5 -3 -7.5 -4 -4.5 -6 9.5 -4 -9 -1 0.5 -3 13.5 -2 -9.5 -3 -6.5 -2 -0.5 -2 5 -2 -4.5 -1 2.5 -4 3 -3 -7 -1 0 -2 6.5 -2 -1.5 -2 2.5 -1 -3.5 -2 6.5 -1 -1.5 -2 1.5 -2 -1.5 -2 1 -2 4.5 -3 -5 -2 5.5 -2 -7.5 -2 0.5 -3 -2.5 -2 5.5 -1 0.5 -1 -2 -2 4 -2 -4.5 -2 0.5 -3 -2 -2 4.5 -2 -2.5 -1 1 -1 -1.5 -3 -8 -3 8 -4 -9 -2 8 -1 0 -2 -5.5 -3 5.5 -3 -0.5 -1 2 -2 -5.5 -2 3.5 -2 -9 -2 7 -1 0.5 -3 -4 -2 5.5 -7 -1 -2 3 -2 -2.5 -3 4 -4 -7.5 -3 -9.5 -3 9.5 -7 -3.5 -3 5 -4 3 -3 -7 -2 3.5 -2 -1 -2 1 -4 -7 -2 3 -2 -1 -1 2.5 -5 -5 -1 1 -2 -1 -5 1 -1 -1.5 -4 -2 -5 4 -2 -5.5 -2 3.5 -2 -0.5 -2 3 -3 -6.5 -2 7.5 -2 -2.5 -2 1 -1 -0.5 -3 5 -4 -2.5 -3 3 -10 -10 -4 7 -8 -1.5 -4 -3 -13 -1 -5 6 -6 1 -10 -2 -7 -8 -12 -2.5 -64 -5 -55 -1 0 -82.5 16 3.5 25 1.5 30 -4.5 21 -7.5 3 -4 3 3 15 -3 22 -92.5 5 -10 5 -2.5 5 1.5 4 5.5 5 23 3 -7.5 1 2.5 10 48.5 3 9 2 -5 2 -1 1 2 4 15 3 19 1 0.5 1 -3 6 -23.5 2 -13.5 1 0 1 3 1 0.5 1 -1 2 4 1 -1 3 20.5 3 8.5 1 -1.5 1 2.5 2 17 2 -4 2 2.5 1 -0.5 2 -5.5 2 3 2 -4 4 13 1 0 3 -8 2 -9 3 5.5 2 1 2 -7 1 -0.5 4 -21.5 1 -0.5 1 8.5 5 16 3 -13.5 2 -2.5 2 -7.5 2 1.5 3 -9.5 2 9 2 -5 2 2.5 4 12.5 4 7 3 22 2 -2 5 -26 1 -1 1 1.5 1 -2 2 -15 2 -3.5 2 -12 4 -12.5 3 27.5 2 6 1 0 2.5 12 2.5 -38 2 -1 2 -28.5 1 3.5 2 -11.5 4 44 1 2.5 1 -8.5 3 32.5 1 -5 2 4 2 -14 2 19 3 2.5 2 7.5 2 -12.5 2 -1 6 -26.5 3 18 2 -3 1 -6 2 10 2 -16 2 21 2 -38 2 28.5 3 -27.5 2 20 2 -18 2 18 1 0.5 2 -18.5 2 32 1 0 1 10 2 -19 3 12.5 4 -56.5 1 -2.5 4 51.5 3 -2.5 2 -24.5 1 11 2 -1 1 6 1 -4.5 2 15 2 0 5 -57 3 38 2 5 2 20.5 6 -66.5 4 47 2 -9.5 1 11 1 0.5 2 -37.5 1 12.5 1 -1.5 1 6 3 41.5 2 -16 2 15 1 -4.5 2 -34.5 2.5 38.5 0.5 3.5 1 -3.5 1 11 3 -24 1 6.5 2 -36 1 15 3 -29.5 2 22 1 3 1 -1.5 2 9 2 28 1 -1 1 2.5 1 -2.5 1 2.5 2 17.5 3 -60.5 1 -1 2 22.5 2 -19 4 27 2 -12 2 23 1 -14 2 -7 2 4.5 3 -35 1 24 2 8.5 3 -36.5 2 28 3 -13 3 20 1 -3 2 5 1 17 1 -2.5 2 -48 3 65.5 2 -20 1 10.5 4 -39 3 35 2 -22 1 8.5 1 -17.5 1 -0.5 2 20.5 2 8 2 -12 1 5.5 2 -30 3 43.5 2 -11.5 2 17 2 -5 2 11 2 -21 2 -2 4 -14.5 1 13 2 -9 2 23 1 -15 1 -1.5 1 3 1 -3.5 2 29 2 -18.5 1 7.5 2 -20 2 26 2 -27 2 25 2 -26 1 -2 4 27.5 2 -24 2 28 1 -2.5 2 -35.5 2 36 1 1 1 -17 2 18 2 -31 3 27.5 5 -35 1 -0.5 3 40 1 -1 1 3 1 -0.5 1 -2 4 -29.5 1 7.5 1 -1 1 1 2 21 2 -14 1 17 3 -38.5 4 51.5 2 -44.5 3 29 2 -15.5 1 -0.5 1 7 2 -22 1 16 1 -3 1 -18 3 40.5 2 -27.5 2 7 1 -9.5 2 14.5 1 -1 1 -13 2 16 2 -26 3 51 2 -24 1 6.5 2 -21.5 2 23 1 -5.5 2 12 3 -33.5 2 25.5 2 -6 2 9.5 2 -21 2 4 1 -4 2 27.5 1 -7.5 2 15 3 -51 5 37 3 -17.5 2 -36.5 2 41.5 1 2.5 2 -6 2 30 2 -34.5 1 12.5 2 -30.5 1 10.5 1 0.5 1 -9.5 2 23 2 -9 4 30 1 1 2 -2 1 -16.5 2 25.5 2 -17.5 1 6.5 2 -7.5 3 22.5 1 -13.5 1 -1 2 27 2 -43 2 21 1 1 2 -9.5 1 12 2 -23.5 1 3.5 2 -7 2 9.5 1 -4 2 0 1 -3.5 2 -17.5 2 37.5 2 -11.5 2 24.5 1 -0.5 1 -27.5 1 -1.5 1 12 1 0.5 1 -21.5 4 36 5 -41.5 2 33.5 2 -20.5 2 19 3 -42 1 -0.5 2 39 3 -22.5 1 21 1 -1.5 1 -19 2 16.5 2 -15.5 1 -1 1 6 1 -0.5 2 30.5 2 -41.5 2 29 1 -14.5 2 25.5 1 1.5 1 0.5 2 -33 2 25.5 1 2.5 1 -23 1 -0.5 2 11 2 -11.5 2 26 2 2.5 1 -7.5 1 3 1 -6 1 -17.5 1 1.5 2 24.5 0 86.5 -2 10.5 -4 -14 -1 -9 -2 3.5 -2 13 -3 -4.5 -1 2 -1 -1 -1 -11 -3 16 -2 -16 -2 -4 -2 13.5 -1 -4.5 -2 10.5 -2 -20.5 -2 16 -2 5.5 -5 -4 -2 -11.5 -1 7 -2 -4 -1 1 -3 16 -3 -19.5 -2 8.5 -2 -8.5 -2 16.5 -5 -22 -3 17.5 -1 -1 -1 -7.5 -3 4.5 -2 -20 -2 18 -2 -8 -2 19 -2 -2.5 -2 -7 -5 5.5 -4 -16.5 -1 5 -2 -2 -3 8.5 -2 -26.5 -3 18.5 -1 -8.5 -1 -0.5 -2 11.5 -1 1 -1 -2 -1 3.5 -2 -7.5 -2 14 -3 -15.5 -5 21 -1 1.5 -1 -3 -2 8.5 -2 -8.5 -1 1 -2 -10 -1 3 -2 -12.5 -2 16.5 -3 4 -2 11.5z"/><path fill="rgb(112,112,112)" fill-rule="evenodd" d="M147.5 36.5l-3 -2.5 -4 -8.5 -7 -25 17 0 0.5 25 -1.5 9 -2 2zM728.5 513l-3 -10 -2 -15.5 -3 15 -1 1.5 -1 -0.5 -3 -26.5 -2 7.5 -1 -3.5 -2 14.5 -2 2 -6 -14 -3 13.5 -3 -15.5 -5 20 -2 -14 -1 1 -2 -10.5 -3 26 -2 -8 -2 4.5 -1 -4 -3 1.5 -1 -2 -1 3 -1 -1 -1 -10.5 -1 0.5 -2 11.5 -1 1 -1 -6.5 -2 6 -2 -5 -1 3.5 -2 -5.5 -2 2.5 -2 7.5 -2 -24.5 -4 24 -3 -18 -1 6.5 -2 -4.5 -2 8 -2 -3 -1 8 -2 -8 -4 -8.5 -3 5.5 -3 16.5 -5 -18.5 -2 14 -3 -12.5 -1 -0.5 -1 4 -1 -5 -3 18 -2 -14.5 -1 -1 -2 9.5 -3 -10.5 -1 6.5 -3 4 -2 -9.5 -1 6 -1 -2 -1 -9.5 -2 2.5 -1 6.5 -2 -2 -1 3 -2 -14 -2 18 -3 -4 -1 -5.5 -2 8 -4 5.5 -3 -10 -2 4.5 -2 -11.5 -1 0 -4 13 -3 -6.5 -3 15.5 -2 -6 -1 -2 -2 1 -3 -8 -2 12 -2 -0.5 -2 -3 -3 0.5 -3 -6 -1 -9 -2 6 -1 -3.5 -3 19.5 -3 -18 -4 12 -2 -3.5 -2 6 -2 -3 -2 9 -1 0 -4 -8.5 -1 4 -3 0.5 -5 -17 -5 16 -2 0 -4 -6.5 -2 3.5 -3 -21 -4 7.5 -6 17 -2 -3 -2 5 -2 -7 -2 0.5 -1 -2.5 -2 0.5 -2 -16 -1 -0.5 -1 8 -2 1 -2 7.5 -2 -3 -1 1.5 -1 -1 -3 -9.5 -2 12 -4 8.5 -2 -14 -1 -0.5 -2 5.5 -2 -3.5 -3 8 -3 -7.5 -4 -5.5 -6 11 -4 -10 -1 0 -3 14.5 -4 -15 -3 -1.5 -2 4.5 -2 -4.5 -1 2.5 -4 4 -2 -6.5 -2 -2 -2 7 -2 -1.5 -2 2.5 -1 -3.5 -2 7 -1 -1.5 -2 1.5 -2 -1 -2 1 -2 4.5 -3 -5.5 -2 6 -2 -8 -2 0.5 -3 -2.5 -2 5 -1 1 -1 -2 -2 4 -2 -5 -2 1 -3 -2 -2 4.5 -2 -3 -1 1 -1 -1.5 -3 -8 -3 8.5 -4 -9.5 -2 8 -1 0.5 -2 -6 -3 6 -1 0.5 -2 -1 -1 2 -2 -5.5 -2 3.5 -2 -9.5 -2.5 7.5 -3.5 -4 -2 5.5 -7 0 -2 3 -2 -2.5 -3 4 -4 -8 -3 -10.5 -3 10.5 -4 -3.5 -3 -0.5 -3 6 -4 2.5 -3 -6.5 -2 3 -2 -1 -2 1 -4 -7.5 -2 3 -2 -0.5 -1 2.5 -5 -6 -1 1.5 -2 -1.5 -5 2 -1 -2 -4 -2 -5 4 -2 -5.5 -2 3.5 -2 -0.5 -2 3 -3 -7 -2 8 -1 0 -1 -2.5 -2 1.5 -1 -1 -3 5.5 -4 -2.5 -3 3.5 -10 -11 -4 7 -8 -1 -4 -3.5 -13 -1 -5 7 -6 1 -10 -2 -7 -9 -12 -2.5 -17 -2.5 -47 -3 -55 -1 0 -76 16 3 25 1 30 -4 21 -7 3 -3.5 3 2 15 -2.5 18 -67 4 -24.5 4.5 -10.5 5.5 -4 5 2 4 6.5 3 11.5 2 15 3 -6.5 1 2 9.5 43.5 3.5 9.5 2 -5 2 -0.5 1 2 4 14 3 20 1 0 1 -3 6 -24 2 -13.5 3 4 1 -1 2 3.5 1 -1 3 21 3 8 1 -2 1 2.5 2 17.5 2 -4.5 3 2 2 -5 2 3 2 -5 3 11 2 2 5 -16.5 2 4.5 3 2.5 2 -7 1 0 4 -22 1 -0.5 1 8.5 2 4 2 11.5 1 0.5 3 -14.5 2 -2.5 2 -7 2 1.5 3 -9.5 2 8.5 2 -4.5 2 3 4 13 4 5.5 3 22.5 2 -3 5 -26 1 -1 1 1.5 1 -2 2 -14.5 2 -3 2 -11.5 4 -11 3 27.5 2 5 1 -0.5 2 13 1 -0.5 2 -37.5 2 -0.5 2 -28 1 3.5 2 -11.5 4 44.5 1 1.5 1 -8.5 3 32.5 1 -6 2 3.5 2 -14 2 20 3 1 2 7.5 2 -12.5 2 -0.5 6 -26 3 17.5 2 -3 1 -5 2 9 2 -15.5 2 20 2 -37.5 2 27.5 3 -26.5 2 19 2 -17 2 17.5 1 0.5 2 -17 2 32.5 1 -1 1 9 2 -18 3 14.5 4 -57.5 1 -2.5 4 52.5 1 -3 2 -1.5 2 -24 1 10.5 2 -1 1 5.5 1 -4.5 2 14.5 2 3 5 -57.5 3 37.5 2 5.5 2 20.5 6 -67 3.5 44.5 0.5 2.5 2 -9.5 1 12 1 0 2 -38.5 1 12.5 1 -1 1 6 3 42.5 2 -17.5 2 13.5 1 -5 2 -32 2.5 35.5 0.5 5.5 1 -2 1 11.5 3 -25.5 1 5.5 2 -35 1 14 3 -29 2 22 1 3 1 -1.5 2 9 2 28 2 3 1 -1.5 1 3 2 16 3 -61 1 -0.5 2 21.5 2 -18 4 26 2 -11.5 2 23.5 1 -13 2 -8.5 2 3.5 3 -34 1 22 2 9 3 -36 2 28 3 -13 3 19.5 1 -2.5 2 7 1 17 1 -3 2 -48.5 3 65.5 2 -18.5 1 10 4 -40.5 3 34.5 2 -22 1 8 1 -17 1 0.5 2 21.5 2 5.5 2 -10.5 1 4.5 2 -29 3 44 2 -11 2 15.5 2 -3.5 2 11 2 -21.5 2 -1 3 -15.5 1 -0.5 1 12.5 2 -7 2 22.5 1 -14.5 1 -2 1 2 1 -4 2 31 2 -19.5 1 7.5 2 -19.5 2 25.5 2 -26.5 2 24.5 2 -27 1 -1 4 27.5 2 -24 2 28 1 -2 2 -37 2 37 1 1.5 1 -17 2 17 2 -31 1 2 2 26.5 5 -36 1 -0.5 2 37.5 1 3 1 -1 1 3.5 2 -3 4 -30.5 1 8.5 2 -1 2 21.5 2 -13.5 1 17.5 3 -40 4 52 2 -44.5 3 29 3 -15.5 1 7 2 -23 1 16 1 -2 1 -18.5 3 40.5 2 -27.5 2 7.5 1 -10.5 2 14.5 1 -0.5 1 -14 2 17.5 2 -26.5 3 51 2 -23.5 1 6.5 2 -23 2 24.5 1 -5.5 2 12.5 3 -34.5 2 26.5 2 -6 2 8.5 2 -20.5 2 3.5 1 -3.5 2 27.5 1 -7.5 2 14.5 3 -51.5 5 38.5 3 -20 2 -37 2 42.5 1 3.5 2 -5 2 29 2 -33.5 1 11.5 2 -31 1 10.5 1 0 1 -9 2 22.5 2 -9 4 31.5 1 1.5 2 -2.5 1 -16.5 2 25 2 -16.5 1 6 2 -7 2 20 1 1 1 -13 1 0 2 28.5 2 -44.5 2 20 1 1 2 -9 1 11.5 2 -23 1 3.5 2 -7 2 9.5 1 -4 2 0 3 -22.5 2 39 2 -11.5 2 27 1 -2 1 -28.5 1 -1 1 11 1 1 1 -21 1 1 1 22 2 12.5 5 -43 2 34.5 2 -20 2 19 3 -43 1 -0.5 2 39 3 -22 1 21.5 1 -2 1 -19 2 16 3 -16 2 6 2 30 2 -42 2 29 1 -13.5 2 25 1 1 1 0 0.5 -5 1.5 -27.5 3 28 1 -22.5 1 -1 2 10.5 2 -10.5 2 26 2 2 1 -7.5 1 2.5 1 -6.5 1 -17 1 1 2 24 0 80 -2 11.5 -4 -15 -1 -10.5 -2 4.5 -2 14.5 -3 -4.5 -1 2 -1 -1 -1 -12.5 -3 17.5 -2 -17.5 -2 -4.5 -2 15.5 -1 -5 -2 11.5 -2 -23.5 -2 18.5 -2 5.5 -4 -4.5 -1 0.5 -2 -12 -1 8 -2 -5 -1 1 -3 17.5 -3 -21.5 -2 9 -2 -9.5 -2 18.5 -5 -25.5 -3 20 -1 -0.5 -1 -8 -3 4.5 -2 -22.5 -2 20.5 -2 -8.5 -2 20.5 -2 -3 -2 -7.5 -5 6 -4 -18 -1 5.5 -2 -2.5 -3 9.5 -2 -33 -3 25 -1 -10 -1 -0.5 -2 12.5 -1 1 -1 -2 -1 3.5 -2 -8.5 -2 16 -3 -17 -5 23 -1 1 -1 -3 -2 9 -2 -8.5 -1 1 -2 -10.5 -1 3.5 -2 -15 -2 18 -3 4.5 -2 12.5z"/><path fill="rgb(118,118,118)" fill-rule="evenodd" d="M146.5 26.5l-2 -0.5 -3 -5.5 -5.5 -20 12 0 1 18 -2.5 8zM728.5 511.5l-3 -11 -2 -17 -3 16.5 -1 2 -1 -1 -3 -29 -2 9.5 -1 -5 -2 16.5 -2 1.5 -1 -0.5 -1 -6.5 -3 -3 -1 -4.5 -3 14.5 -3 -17.5 -5 22 -2 -15 -1 1.5 -2 -12.5 -3 28.5 -2 -8 -2 5 -1 -4.5 -3 2 -1 -2.5 -1 3 -1 -1 -1 -11.5 -1 0 -1 10 -2 4.5 -1 -7 -1 0.5 -1 6 -2 -6 -1 3.5 -2 -6 -2 2.5 -2 8.5 -2 -27.5 -4 27.5 -3 -20 -1 8 -2 -5.5 -2 9.5 -2 -3.5 -1 8 -6 -18.5 -3 7 -3 17.5 -5 -20 -2 15 -3 -13 -1 -1 -1 5 -1 -6.5 -3 20 -2 -16 -1 -1 -2 10.5 -3 -11.5 -1 7.5 -3 4 -2 -10 -1 6.5 -1 -2 -1 -10 -2 2.5 -1 7.5 -2 -3 -1 3 -2 -15.5 -2 20.5 -3 -5 -1 -5.5 -2 8.5 -4 6 -3 -11 -2 5 -2 -13 -1 0 -4 14 -3 -7 -3 17 -2 -6.5 -1 -2 -2 1 -3 -7.5 -2 12 -2 0 -2 -4 -3 1.5 -3 -7 -1 -9.5 -2 6 -1 -4 -3 21.5 -3 -19 -4 13 -2 -3.5 -2 6 -2 -3 -2 9 -1 0.5 -4 -9.5 -1 4 -3 0.5 -5 -17.5 -5 16.5 -2 0 -4 -6.5 -2 3.5 -3 -23 -10 27 -2 -3 -2 5.5 -2 -7.5 -2 0.5 -1 -3 -2 0.5 -2 -17.5 -1 -0.5 -1 9 -1 1.5 -1 -0.5 -2 8.5 -2 -3.5 -1 1.5 -1 -1 -3 -10 -2 12.5 -4 9 -3 -15 -2 5 -2 -3.5 -3 9.5 -3 -8.5 -4 -6.5 -6 12.5 -4 -11 -1 0 -3 15.5 -4 -15 -3 -2 -2 5 -2 -5.5 -1 3.5 -4 4 -4 -10 -2 8 -1 0.5 -1 -2 -2 2.5 -1 -4 -2 8 -1 -1.5 -2 2 -3 -0.5 -3 5 -3 -5.5 -2 5.5 -2 -8 -1 -0.5 -1 1 -3 -3 -2 5 -1 1 -1 -2 -2 4 -2 -4.5 -2 0.5 -3 -2.5 -2 5 -2 -3 -1 1 -1 -1.5 -3 -8 -3 9 -4 -10.5 -2 9 -1 0.5 -2 -6.5 -3 6 -1 1 -2 -1 -1 2 -2 -6 -2 4 -2 -10.5 -2 8 -1 0.5 -3 -4.5 -2 6 -7 0 -2 3 -2 -2.5 -3 4.5 -4 -8.5 -3 -11.5 -3 11 -4 -3 -3 -0.5 -3 6 -4 3 -3 -7 -2 3.5 -2 -1.5 -2 1 -4 -8 -2 3.5 -2 -1 -1 3 -5 -6.5 -1 1.5 -2 -1.5 -1 1 -2 -0.5 -2 1.5 -1 -2.5 -4 -2 -5 4.5 -2 -6 -2 4 -2 -0.5 -2 3 -3 -7.5 -2 8.5 -1 0 -1 -2.5 -2 1.5 -1 -1 -3 6.5 -4 -3 -3 3.5 -10 -12 -1 0 -3 8 -7 -1 -5 -4 -13 -1.5 -5 8 -6 1.5 -10 -2 -7 -10.5 -12 -2.5 -17 -2.5 -47 -3 -55 -1 0 -70 16 3 25 1 30 -4 21 -6.5 3 -3.5 3 2 15 -2.5 18 -63.5 4.5 -29.5 4.5 -10 5 -3.5 5 2.5 4 7 3 11 2 19 3 -6 10 41 4 9.5 2 -4.5 2 -1 1 2 4 14 3 20 1 0 2 -6.5 7 -34.5 3 4 1 -1 2 3.5 1 -1 3 21.5 3 8 1 -2.5 1 2.5 2 17 2 -4.5 1 -0.5 2 2.5 2 -5 2 3.5 2 -5.5 3 10.5 2 2 5 -15.5 4 6.5 1 0.5 2 -6.5 1 0.5 4 -23 1 -0.5 1 9 2 4 2 11.5 1 0 3 -15.5 2 -2.5 2 -7 2 2 3 -9.5 2 8.5 2 -4 6 16.5 2 1 2 3.5 3 22 2 -3.5 5 -26.5 1 -0.5 1 1.5 1 -2 2 -14 2 -3 2 -10.5 4 -10 3 28 2 4 1 -1 2 14 1 0 2 -38 2 0.5 2 -28.5 1 4 2 -11 4 45 1 1.5 1 -10.5 3 33 1 -6 1 -0.5 1 2 2 -13 2 20 2 1 1 -1 2 7 2 -12 2 0 3 -16 3 -9.5 3 17 2 -2.5 1 -4.5 2 8 2 -14.5 2 18.5 2 -37 2 26.5 3 -26 2 19 2 -17 2 17.5 1 1 2 -16 2 33 1 -2.5 1 9 2 -17 3 16 2 -17 2 -41.5 1 -2 4 53 3 -5.5 2 -24.5 1 10 2 -1 1 5.5 1 -5 1 2.5 1 12 2 5 5 -58 3 37 4 27.5 6 -68 3 41.5 1 5.5 2 -8.5 1 11.5 1 0 2 -39.5 1 12.5 1 -0.5 1 6 3 43.5 2 -17.5 2 11 1 -4.5 2 -31 2 32.5 1 8 1 -1 1 12 3 -27.5 1 5.5 2 -35 1 13.5 3 -28.5 2 22 1 2.5 1 -1.5 2 9 2 28.5 2 5 1 -1 1 3 2 15 3 -61 1 -0.5 2 20 2 -16.5 1 2.5 3 22 1 -0.5 1 -9 2 23.5 3 -22.5 2 2 3 -32.5 1 21 1 7.5 1 0.5 3 -34.5 2 27 3 -12.5 3 19 1 -2 2 9 1 17 1 -3 2 -50 3 66 2 -17 1 9 4 -41 3 33.5 2 -22 1 8 1 -16.5 1 1 2 22.5 2 4 2 -9.5 1 4 2 -28.5 3 44.5 2 -11 2 14 2 -2 2 10.5 2 -21.5 1 1 1 -1 3 -17 1 -0.5 1 12.5 2 -6 2 22.5 1 -14.5 1 -2 1 1.5 1 -4.5 2 33 2 -20.5 1 7 2 -19 2 25 0.5 -2.5 1.5 -23 2 23 2 -26 1 -1.5 4 27.5 2 -23.5 2 27.5 1 -2 2 -38 2 37.5 1 2 1 -17 2 17 2 -30.5 1 1 2 27 5 -37 1 0 2 38 1 2.5 1 0 1 3.5 2 -3 2 -11.5 2 -20.5 1 10 2 -2.5 2 22.5 2 -13 1 17 3 -41 4 55 2 -47 3 29 3 -15 1 6.5 2 -23.5 1 17 1 -2 1 -19.5 3 41.5 2 -27.5 2 7.5 1 -10.5 2 14 1 -0.5 1 -14.5 2 18 2 -27 3 52 2 -23 1 6 2 -24 2 25 1 -5 2 13 3 -35 2 26.5 2 -5.5 2 7.5 2 -19.5 2 3 1 -3.5 2 27.5 1 -7.5 2 14.5 3 -52 5 39.5 3 -23 2 -35.5 2 43 1 3.5 2 -4.5 2 30 2 -34 1 11 2 -32 1 10.5 1 0 1 -9 2 23 2 -9.5 2 21 3 14 2 -4 1 -16 2 26.5 2 -17.5 1 6 2 -7 2 22 1 0 1 -14.5 1 0 1.5 30 -1 34 -1.5 8.5 -1 -12 -1 -1 -2 15 -1 1 -1 -3 -1 4.5 -2 -10.5 -2 18 -3 -18 -5 25 -1 1 -1 -3 -2 9.5 -2 -8.5 -1 1.5 -2 -12 -1 3.5 -2 -17.5 -2 20.5 -3 5 -2 13.5zM820.5 501l-3 -23.5 -2 10.5 -2 -11 -2 20.5 -1 -1.5 -4 -28 -3 24 -1 -0.5 -1 -9.5 -3 5.5 -2 -27.5 -2 25.5 -2 -9.5 -2 22.5 -4 -12 -5 6.5 -4 -20 -1 7 -2 -3.5 -3 11 -2 -52 2 -44.5 2 18.5 1 1.5 2 -8 1 11.5 2 -23 1 3 2 -7 2 9 1 -3.5 1 1 1 -1 3 -23.5 2 40 2 -12 2 30 1 -2.5 1 -30 1 -1 1 10.5 1 0.5 1 -20.5 1 1.5 3 36.5 5 -46.5 2 35.5 2 -19.5 2 18.5 3 -44.5 1 0 2 39 3 -21.5 1 21.5 1 -1.5 1 -19 2 15 3 -15 2 5.5 2 32 2 -44.5 1 22 1 7 1 -13 2 26.5 2 -0.5 2 -32.5 3 28 1 -22.5 1 -1 2 9.5 2 -9.5 2 25.5 2 4.5 1 -10.5 1 2 1 -6.5 1 -17 1 1 2 24 0 73 -2 12.5 -4 -16.5 -1 -12.5 -2 5 -2 17 -3 -4.5 -1 2.5 -1 -1.5 -1 -14.5 -3 19.5 -2 -20 -2 -4.5 -2 18 -1 -5.5 -2 12.5 -2 -27 -3 26 -1 1 -4 -4.5 -1 1 -2 -13 -1 9.5 -2 -6 -1 1 -3 18z"/><path fill="rgb(124,124,124)" fill-rule="evenodd" d="M728.5 510l-3 -12.5 -2 -19 -3 19 -1 2 -1 -0.5 -3 -33 -2 11.5 -1 -6 -2 18.5 -2 1.5 -1 -0.5 -1 -7 -3 -3 -1 -5 -3 16 -3 -20.5 -1.5 13 -0.5 1.5 -1 -2 -2 12.5 -5 -29.5 -3 32 -2 -9 -2 6 -1 -5 -3 2 -1 -2.5 -1 3 -1 -0.5 -1 -13.5 -1 0.5 -1 11 -2 5 -1 -7.5 -1 0.5 -1 7 -2 -7.5 -1 4 -2 -7 -2 3 -2 9 -2 -32.5 -4 33.5 -3 -22.5 -1 9.5 -2 -6 -2 10.5 -2 -3.5 -1 8.5 -6 -21.5 -3 8.5 -3 18.5 -5 -21.5 -2 16.5 -3 -14.5 -1 -0.5 -1 5.5 -1 -7.5 -3 21.5 -3 -19 -2 12.5 -3 -12.5 -1 8 -2 4 -1 0.5 -2 -11 -1 7.5 -2 -13.5 -2 3 -1 8 -2 -3.5 -1 3.5 -2 -18.5 -2 24 -3 -5 -1 -6.5 -2 9 -4 6.5 -3 -11.5 -2 5 -2 -14.5 -1 0 -4 16 -2 -7.5 -1 -0.5 -3 18.5 -2 -7 -1 -2 -2 1 -3 -8 -2 13 -2 0 -2 -4.5 -3 2 -2 -4 -2 -13.5 -2 6 -1 -4.5 -3 23.5 -3 -21 -4 15 -2 -3.5 -2 6 -2 -3.5 -2 10 -1 0 -4 -10 -1 4.5 -3 -0.5 -5 -18 -5 17.5 -2 0 -2 -5 -1 0.5 -1 -2.5 -2 4 -3 -26 -4 10 -5 20 -1 0.5 -2 -3 -2 5.5 -2 -7.5 -2 0.5 -1 -3 -2 -0.5 -2 -19.5 -1 0 -1 10 -1 2 -1 -0.5 -2 9 -2 -3.5 -1 1 -1 -0.5 -3 -11.5 -2 14 -4 9.5 -3 -16 -2 5.5 -2 -3.5 -3 10 -6 -15.5 -1 -0.5 -6 13.5 -4 -12 -1 0 -3 16.5 -4 -15 -3 -2 -2 4 -2 -5.5 -1 4 -4 4.5 -4 -11.5 -2 9 -1 0 -1 -2 -2 3 -1 -4 -2 8.5 -1 -2 -2 2.5 -3 -0.5 -3 5 -3 -5.5 -2 6 -2 -8.5 -3 -0.5 -2 -2.5 -2 5 -1 1 -1 -2 -2 4.5 -2 -5 -2 1 -3 -3 -2 5 -2 -3.5 -1 1.5 -1 -1.5 -3 -8.5 -3 9.5 -4 -11 -2 10 -1 0 -2 -7 -3 7 -1 1 -2 -1 -1 2 -2 -6.5 -2 4.5 -2 -11.5 -2 8.5 -1 0.5 -3 -4.5 -2 6.5 -3 -0.5 -2 1.5 -2 -0.5 -2 3 -2 -3 -3 4.5 -4 -9 -3 -12.5 -3 12 -4 -3.5 -3 0 -3 6.5 -4 3 -3 -7 -2 3.5 -2 -1.5 -2 1 -4 -9 -2 3.5 -2 -0.5 -1 3 -5 -7 -1 1.5 -2 -1.5 -1 1.5 -2 -1 -2 1.5 -1 -2.5 -4 -2 -1 2 -4 3 -2 -6.5 -2 4 -2 -0.5 -2 3.5 -3 -8.5 -2 9.5 -1 0 -1 -3 -2 2 -1 -1 -3 7 -4 -3 -3 3.5 -10 -13 -1 0 -3 8.5 -7 -1 -5 -4 -13 -1.5 -5 9 -7 1.5 -9.5 -3 -6.5 -11 -12 -2.5 -17 -3 -47 -3.5 -55 -1 0 -62 16 2 24 1 15 -1 16 -2.5 21 -6.5 3 -3 3 2 15 -3 18 -59 5 -35 4 -9 5 -3.5 5 2.5 4 7 2 8 3 26 3 -5 11 40.5 3 5.5 2 -5 2 -1 1 2 3 9 4 25 1 0 2 -6.5 7 -35 3 5 1 -2 2 3.5 1 -1 2 18 4 12 1 -3 1 2.5 2 17 3 -6 2 2.5 2 -4 2 3.5 2 -5.5 3 9.5 2 2 3 -6.5 2 -8 2 4.5 3 2 2 -6 1 1 5 -24 1 10 2 3.5 2 11 1 0 3 -16.5 2 -2 2 -7 2 3 3 -11 2 8.5 2 -3.5 6 17.5 4 4 3 21.5 2 -4 5 -27 1 -0.5 1 1.5 1 -1.5 2 -14 2 -2.5 2 -10.5 4 -8 3 28.5 2 3 1 -2 2 14.5 1 0.5 2 -38 2 1 2 -28 1 4 2 -10.5 4 46 1 0.5 1 -12 3 33.5 1 -6.5 1 -0.5 1 1.5 2 -13.5 2 21 2 0.5 1 -2 2 7 2 -12 2 1.5 3 -17 2 -3.5 1 -5.5 3 17 3 -6 2 7 2 -14.5 2 18 2 -37 2 26 3 -26 2 18.5 2 -16 3 18.5 2 -15 2 33.5 1 -3 1 9 2 -16 3 16.5 2 -17 2 -42 1 -2.5 4 54 3 -6.5 2 -24.5 1 9 1 1 1 -1.5 1 5 1 -5 1 2 1 12 2 7.5 5 -59 3 36.5 4 29 6 -69 3 43.5 1 4.5 2 -8.5 1 11.5 1 -0.5 2 -40 1 12 1 0 1 6 3 44.5 2 -17.5 2 9 1 -4 2 -30.5 2 32.5 1 8 1 -1 1 13 3 -28 1 4 2 -34.5 1 12.5 3 -28 2 22 1 2.5 1 -2 2 9.5 2 28.5 4 9.5 2 16 3 -63.5 1 0 2 19 2 -15 1 1.5 2 18.5 2 4 1 -9 2 23 1 -12 3 -11.5 1 1.5 3 -31 1 20 1 7 1 0 3 -34 2 27.5 3 -12.5 1 8.5 2 9 1 -1 2 11.5 1 16.5 1 -3.5 2 -50.5 3 65.5 2 -15.5 1 9 4 -42.5 3 33.5 2 -22.5 1 7.5 1 -15.5 3 25 2 2.5 2 -8 1 3 2 -28.5 3 45 2 -10.5 2 12.5 2 -0.5 2 10.5 2 -22 1 1.5 1 -0.5 3 -18 1 0 1 12 2 -5 2 21.5 1 -14 1 -1.5 1 1 1 -5 2 37 2 -24.5 1 7 2 -18 2 24 2 -25 2 22.5 2 -25.5 1 -1 4 26.5 2 -23 2 27 1 -2 2 -39 3 41 1 -17 2 16 2 -29.5 1 0.5 2 27.5 5 -38 1 0 2 38 2 3 1 5 2 -4.5 2 -11 2 -22 1 11.5 2 -2.5 2 21.5 2 -12.5 1 17 3 -41.5 4 58 2 -48.5 3 27.5 3 -14 1 6 2 -24.5 1 18 1 -1.5 1 -20 3 41 2 -27 2 8 1 -10.5 2 13 1 -0.5 1 -14 2 18 2 -27 3 54 2 -25 1 6.5 2 -24.5 2 24.5 1 -5 2 16 3 -37 2 26.5 2 -6 2 6.5 2 -18.5 2 3.5 1 -4 2 29 1 -9 2 16 3 -54.5 5 41 3 -24 2 -36 2 43.5 1 3.5 2 -3.5 2 32 2 -36.5 1 11 2 -33 1 11 1 -1 1 -9 2 24 2 -9 5 38.5 2 -7.5 1 -16 2 28.5 2 -19.5 1 6.5 2 -7.5 2 24.5 1 -0.5 1 -17 1 2 1 23 -0.5 29 -1.5 9 -2 -17 -2 19.5 -1 0.5 -1 -3 -1 4.5 -2 -13.5 -2 22.5 -3 -21.5 -5 29 -1 1 -1 -3.5 -2 10.5 -2 -9 -1 2 -2 -13 -1 4 -2 -21.5 -2 24 -3 5 -2 15zM820.5 499l-3 -27 -2 12.5 -2 -13 -2 24 -1 -2 -4 -35.5 -3 31 -1 -0.5 -1 -11 -1 0 -2 6 -2 -47 2 -36 1 -0.5 1 10 1 0.5 1 -20.5 1 1.5 3 38.5 5 -49.5 2 37.5 2 -20 2 18.5 3 -46 1 0 2 38.5 3 -20.5 1 22 1 -2 1 -18.5 2 14 3 -14 2 5.5 2 34 2 -47 1 21 1 8 1 -12.5 2 28.5 2 -2 2 -33.5 3 30.5 1 -25.5 1 -1 2 9 2 -9 2 28 2 4.5 1 -13 1 1.5 1 -6.5 1 -16.5 1 0.5 2 23.5 0 65 -2 14 -4 -18 -1 -17 -2 7 -2 21 -1 -3 -1 0.5 -1 -2.5 -1 3 -1 -1 -1 -18 -3 23 -2 -24 -2 -6 -2 22.5 -1 -6 -2 14 -2 -33 -3 31.5 -1 1 -4 -5 -1 1.5 -2 -14 -1 11 -2 -7.5 -1 1.5 -3 19.5zM790.5 496.5l-4 -13.5 -5 7 -2 -7.5 -2 -15.5 -1 8.5 -2 -4 -3 12.5 -1.5 -47.5 1.5 -40 2 18.5 1 2.5 2 -9 1 13.5 2 -24.5 1 2.5 2 -7 2 9 1 -3.5 1 1.5 1 -2 3 -24.5 2 42.5 2 -13.5 2 34 -1 38 -1 8 -2 -11.5 -2 25.5z"/><path fill="rgb(131,131,131)" fill-rule="evenodd" d="M728.5 508l-3 -13.5 -2 -22 -3 22 -1 2.5 -1 -0.5 -3 -39.5 -2 16 -1 -8.5 -2 22.5 -2 1.5 -1 -0.5 -1 -8.5 -3 -2.5 -1 -5.5 -3 17.5 -3 -25.5 -1.5 15 -0.5 3.5 -1 -2 -2 14 -2 -18.5 -1 3 0 -2 -2 -19.5 -3 39.5 -2 -10 -2 7 -1 -6 -3 3 -1 -3.5 -1 3.5 -1 -0.5 -1 -15 -1 0 -1 13 -2 5.5 -1 -8 -1 0.5 -1 7.5 -2 -8.5 -1 4 -2 -8 -2 3.5 -2 10 -2 -43.5 -4 45 -3 -25.5 -1 11.5 -2 -6.5 -2 11.5 -2 -3.5 -1 9 -6 -25.5 -3 11 -3 20 -5 -23.5 -2 18 -3 -16 -1 -0.5 -1 7 -1 -9.5 -3 24.5 -3 -22 -2 14.5 -2 -13 -1 -1 -1 9.5 -2 4 -1 1 -2 -13 -1 9 -2 -15 -1 0 -1 3.5 -1 9.5 -2 -5 -1 4 -2 -23 -2 29.5 -3 -6 -1 -7 -2 10 -4 7 -3 -12.5 -2 5.5 -2 -17.5 -1 0.5 -4 18 -2 -8 -1 -0.5 -3 20.5 -3 -9.5 -2 1 -3 -8 -2 14 -2 -0.5 -2 -5 -3 2.5 -2 -4.5 -2 -15 -2 7 -1 -5 -3 25 -3 -22.5 -4 17 -2 -3.5 -2 6.5 -2 -4 -2 10 -1 0 -4 -10.5 -1 4.5 -3 -0.5 -5 -19.5 -5 18.5 -2 0 -2 -5 -1 0.5 -1 -2.5 -2 4.5 -3 -31 -9 35.5 -1 0.5 -2 -3 -2 5.5 -2 -7.5 -2 0.5 -1 -3.5 -2 -1 -2 -22 -1 0.5 -1 12 -1 2 -1 -0.5 -2 9.5 -2 -4 -1 1.5 -1 -1 -3 -12.5 -2 15 -4 10.5 -3 -16.5 -2 5.5 -2 -4 -3 11 -6 -17 -1 -1 -6 15.5 -4 -13 -1 -0.5 -3 18 -4 -15 -2 -0.5 -1 -2 -2 4 -2 -6.5 -1 4.5 -4 5.5 -4 -13 -2 9.5 -1 0.5 -1 -2.5 -2 3.5 -1 -4.5 -2 9 -1 -1.5 -2 2.5 -2 -0.5 -2 1 -2 4.5 -3 -6 -2 6 -2 -9 -3 -0.5 -2 -3 -2 5.5 -1 1 -1 -2 -2 4.5 -2 -4.5 -2 0.5 -3 -3.5 -2 5.5 -2 -3.5 -1 1 -0.5 -1 -3.5 -9 -3 10.5 -4 -12 -2 10.5 -1 0.5 -2 -8 -3 7.5 -1 1 -2 -1 -1 2.5 -2 -7 -2 4.5 -2 -12 -2 9 -1 0.5 -3 -5 -2 7 -3 -0.5 -2 2 -2 -0.5 -2 3.5 -2 -3 -3 4.5 -4 -9.5 -3 -14.5 -3 13 -4 -3 -1 1 -2 -1 -3 6.5 -4 4 -3 -7.5 -2 3.5 -2 -1.5 -2 1 -4 -10.5 -2 4.5 -2 -0.5 -1 3.5 -5 -8.5 -1 2 -2 -2 -1 1.5 -2 -0.5 -2 1.5 -1 -2.5 -4 -2.5 -1 2.5 -4 3 -2 -7 -2 4.5 -2 -0.5 -2 4 -3 -10 -2 10.5 -1 0.5 -1 -3 -2 1.5 -1 -0.5 -3 7.5 -4 -3.5 -3 4 -10 -14.5 -1 0 -3 9.5 -7 -0.5 -5 -5 -13 -1.5 -5 10 -7 2 -9.5 -3 -3.5 -5 -3 -7.5 -28 -6 -48 -4.5 -55 -0.5 0 -54.5 16 2 24 1 15 -1.5 16 -2.5 21 -5.5 3 -2.5 3 1.5 15 -3.5 18 -54.5 5 -39.5 4 -9 5 -4 5 2.5 4 7.5 5 38 3 -4 10 36 4 5 2 -4.5 2 -0.5 1 1.5 4 14.5 2 18 1 1.5 1 -0.5 2 -6 5 -21.5 2 -14 3 5.5 1 -2 2 3 1 -1.5 2 19 4 12 1 -3.5 1 2.5 2 16.5 3 -6.5 2 2.5 2 -3.5 2 3.5 2 -6 3 9 2 2.5 3.5 -6.5 1.5 -7.5 2 4.5 3 2 2 -5.5 1 1 5 -23.5 1 9.5 2 3.5 2 11 1 -0.5 3 -17 2 -2 2 -7.5 2 4 3 -11.5 2 8.5 2 -3 6 18.5 2 0.5 1 2.5 1 0 3 21 2 -5 5 -27 1 -0.5 1 2 1 -2 2 -13.5 2 -2 2 -10 4 -6.5 3 29 2 2.5 1 -2.5 3 15.5 2 -38 2 2.5 2 -29 1 4 2 -10 4 46.5 1 0.5 1 -14 3 33.5 1 -6.5 1 -0.5 1 1.5 1 -12.5 1 -1.5 2 21.5 2 0 1 -2 2 6 2 -12 2 3 3 -17.5 2 -2.5 1 -6.5 1 1 2 16.5 3 -5 2 6 2 -14 2 16.5 2 -37.5 2 25.5 3 -25.5 2 18.5 2 -15.5 3 18 2 -13.5 2 33.5 1 -3 1 8.5 2 -14.5 3 17 2 -17 2 -43 1 -2.5 4 55 3 -7.5 2 -24 1 8.5 1 1 1 -1.5 1 5 1 -6.5 1 1.5 3 22.5 5 -60 3 37 4 29 6 -69.5 3 45 1 4 2 -8 1 11 1 -1 2 -41 1 11.5 1 0.5 1 7 3 45 2 -17.5 2 7.5 1 -4 2 -29.5 2 32.5 1 7 1 0 1 16 1 -2 2 -29.5 1 3.5 2 -35 1 12.5 3 -28 2 22.5 1 1.5 1 -2 2 9 2 29.5 3.5 10.5 2.5 19.5 3 -66.5 3 19 2 -14 1 0.5 2 17 2 5.5 1 -8.5 2 22.5 3 -21.5 1 -3 1 1 3 -30 1 20.5 1 5.5 1 -0.5 3 -33.5 2 28 3 -13 1 9.5 1 0.5 1 7 1 0 0.5 1.5 2.5 27.5 3 -55 3 66 2 -14 1 8.5 4 -42.5 3 32 2 -22.5 1 7 1 -15 3 26.5 2 1 2 -6.5 1 2.5 2 -29 3 46 2 -10.5 2 10.5 2 1.5 2 13 2 -24.5 2 1.5 3 -18.5 1 0 1 11.5 2 -4 2 21 1 -14 1 -1.5 1 0.5 1 -5 2 41 2 -28 1 6.5 2 -17.5 2 24 1 -2 1 -23 2 22 2 -25 1 -1 4 26.5 2 -23 2 27.5 3 -42.5 3 43 1 -18 2 15.5 2 -28.5 1 0 2 28 5 -39 1 0.5 2 37 2 4 1 8 4 -18.5 2 -22.5 1 12 2 -3 2 21.5 2 -12.5 1 19 3 -44.5 4 61.5 2 -50.5 3 26.5 3 -13.5 1 6 2 -24.5 1 18 1 -1.5 1 -19.5 3 40.5 1 -2.5 1 -24.5 2 8 1 -10 2 12 1 0 1 -14 2 17.5 2 -26 3 55.5 2 -26.5 1 6 2 -25 2 24.5 1 -4.5 2 19.5 3 -40 2 26 1 0.5 1 -6 2 5.5 2 -17.5 2 3 1 -4 2 31.5 1 -11 2 17.5 3 -56.5 5 43.5 3 -29 2 -35 2 44.5 1 4 2 -3.5 2 34 2 -38 1 10 2 -33 1 11.5 2 -11 2 24.5 2 -8.5 5 41.5 2 -8.5 1 -18 2 31 2 -20.5 1 8 2 -9 1.5 25 -1.5 36 -1 0 -1 -4.5 -1 5.5 -2 -22.5 -1 30.5 -1 2.5 -3 -26.5 -2 21 -4 15 -1 -3.5 -2 11 -2 -9 -1 2 -2 -14 -1 4 -2 -30 -2 32 -3 5.5 -2 16.5zM820.5 497l-3 -32 -2 15.5 -2 -16.5 -2 28.5 -1 -1.5 -2.5 -23.5 -1 -31 4.5 -51 2 40.5 2 -22 2 20.5 3 -49.5 1 0 2 38.5 1 -1 2 -18.5 1 23 2 -22 2 13.5 3 -13 2 5.5 2 35.5 -1.5 39 -1.5 12 -1 1 -4 -5.5 -1 2.5 -2 -16 -1 13 -2 -8.5 -1 1.5 -3 21.5zM790.5 494l-4 -15.5 -5 8 -2.5 -10 -1.5 -19 -1 13 -2 -6.5 -3 16.5 -1 -44 1 -34 2 19.5 1 3 2 -9 1 13.5 2 -26.5 1 2.5 2 -7 2 8.5 1 -2.5 1 1 1 -2 3 -25 2 45.5 2 -16.5 1.5 29 -0.5 34 -1 8 -2 -14 -2 29.5zM840.5 490l-2 -53.5 2 -48.5 2 28 1 -12 2 32.5 -2 44.5 -1 -7.5 -2 16.5zM803.5 485.5l-1 -0.5 -1 -13 -1 0 -2 7.5 -1 -27 1 -46.5 1 0 1 11 1 0 1 -21 1 1 2.5 38.5 -2.5 50zM849.5 488.5l-4 -52 2 -5 2 -34.5 3 32.5 1 -27.5 1 -1 1 8 1 0.5 2 -8.5 2 30 1.5 5.5 -3.5 50.5 -1 -4 -1 1 -1 -2.5 -1 3.5 -1 -1.5 -1 -24 -3 29zM867.5 494l-4 -20.5 -1 -25 1 -28 1 0.5 1 -6.5 1 -16 1 0.5 2 22 0 57 -2 16zM766.5 469.5l-1 -33 1 -18.5 1.5 18.5 -1.5 33z"/><path fill="rgb(137,137,137)" fill-rule="evenodd" d="M513.5 504.5l-1 0 -4 -11.5 -1 5 -1 -1 -2 0 -5 -21 -5 20 -2 0 -2 -5 -1 0.5 -1 -2.5 -2 4.5 -3 -39.5 -9 44.5 -1 1 -2 -3.5 -2 6.5 -2 -8 -2 0 -1 -3.5 -2 -1.5 -2 -26 -1 0.5 -1 15 -1 2.5 -1 0 -2 10 -2 -4.5 -1 1.5 -1.5 -2 -2.5 -13 -2 16.5 -4 11 -3 -17 -2 5.5 -2 -4 -3 12 -6 -19.5 -1 -0.5 -6 17.5 -5 -15 -3 19 -4 -15 -2 -0.5 -1 -2 -2 3.5 -2 -7 -1 5.5 -4 5.5 -4 -15 -2 11 -1 0.5 -1 -3 -2 4 -1 -5 -2 10 -1 -1.5 -2 3.5 -2 -1 -2 1.5 -2 4 -3 -6 -2 6.5 -2 -10 -1 -1 -2 0.5 -2 -3 -2 5 -1 1.5 -1 -2.5 -2 5.5 -2 -5 -2 0.5 -3 -4 -2 5.5 -2 -3.5 -1 1.5 -0.5 -1 -3.5 -9.5 -3 11 -4 -12.5 -2 11 -1 0.5 -2 -8.5 -3 8.5 -1 1 -2 -1 -1 2 -2 -7 -2 4.5 -2 -13.5 -2 10.5 -1 0.5 -3 -5.5 -2 8 -3 -0.5 -2 2 -2 -0.5 -2 3.5 -2 -3 -3 4.5 -4 -10 -3 -16.5 -3 15 -4 -3.5 -1 1 -2 -1 -3 7.5 -4 4 -3 -8 -2 4 -2 -1.5 -2 1 -4 -12 -2 5 -2 -0.5 -1 4 -5 -9.5 -1 2 -2 -2 -1 2 -1 0.5 -1 -1 -2 1.5 -1 -3 -4 -2.5 -1 2.5 -4 3.5 -2 -8 -2 5 -2 -0.5 -2 4.5 -3 -11.5 -2 12.5 -1 0 -1 -3.5 -2 2 -1 0 -3 7.5 -4 -3 -3 4 -10 -16 -1 0 -3 10.5 -7 -0.5 -5 -6 -13 -1.5 -5 11.5 -4 2 -4 0 -6 -1.5 -3 -2 -6 -14 -26 -6.5 -50 -5.5 -55 -0.5 0 -45 33 2 22 -0.5 37 -8 3 -2.5 3 1.5 15 -3.5 18 -49 3 -30.5 3.5 -19 3.5 -6.5 4 -3 5 3 4 7.5 5 43 3 -3 11 34.5 1 -1 2 2.5 2 -4.5 2 -0.5 1 1.5 4 14 2 18 1 1 1 -0.5 2 -6 5 -21 2 -15 3 7 1 -2.5 2 3 1 -2 2 19 4 12 1 -3.5 1 2 2 16.5 3 -7.5 2 3 2 -3.5 2 4 2 -6.5 3 8 2 3 3 -5 2 -7.5 2 3.5 3 2.5 2 -5 1 1 5 -23 1 9.5 2 3.5 2 10.5 1 -1 3 -17.5 2 -1.5 2 -7.5 2 4 3 -12.5 2 8.5 2 -1.5 6 18.5 2 0.5 1 2.5 1 -0.5 3 20.5 7 -33 1 -0.5 1 2 1 -2 2 -13 2 -1.5 2 -9.5 2 -0.5 2 -4 3 29 2 1.5 1 -2.5 3 16 2 -38.5 2 4.5 2 -30 1 4.5 2 -9.5 4 47 1 0 1 -15 3 33 1 -7 1 -1 1 1.5 1 -12.5 1 -1 2 21 2 0 1 -2 2 5.5 2 -11.5 2 3 3 -17 2 -2 1 -6.5 1 0 2 17 1 -3 2 -1.5 2 5.5 2 -13.5 2 15 2 -37.5 2 25 3 -25 2 17.5 2 -14.5 3 18 2 -12 2 33.5 1 -3 1 7.5 2 -13 3 17.5 2 -17 2 -44 1 -2 4 55.5 3 -8.5 2 -23.5 1 8 1 0.5 1 -1 1 4.5 1 -6.5 1 0.5 3 25 5 -61 3 38 4 29 6 -70.5 3 46.5 1 3.5 2 -7.5 1 10 1 -1 2 -42 3 20.5 3 45 2 -17.5 2 5.5 1 -3 2 -29 5 59 1 -0.5 2 -34.5 1 2.5 2 -35 1 11.5 3 -27.5 2 23 1 1.5 1 -3 2 11 2 28 6 34 3 -68.5 3 18.5 2 -12.5 1 0 4 22 1 -8.5 2 22.5 3 -21.5 1 -3.5 1 0.5 3 -30 2 25.5 1 -2 3 -32.5 2 28.5 2 -12 1 -0.5 1 9.5 1 -1 2 8 3 30.5 3 -56.5 3 67.5 1 -13 1 -0.5 1 9.5 4 -44.5 3 31 2 -22 1 6 1 -15 3 28.5 1 -1 1 1 2 -5.5 1 1.5 2 -28 3 46.5 2 -11.5 3.5 13.5 2.5 14.5 2 -27.5 2 2.5 3 -19 1 0.5 1 10.5 2 -3 2 22 1 -15.5 2 -1.5 1 -5 2 46.5 -0.5 35 -1.5 17 -3 -6.5 -1 -8.5 -2 12 -4 7 -3 -13.5 -2 6 -2 -22 -1 0.5 -4 23 -2 -10 -1 0 -3 22.5 -3 -10.5 -2 2 -2 -8.5 -1 0 -2 15 -2 -1 -2 -5.5 -3 3 -3 -8.5 -1 -13 -2 8 -1 -6.5 -3 28 -3 -24.5 -4 19.5 -2 -4 -2 6.5 -2 -4 -2 10.5zM728.5 506l-3 -14.5 -2 -27.5 -3 27.5 -1 2.5 -1 -0.5 -3 -57 3 -57.5 5 46.5 5 -68.5 3 49 2 -2.5 1 33 -1 45.5 -1 0 -2 6 -2 18zM610.5 495.5l-3 -26 -2 18 -2 -15.5 -1 -0.5 -1 11.5 -2 4 -1 0.5 -2 -14 -1 10 -1 -1.5 -1 -15.5 -1 0 -1 4 -1 11.5 -2 -6.5 -1 4.5 -2 -45.5 2 -32.5 1 6.5 2 -17 2 26.5 1 -1.5 1 -25.5 2 21.5 2 -24.5 1 -1 4 27 2 -24 2 29.5 3 -45 3 46 1 -20.5 2 16.5 2 -29.5 1 0 2 30.5 5 -41.5 1 0.5 2 36.5 3 15.5 2 -6.5 4 -38 1 12.5 2 -3.5 2 22.5 2 -13 1 21.5 3 -47.5 3.5 59 -1 28 -2.5 30 -3 -30.5 -1 15.5 -2 -8 -2 13.5 -2 -4 -1 10 -6 -33 -6 38.5 -5 -27 -2 21 -3 -18.5 -1 0 -1 8 -1 -12 -3 28.5zM743.5 498.5l-2 -9.5 -1 3 -2 -16.5 -1 5 0 -1 -2 -43 2 -37 1 9.5 2 -33 1 11.5 2 -12 2 25.5 2 -9 4.5 44.5 -1.5 37 -3 16.5 -1 0.5 -1 -4 -2 12zM683.5 493.5l-2 -11 -2 8 -1 -6.5 -3 3 -1 -4 -1 4.5 -1 -0.5 -1 -18 -1 -0.5 -1 15.5 -2 7 -1 -9 -2 9 -2 -10.5 -1 4.5 -2 -10 -2 5 -2 11.5 -2 -56 2 -47.5 2 22 2 4 2 -13.5 1 6 2 -24.5 1 18 1 -1 1 -19.5 3 42 1 -2 1 -27 2 8 1 -10 2 11.5 1 0 1 -14 2 18 2 -25.5 3 56 -1 34 -2 23zM820.5 494.5l-1.5 -7 -1.5 -35 -2 23 -2 -27 -2 41.5 -1 -2.5 -2 -24 -0.5 -27 3.5 -45.5 2 42.5 2 -23.5 2 22.5 3 -52.5 1 0.5 2 38 1 0.5 2 -20 1 26 2 -24.5 2 12.5 3 -11.5 2 4.5 1 30.5 -0.5 35 -1.5 12.5 -1 1 -4 -6.5 -1 4 -2 -20 -1 17.5 -2 -11 -4 25.5zM790.5 491.5l-4 -18 -1 2.5 -1 -0.5 -2 7 -1 0 -2 -7.5 -2 -38.5 2 -27.5 1 2 2 -7 2 8.5 1 -2.5 1 2.5 4 -29 2 48 2 -19 1.5 24 -1 35 -0.5 2.5 -2 -21 -2 38.5zM691.5 491l-2 -21 -1 3.5 -0.5 -6 -1.5 -31 2 -27 1 8 2 -27.5 2 24.5 1 -4.5 2 23 3 -42.5 2 28 1 1 1 -8.5 2 5 1 -3 1 -15 2 3 1 -4 2 34.5 1 -11.5 2 16.5 -1 25 -1 5.5 -1 -14 -2 31 -3 0.5 -1 -10 -3 -2 -1 -7 -3 20.5 -3 -38 -1 22.5 -1 7 -1 -3 -2 16.5zM840.5 487.5l-1.5 -51 1.5 -43.5 2 30 1 -13.5 1.5 27 -1.5 40.5 -1 -9.5 -2 20zM803.5 482l-1 -0.5 -1 -16.5 -1 0 -2 10 -0.5 -20.5 0.5 -43 1 1 1 12.5 1 0 1 -23.5 1 1 2 33 -2 46.5zM849.5 485l-1.5 -48.5 1.5 -34.5 3 34.5 -3 48.5zM867.5 490.5l-1 -1 -3 -23.5 -0.5 -17.5 0.5 -21.5 1 -0.5 1 -8 1 -15.5 1 0.5 2 22 0 46.5 -2 18.5zM858.5 483l-1 -4.5 -1 1.5 -1 -3 -1 4.5 -1 -1.5 -0.5 -4.5 -0.5 -41 1 -27.5 1 -1.5 1 8 2 -0.5 1 -7 1 11.5 0.5 36 -1.5 29.5zM755.5 479.5l-2 -43 2 -29 2 29 -1 35 -1 8zM771.5 476l0 -67.5 2 20.5 1 4 2 -8.5 1 12 -1 27 -2 -13 -3 25.5zM759.5 467l-1.5 -32.5 1.5 -13 1 7.5 2 -8.5 1 16 -1 29 -1 0.5 -1 -7.5 -1 8.5zM766.5 462.5l0 -37 1 11 -1 26z"/><path fill="rgb(143,143,143)" fill-rule="evenodd" d="M469.5 501l-2 -8 -2 0 -1 -4 -2 -2.5 -2 -33.5 -1 1.5 -1 21 -1 3 -1 0 -2 10.5 -2 -4.5 -1 1.5 -1.5 -3.5 -2.5 -14 -2 19 -4 12 -3 -18.5 -2 5.5 -2 -3.5 -3 13 -6 -22 -1 -1 -6 20.5 -5 -17 -3 20.5 -4 -14.5 -2 -0.5 -1 -2.5 -2 3 -2 -8.5 -1 7 -4 6.5 -4 -18 -2 12.5 -1 0.5 -1 -3 -2 4.5 -1 -5.5 -2 11 -1 -1.5 -2 4 -2 -0.5 -2 1 -2 4.5 -3 -6.5 -2 6.5 -2 -10.5 -1 -1 -2 0.5 -2 -4 -3 7 -1 -2 -2 5.5 -2 -5.5 -2 1 -3 -4.5 -2 6 -2 -4 -1 1 -4 -10.5 -3 12 -4 -14 -2 12.5 -1 0 -2 -9 -3 9.5 -1 1 -2 -1 -1 2.5 -2 -8 -2 5 -2 -15 -2 11.5 -1 1 -3 -6 -2 8.5 -3 -0.5 -2 2.5 -2 -0.5 -2 4 -2 -3.5 -3 4.5 -4 -10.5 -3 -19.5 -3 17.5 -4 -3.5 -1 1 -2 -0.5 -3 7.5 -4 4.5 -3 -8 -2 4 -2 -2 -2 1 -4 -13 -2 5.5 -2 -0.5 -1 4 -5 -10.5 -1 2.5 -2 -2.5 -1 2 -1 1 -1 -1.5 -2 2 -2 -4.5 -3 -2 -1 3.5 -4 4 -2 -9.5 -2 6 -2 -1 -2 5 -3 -13 -2 14 -1 0.5 -1 -4 -3 2 -3 9 -4 -3.5 -3 4.5 -10 -18.5 -1 0 -3 12 -7 -0.5 -5 -6.5 -13 -1.5 -5 13 -7 2.5 -7 -1.5 -3 -2.5 -3 -5.5 -3 -10.5 -26 -8 -50 -8.5 -55 0 0 -23 56 -0.5 25 -8.5 11 -4.5 3 -2.5 3 0 15 -5 18 -44 6 -51 3 -9.5 5 -4.5 5 3 3.5 9 2.5 14.5 3 33 3 -2.5 10 29.5 1 1 1 -1.5 2 2 2 -4.5 2 0 1 1 4 13.5 2 18 1 1 1 -1 2 -5.5 5 -21 2 -15 3 7 1 -2.5 2 2.5 1 -1.5 2 19 4 11.5 1 -3.5 1 2 2 17.5 3 -9.5 2 3 2 -3 2 5 2 -7.5 5 10 3 -4.5 2 -7 2 3.5 3 2.5 2 -5 1 1.5 5 -22.5 1 9.5 2 3 2 10 1 -0.5 3 -18 2 -2 2 -7 2 4.5 3 -13.5 2 8.5 2 -0.5 6 18.5 2 1 1 2 1 -1 3 21 7 -35 1 -0.5 1 2.5 1 -1.5 2 -13.5 2 -0.5 2 -9 2 1 2 -3.5 3 28.5 2 0.5 1 -3 3 16.5 2 -38 2 6 2 -31 1 6 2 -9 4 46 1 0 1 -15.5 3 32 1 -7 1 -1.5 1 1 1 -12 1 -1 2 21 2 -0.5 1 -2.5 2 5 2 -11 2 4 3 -17 2 -2 1 -6.5 1 0.5 2 16.5 1 -3 2 -0.5 2 4.5 2 -13 2 13.5 2 -37.5 2 25 3 -25.5 2 17.5 2 -14 3 18 2 -10 2 33 1 -3.5 1 7 2 -12 3 20.5 5 -65.5 4 56 3 -9.5 2 -23 1 7.5 1 0.5 1 -1.5 1 4.5 1 -6.5 1 -0.5 3 27.5 5 -62 3 38.5 3 28 1 1.5 6 -71.5 3 48 1 3 2 -7.5 1 10 1 -1.5 2 -43 3 22.5 3 47.5 2 -21 2 4.5 1 -3 2 -27 2 31 2 7 1 23.5 1 1 1 -29 1 -10.5 1 1.5 2 -35 1 10.5 3 -27 2 24 1 1.5 1 -4.5 1.5 10 2.5 29.5 5 35.5 -1 22 -4.5 28 -2.5 11.5 -1 1 -2 -4 -2 7zM513.5 502.5l-1 0 -4 -12 -1 5.5 -1 -1.5 -2 0 -5 -23 -5 22 -2 0 -2 -5.5 -1 1 -1 -2.5 -2 4.5 -1.5 -13.5 -1 -42 2.5 -67.5 3 17.5 3 -12 4 22 1 -8.5 2 23.5 3 -22.5 2 -5.5 3 -27.5 2 24.5 1 -3 3 -32.5 2 29.5 2 -13.5 2 10 1 -1.5 2 9 3 33.5 3 -59.5 3 69.5 1 -14.5 2 12.5 4 -47.5 3 29.5 2 -22 1 6.5 1 -15 3 29 1 -1.5 1 0.5 1 -3.5 1 -1 1 1.5 2 -27.5 3 49 2 -14 1 1 4 29 1 1 2 -31 2 5 3 -21.5 1 1 1 10 2 -2 2 24 1 -17.5 2 -2.5 1 -5 2 41 -2 49 -3 -7.5 -1 -11 -2 14.5 -4 8 -3 -15.5 -2 7 -2 -37 -4 35 -1 3.5 -2 -12 -1 0 -3 26 -2 -9 -1 -2 -2 1.5 -2 -8.5 -1 0 -2 16 -1 -1 -1 0.5 -2 -6.5 -1 0 -2 4 -3 -9.5 -1 -16 -2 9.5 -1 -8 -3 32.5 -3 -27.5 -4 22 -2 -4 -2 7 -2 -4.5 -2 10.5zM728.5 504l-3 -16.5 -2 -46 -2.5 44 -1.5 5.5 -1 0 -2.5 -54.5 2.5 -51.5 5 49.5 5 -73 2 45.5 2 5 1 -2.5 0.5 27 -0.5 40.5 -1 0 -2 7 -2 20zM610.5 493l-3 -33 -2 23.5 -2 -18.5 -1 -0.5 -1 14.5 -2 4.5 -1 0.5 -2 -17 -1 13 -1 -1.5 -1 -20 -1 0.5 -1 5 -1 14.5 -2 -8.5 -1 5 -1 -39.5 1 -27 1 8 2 -19 2 29 1 -1 1 -28.5 2 23.5 2 -26.5 1 -1 2 10 1 18.5 1 1 2 -26.5 2 32 1 -3 2 -45 3 49 1 -23 1 17 1 1 2 -31 1 -0.5 2 34 5 -44.5 1 1 2 37.5 2.5 15 -0.5 22.5 -2 9.5 -2 23 -1 2 -5 -32.5 -2 26.5 -3 -22.5 -1 0 -1 11 -1 -18 -3 36zM743.5 496l-2 -10 -1 3.5 -2 -19 -1 6 -1.5 -40 1.5 -31 1 10 2 -34 1 11.5 2 -12.5 2 25.5 2 -8.5 4 39 -1 31 -3 19 -1 1 -1 -5 -2 13.5zM649.5 491l-3 -42 -1 25 -2 -10.5 -2 17.5 -2 -5 -1 11 -1 -2.5 -4 -32 -0.5 -17 3.5 -21 2 -25 1 13 2 -4 2 25 2 -15 1 24 3 -50 2.5 53 -2.5 55.5zM683.5 490.5l-2 -13 -2 10 -1 -7.5 -3 4 -1 -5 -1 4.5 -1 0 -1 -23 -1 -2 -1 21.5 -2 8 -1 -10 -2 10.5 -2 -13 -1 5 -2 -12.5 -4 19.5 -1.5 -52 1.5 -41.5 2 22.5 2 6 2 -16 1 5.5 2 -24.5 1 18 1 -0.5 1 -19.5 3 43.5 1 -1.5 1 -30 2 8.5 1 -9.5 2 11 1 -0.5 1 -13.5 2 17.5 2 -24.5 2.5 50 -0.5 31.5 -2 22.5zM820.5 491.5l-1.5 -14 -1.5 -41 3 -51.5 1 1 2 39.5 1 0.5 2 -21.5 1 28 1 -2.5 1 -24 2 12 3 -11 2 4.5 1 25 -0.5 33 -1.5 10.5 -1 0.5 -2 -5.5 -2 -1.5 -1 5 -2 -28 -1 26 -2 -14.5 -4 29.5zM790.5 489l-4 -22 -1 3.5 -1 -1 -2 8 -1 0.5 -1 -8 -1 -0.5 -1.5 -33 1.5 -19 1 1.5 2 -9.5 2 10.5 1 -2 1 3 4 -32.5 2 48 -0.5 38 -1.5 14.5zM691.5 488l-2 -26 -1 6 0 -2.5 -1 -30 1 -17.5 1 8 2 -31 2 27 1 -5 1.5 19.5 -0.5 28 -1 7 -1 -3.5 -2 20zM699.5 482.5l-1.5 -14 -1 -32 2.5 -40 2 30.5 1 2 1 -9.5 2 3.5 1 -2 1 -17.5 2 3 1 -4 2 34 -2 43.5 -1 -0.5 -2 1 -1 -12.5 -1 -1.5 -2 0 -1 -10.5 -3 26.5zM811.5 487l-3 -29.5 -0.5 -21 3.5 -40.5 2 40.5 -2 50.5zM840.5 484l-1.5 -47.5 1.5 -38.5 1 23.5 1 8.5 1 -14.5 1 21 -1 35.5 -1 -13.5 -2 25.5zM803.5 477.5l-1 -0.5 -1 -25 -1 -1 -2 17.5 -0.5 -13 0.5 -35.5 2 13 1 -0.5 1 -25 1 0.5 1 27.5 -1 42zM849.5 481l-1 -44.5 1 -29 2 29 -2 44.5zM867.5 487l-1 -1 -3 -36.5 0 -16 2 -9.5 1 -16.5 1 0.5 2 22.5 0 33 -2 23.5zM858.5 479l-1 -6 -1 2.5 -1 -4 -1 6 -1 -1.5 -0.5 -41.5 0.5 -23 1 -1 1 8.5 1 -1.5 1 1.5 1 -8.5 1 14 0.5 31 -1.5 23.5zM755.5 474.5l-1 -38 1 -22.5 1.5 22.5 -0.5 34 -1 4zM771.5 470.5l0 -54 2 20 -2 34zM815.5 469.5l-1.5 -33 1.5 -18 1 18 -1 33zM794.5 468.5l-1.5 -32 1.5 -16.5 1 16.5 -1 32zM713.5 458.5l0 -30.5 1 8.5 -1 22zM762.5 456.5l-1 -1 -0.5 -19 1.5 -7 0 27zM759.5 456l0 -26 0 26zM766.5 448.5l0 -15.5 0 15.5zM776.5 450.5l0 -18 0 18z"/><path fill="rgb(150,150,150)" fill-rule="evenodd" d="M441.5 497.5l-2 -18 -1 -1.5 -2 5.5 -2 -4 -3 15 -7 -26.5 -2 11.5 -4 12.5 -5 -20 -3 23.5 -2 -10.5 -5 -8 -2 2.5 -2 -9.5 -1 8.5 -3 7 -1 0 -4 -22 -2 15.5 -1 0.5 -1 -3.5 -2 5 -1 -5.5 -2 12 -1 -1.5 -2 4.5 -4 0.5 -2 4.5 -3 -6.5 -2 6.5 -2 -11 -1 -1.5 -2 0.5 -2 -4 -3 7.5 -1 -3 -2 6.5 -2 -5.5 -2 1 -3 -5.5 -2 6.5 -2 -4.5 -1.5 1 -3.5 -11 -3 13.5 -4 -15.5 -2 13.5 -1 0.5 -2 -10.5 -3 11 -1 1 -2 -1 -1 2.5 -2 -8.5 -2 5.5 -2 -17 -2 13 -1 1 -3 -7 -2 9.5 -3 0.5 -2 2.5 -2 -0.5 -2 4 -2 -3.5 -1 0.5 -2 4.5 -4 -12 -3 -23.5 -3 21 -1 -2 -3 -2 -1 2 -2 -1 -3 9 -4 4.5 -3 -8.5 -2 4 -2 -1.5 -2 0.5 -4 -15 -2 6.5 -2 0 -1 4.5 -5 -12.5 -1 2.5 -2 -2.5 -1 2.5 -1 0.5 -1 -1 -2 2.5 -2 -6 -3 -2 -1 4 -4 5 -2 -11.5 -2 7.5 -2 -1 -2 5.5 -3 -17 -2 18 -1 0.5 -1 -4.5 -3 3 -3 9.5 -4 -3 -3 4.5 -10 -21.5 -1 0 -3 14 -7 -0.5 -5 -7.5 -8 -2 -5 0 -2 9 -3 6 -4 3 -4 0 -6 -1.5 -3.5 -3.5 -2.5 -6 -3 -12 -17 -7 -9 -5.5 -16.5 -5.5 -6.5 -5 -1.5 -5 24.5 -9 9 -9.5 17 -44 6 -54 4 -13.5 4 -3 3 0.5 2 2.5 4 13.5 5 48 3 -1 10 26.5 2 -2 2 1 2 -4.5 3 1 4 13.5 2 19.5 1 0.5 3 -8 5 -21.5 2 -14.5 3 7.5 1 -3 2 2.5 1 -2 2 19.5 4 11 1 -3.5 1 1.5 2 19 3 -12 2 3.5 2 -2.5 2 6.5 2 -9.5 5 11 3 -4 2 -8 5 6.5 2 -5 1 2.5 5 -23 1 9 2 3 2 10.5 2 -5.5 2 -14.5 2 -1.5 2 -7 2 4.5 3 -14 2 9 2 0 6 19 2 0.5 1 1.5 1 -1 3 22 7 -37.5 1 -0.5 1 3 3 -15 2 0.5 2 -8 2 1.5 2 -2.5 3 28 2 0 1 -3.5 3 18 2 -38 2 6.5 2 -31 1 6.5 2 -8.5 4 45 1 -0.5 1 -16 3 31.5 1 -7.5 1 -1.5 1 1 1 -12.5 1 -0.5 2 21 2 -1 1 -2.5 2 4 2 -10 2 4.5 3 -17 2 -1.5 1 -6.5 1 0 2 16.5 1 -3 2 0.5 2 3 2 -11.5 2 11.5 2 -37.5 2 25 3 -26 2 17 2 -13 3 18.5 1 0 1 -8 2 32 1 -4 1 7 1 -1.5 1 -9.5 3 24 5 -68 4 56.5 3 -12 2 -22 1 6.5 1 1 1 -1.5 1 4.5 2 -8 3 30 5 -63 6 70.5 1 0.5 6 -75 3 49.5 1 2.5 2 -7 1 9 1 -1.5 2 -43.5 3 23.5 3 50.5 2 -24 1 0 1 2.5 1 -2 2 -25.5 2 30 2 8 1 24.5 -1 35.5 -1 4 -1 -0.5 -2 12.5 -2 -5.5 -1 1.5 -2 -5 -2 -16.5 -2 23 -4 13zM469.5 499.5l-2 -8.5 -2 0 -3 -7.5 -2 -48 1 -32 1 -8.5 1 0.5 2 -34 1 9.5 3 -27.5 2 25 1 1 1 -4.5 2 10.5 5.5 60 -0.5 17.5 -3.5 30.5 -2.5 12 -1 0.5 -2 -3.5 -2 7zM513.5 501l-1 0 -4 -13 -1 5.5 -3.5 -3 -4.5 -25 -2 15 -1 -2.5 -2 12.5 -2 0 -2 -5.5 -1 1 -1 -3 -2 5.5 -1.5 -15 -0.5 -38 2 -61 3 16 3 -11 4 21.5 1 -8.5 2 26.5 3 -25.5 2.5 -9 2.5 -23 2 22.5 1 -3.5 3 -32.5 2 30 2 -13.5 2 10.5 1 -2 2 9.5 3 37.5 3 -63 3 71 1 -13.5 2 13 1 -23.5 3 -26.5 3 27.5 2 -21 1 6 1 -14 3 30 3 -5.5 2 0 2 -26 3 51 1 -0.5 1 -14 1 -1.5 3.5 26 -0.5 19.5 -2 17.5 -1 4.5 -2 -16 -1 0 -3 32 -2 -10 -1 -2.5 -2 2.5 -2 -10 -1 0.5 -2 18 -1 -2 -1 1 -2 -7.5 -1 0 -2 5 -3 -10.5 -1 -21.5 -2 13.5 -1 -11.5 -3 39 -3 -32 -4 26.5 -1 0 -1 -4 -2 7.5 -2 -5 -2 11zM728.5 501.5l-3 -18 -1.5 -47 4.5 -70.5 2 45.5 2 8.5 1 -2 0.5 18.5 -0.5 34.5 -1 -1 -2 9 -2 22.5zM610.5 490l-2.5 -54.5 2.5 -50 2.5 50 -2.5 54.5zM743.5 493.5l-2 -10.5 -1 3.5 -2 -22.5 -1 7.5 -1 -35 1 -24 1 11 2 -36.5 1 11.5 2 -12.5 2 25 2 -8.5 3.5 34 -0.5 21.5 -3 25 -1 0.5 -1 -5.5 -2 15.5zM626.5 489.5l-4 -25 -1 -29 5 -47.5 1 1 2 39 1.5 7.5 -2.5 43 -2 11zM649.5 488l-1.5 -15.5 -1 -37 2.5 -47.5 2 47.5 -2 52.5zM667.5 485l-1 -12 -2 12.5 -2 -16 -1 5.5 -2 -19.5 -4 28 -1.5 -48 1.5 -35 2 23.5 2 6.5 2 -17.5 1 7 2 -27.5 1 18.5 1 0.5 1 -20 3 45 -1 38 -2 10.5zM719.5 488l-1 -0.5 -1 -9.5 -1 -28.5 2 -58.5 2 13 2 31.5 -0.5 31 -2.5 21.5zM820.5 489l-1.5 -13.5 -1 -39 2.5 -46 1 1 2 40.5 1 1.5 2 -24 1 27 -1 36 -2 -24 -4 40.5zM683.5 487l-2 -15.5 -2 12.5 -1 -9 -3 5 -1 -6 -1 5.5 -1 0.5 -1 -44.5 1 -32.5 2 10 1 -11 2 10.5 1 0 1 -13.5 2 19.5 2 -26 2 44 -0.5 30 -1.5 20.5zM573.5 485.5l-3 -18.5 -2 8.5 -1.5 -40 1.5 -26.5 2 8.5 3 -25 1 1 1 9.5 2 -1 2 26 1 -19 3 -9 1.5 35.5 -1.5 45.5 -3 -8.5 -1 -15.5 -2 19.5 -4 9zM790.5 486.5l-2 -9 -2 -21 -1 6 -1 -1.5 -2 11 -1 0 -1 -10.5 -1 0 -0.5 -25 0.5 -10 1 1 2 -10.5 2 11 1 -2 1 4 4 -36 2 42.5 -0.5 37 -1.5 13zM638.5 484l-3 -25.5 -0.5 -23 3.5 -40.5 1 14.5 2 -5.5 2 27.5 2 -14.5 0.5 18.5 -0.5 33 -2 -16.5 -2 25 -2 -5.5 -1 12.5zM605.5 479.5l-2 -26 -1 -0.5 -1 21.5 -2 5.5 -1 0.5 -2 -22.5 -1 17.5 -1 -1 -1 -39 1 -32 1 2 1 23 2 -28.5 1 -0.5 2 9 1 22 1 0 2 -28.5 2 33.5 -2 44zM619.5 483l-3 -32 -1 0.5 -1 18 -1 -34 1 -20.5 1 16.5 1 0.5 2 -33 1 -0.5 2 37 -2 47.5zM691.5 484.5l-1.5 -13 -0.5 -33.5 -1 22 -0.5 -24.5 0.5 -9 1 9 2 -35 2 29 1 -4.5 1 11.5 -1 27 -1 -5 -2 26zM811.5 483.5l-1.5 -10 -1 -37 2.5 -35.5 1.5 35.5 -1.5 47zM699.5 478.5l-2 -42 2 -34 2 33 -2 43zM840.5 480.5l-1 -44 1 -33 1.5 33 -1.5 44zM590.5 474l-2 -11 -1 6.5 -0.5 -34 0.5 -18.5 1 7.5 2 -21 2 32 -2 38.5zM710.5 475.5l-1 -1 -2 1 -1 -17.5 -1 -2 -2 1.5 -0.5 -22 0.5 -7.5 2 2.5 1 -1.5 1 -19.5 2 3 1 -4.5 1.5 28.5 -1.5 39zM834.5 475.5l-2 -7.5 -1 0 -1 -2 -1 8 -1 -37.5 1 -25 1 13 2 -0.5 2 -11.5 2 6.5 0 47.5 -1 8.5 -1 0.5zM867.5 483l-1.5 -8.5 -1 -38 1.5 -24 1 -0.5 2 24.5 -2 46.5zM849.5 476.5l0 -64 1.5 24 -1.5 40zM803.5 472.5l-1 -0.5 -0.5 -18.5 0.5 -39 1 0 1 20 -1 38zM858.5 474l-1 -8.5 -1 4 -1 -5 -1 8 -1 -1.5 -0.5 -36.5 0.5 -16.5 1 -2 1 10 1 -2.5 1 2.5 1 -9.5 1 20 -1 37.5zM755.5 467.5l0 -45.5 1.5 14.5 -1.5 31zM843.5 465.5l-1 -29 1 -13 0 42zM771.5 463l0 -38 1 11.5 -1 26.5zM794.5 460.5l0 -33 0 33zM815.5 461l-1 -24.5 1 -9.5 0 34zM798.5 459.5l0 -31 1.5 8 -1.5 23z"/><path fill="rgb(156,156,156)" fill-rule="evenodd" d="M441.5 496l-3 -21.5 -2 6 -2 -4.5 -3 16.5 -4 -16 -2 -14.5 -1 -1 -2 15.5 -4 13.5 -5 -23 -3 26 -2 -10.5 -2 -4 -2 -0.5 -2 -4 -1 2.5 -2 -12 -1.5 12 -2.5 7 -1 0.5 -4 -29.5 -2 20.5 -1 1.5 -1 -4 -2 5.5 -1 -6.5 -2 14 -1 -1.5 -2 4.5 -4 1 -2 5 -3 -7 -2 6.5 -2 -12 -1 -1.5 -2 0.5 -2 -4.5 -3 7.5 -1 -2.5 -2 6.5 -2 -5.5 -2 1 -3 -6.5 -2 7 -2 -5 -1.5 1.5 -3.5 -11.5 -3 14.5 -1 -6 -2 -3.5 -1 -8 -2 16 -1 0 -2 -11.5 -3 12 -1 1.5 -2 -1 -1 2.5 -2 -9.5 -2 6.5 -2 -20 -2 15 -1 1.5 -3 -8 -2 11 -3 0.5 -2 3 -2 -0.5 -2 4 -2 -3.5 -1 0.5 -2 4.5 -4.5 -16 -2.5 -35.5 -2.5 34.5 -0.5 1 -1 -2.5 -1 0.5 -2 -2 -1 2 -2 -0.5 -3 9.5 -4 5 -3 -9 -2 4.5 -2 -2 -2 0.5 -4 -18 -2 8.5 -2 0 -1 5 -5 -15.5 -1 3.5 -2 -3.5 -1 3.5 -1 1 -1 -1.5 -2 3 -2 -7.5 -3 -3 -1 6 -4 6 -2 -15 -2 10 -2 -1.5 -2 7 -3 -31 -2 32.5 -1 0 -1 -5 -3 3.5 -3 11.5 -4 -4 -3 5 -5 -10.5 -5 -15.5 -1 0 -3 18 -3 0.5 -2 -1.5 -2 0.5 -5 -9.5 -4 0 -5 -2.5 -4 1 -2.5 12 -3.5 6.5 -5 2.5 -8 -2 -3 -3 -2.5 -6 -3.5 -17.5 -9 -5.5 -5 -5 -2.5 -5 -1 -6 9.5 -17 8 -23 4 -57.5 3 -17.5 4 -11 2 -2.5 3 0 5 10 4 21.5 3 38 3 5 2 8 4 3.5 4 9.5 2 -5.5 2 -1 2 -4 3 1 3 8 3 26.5 1 0.5 8 -31.5 2 -14.5 3 7.5 1 -3 2 2.5 1 -2 2 19 4 12 1 -5 1 1.5 2 21 3 -14.5 2 5 2 -2.5 2 7 2 -11.5 5 12 3 -3 2 -9 5 7.5 2 -4.5 1 3 5 -24.5 1 9 2 2.5 2 12 4 -22 2 -1.5 2 -7 2 4.5 3 -14.5 2 9.5 2 0.5 3 12 3 7 3 2 1 -1 3 22.5 7 -40 1 0 1 3 3 -15 2 2 2 -8 2 2.5 2 -1.5 1 3 2 24.5 2 -1 1 -3.5 3 21 2 -40 2 7.5 2 -31 1 7 2 -8 4 44.5 1 -1 1 -16.5 3 33 1 -10.5 2 -1 1 -12 1 -0.5 2 21.5 3 -5 2 4 2 -9.5 2 4.5 3 -16.5 2 -1 1 -6.5 1 -0.5 2 16 1 -3 2 1.5 1 3 1 -0.5 2 -11 2 10.5 2 -38 2 24.5 3 -25.5 2 16.5 2 -12.5 2 15 2 5 1 -7.5 2 32 1 -5 1 6.5 1 -0.5 1 -9 3 27 5 -70 4 59 3.5 -19 1.5 -18.5 1 6 1 1 1 -1.5 1 4 2 -8 3 34 5 -66 6 74 1 0 6 -78.5 3 51 1 2 2 -6.5 1 8.5 1 -2 2 -43.5 3 24 3 53.5 2 -27 1 -1 1 2 1 -2 2 -24 2 30 2 9.5 0.5 33 -1.5 19 -1 0 -2 13.5 -5 -10 -2 -24.5 -2 32 -4 14.5zM469.5 498l-2 -8.5 -2 0 -3 -9.5 -1.5 -44.5 1 -30 0.5 -5.5 1 -0.5 2 -33 1 9 3 -28 2 26 1 0.5 1 -4.5 2 12 4 54 -0.5 26 -2 20 -2.5 12 -1 1 -2 -4 -2 7.5zM513.5 499.5l-1 -0.5 -4 -14 -1 6 -1 -2 -2 0 -1 -3 -4 -29.5 -2 20.5 -1 -3 -2 13.5 -2 0 -2 -6.5 -1 2 -1 -3.5 -2 6.5 -1.5 -14.5 -0.5 -36 2 -54.5 2 14.5 1 0.5 3 -10 4 21.5 1 -9 2 29 8 -59.5 1 19.5 1 1.5 4 -36.5 2 30 2 -13.5 2 11 1 -2.5 2 10 3 41 3 -65.5 3 72.5 -1.5 43 -1.5 16 -3 -39 -1 16.5 -2.5 16.5 -1.5 1 -1 -4 -2 8 -2 -5.5 -2 11.5zM728.5 499l-3 -20 -1 -42.5 4 -65.5 2 47 2 10.5 1 -2 0 10 0 25.5 -1 -2 -4 39zM555.5 490l-3 -14 -2 2.5 -2 -10.5 -1 0.5 -2 20.5 -1 -2 -1 1 -2 -9.5 -1 0.5 -2 6 -3 -11.5 -1 -38 1 -26 3 -26 3 26 2 -20.5 1 5.5 1 -13 3 33.5 1 -7 2 -2.5 2 0 2 -24.5 3 54.5 -0.5 31 -2.5 23.5zM610.5 487l-2 -51.5 2 -44 2 44 -2 51.5zM743.5 490.5l-2 -11.5 -1 5 -2 -31 -1 12.5 -0.5 -29 0.5 -15.5 1 10.5 2 -39 1 11.5 2 -12.5 2 26 2 -9.5 2 28.5 -2 42 -1 0.5 -1 -6.5 -2 18zM626.5 486l-3.5 -22.5 -1 -28 4.5 -41.5 1 1.5 2 40 -1 33 -2 17.5zM649.5 485l-1.5 -14.5 -0.5 -35 2 -41.5 2 41.5 -2 49.5zM820.5 485.5l-1.5 -12 -0.5 -37 2 -40.5 1 1.5 2 39 -1.5 36 -1.5 13zM664.5 482l-2 -22 -1 8 -0.5 -5.5 -1 -28 1.5 -13 1 6.5 2 -30 1 20.5 1 1.5 1 -22.5 2.5 36 -0.5 31 -2 17 -1 -14.5 -1 1.5 -1 13.5zM719.5 484l-1 0 -1 -9.5 -0.5 -24 1.5 -54 2 12.5 1.5 26.5 -1 34 -1.5 14.5zM573.5 481.5l-3 -24 -2 12 -1 -34 1 -18.5 2 10 3 -28.5 2 10 2 2.5 1.5 24.5 -1.5 36 -4 10zM683.5 483.5l-2 -20 -2 16.5 -1 -11 -3 6.5 -1 -8.5 -2 8.5 -0.5 -40 0.5 -26.5 2 12 1 -12.5 2 11.5 1 0.5 1 -16.5 2 22 2 -27.5 2 38 -2 47zM790.5 483l-2 -13.5 -1.5 -33 3.5 -37.5 1.5 37.5 -1.5 46.5zM638.5 480.5l-1.5 -10 -1 -35 2.5 -34.5 1 17 2 -8.5 1.5 26 -1.5 37.5 -2 -7 -1 14.5zM619.5 478.5l-1.5 -11 -1 -32 1.5 -30 1 -1 1.5 31 -1.5 43zM583.5 477l-3 -10.5 -1 -31 1 -17 3 -13 1.5 30 -1.5 41.5zM598.5 475.5l-1.5 -40 1.5 -29.5 1 -0.5 2 11.5 0.5 32.5 -0.5 19 -3 7zM655.5 478.5l-1 -43 1 -29 2.5 30 -2.5 42zM691.5 480.5l-1.5 -44 1.5 -31 2 31 -2 44zM811.5 479.5l-1.5 -11 -0.5 -32 2 -30 1.5 30 -1.5 43zM605.5 474.5l-1.5 -39 1.5 -26.5 1.5 26.5 -1.5 39zM699.5 473.5l-1.5 -37 1.5 -27.5 1.5 26.5 -1.5 38zM840.5 476.5l0 -68 1 28 -1 40zM590.5 469.5l-2 -21.5 -1 13.5 -0.5 -26 0.5 -10 1 7 1 -4.5 1 -15.5 1 23 -1 34zM595.5 470.5l-1 -1 -0.5 -17 0.5 -40.5 1 1.5 1 21 -1 36zM710.5 470.5l-1 -2.5 -1 2 -1 0 -1 -33.5 1 -18.5 2 3 1 -5 1 20.5 -1 34zM561.5 471.5l-1.5 -10 -0.5 -26 2 -18.5 2.5 18.5 -0.5 22 -2 14zM826.5 468l-1.5 -31.5 1.5 -20 0 51.5zM867.5 478l-1.5 -7.5 -0.5 -34 1 -19.5 1 -0.5 1 20 -1 41.5zM835.5 468.5l-1 0.5 -2 -13 -1 1 -1 -3.5 -1 15 0 -49 1 12.5 2 -0.5 2 -10.5 2 6 0 32.5 -1 9zM849.5 470.5l0 -50.5 1 16.5 -1 34zM532.5 463l-1 -27.5 1 -12.5 1.5 12.5 -1.5 27.5zM803.5 466l-1 -1 -0.5 -28.5 0.5 -13.5 1 0 0 43zM858.5 467.5l-1 -15 -1 8 -1 -8.5 -1 14.5 -1 -2 -0.5 -30 1.5 -11.5 1 10 1 -3.5 1 3.5 1 -9 0 43.5zM614.5 462.5l0 -39 0 39zM645.5 461l-1.5 -25.5 1.5 -10.5 0 36zM782.5 464.5l-1 0 0 -3 -1 -25 2 -11.5 2 11.5 -2 28zM755.5 456.5l0 -26 1 6 -1 20zM843.5 455l0 -24 0 24zM694.5 449.5l0 -16.5 0 16.5zM771.5 446.5l0 -12.5 0 12.5zM785.5 441l0 -6 0 6z"/><path fill="rgb(163,163,163)" fill-rule="evenodd" d="M150.5 480.5l-3 0.5 -6 -1 -5 -6.5 -3 -11 -3.5 -30 1.5 -5.5 1.5 -53.5 2.5 -33 4.5 -23 2.5 -5.5 3 -3 3 1.5 2 3.5 4 14.5 4 38 1 31.5 5 12 1 -2.5 2 1 1 -2 4 5.5 2.5 -11.5 3.5 -6 3 0.5 4 13 2 23.5 1 0 3 -9 7 -39 3 7.5 1 -2.5 2 2 1 -2 3 24.5 3 8 1 -6.5 1 1.5 1.5 16.5 -1.5 33.5 -1 0 -1 -6 -3 5 -3 13 -4 -4 -3 5 -5.5 -14.5 -4.5 -25 -1 0.5 -3 30 -3 1 -2 -1.5 -2 0 -2.5 -4 -2.5 -8 -4 -0.5 -4 -4 -5 2 -3 17.5 -2.5 5 -3.5 3zM441.5 494l-3 -23.5 -2 6.5 -2 -5 -2 17.5 -1 1.5 -4 -18.5 -2 -23.5 -1 -2 -2 25 -4 16 -5 -28 -3 31 -2 -11 -2 -4 -2 0 -2 -5.5 -1 2 -2 -15.5 -1 15.5 -3 9.5 -1 -0.5 -2.5 -23 -1 -25 3.5 -66.5 1 -3 4 61.5 5 -41 1 5.5 1 1 1 -1.5 1 3.5 2 -8.5 3 39 5 -68.5 6 76.5 1 0 6 -81.5 3 52 1 1 2 -6.5 1 10.5 3 -47.5 4 38.5 1.5 35.5 0 27 -2 21 -3.5 12.5zM469.5 496l-2 -8.5 -2 0 -3 -11.5 -1 -40.5 4 -63.5 1 8 3 -28 2 26.5 1 0.5 1 -5 2 11.5 3.5 50 -0.5 27 -2 18 -2 11 -1 1 -2 -4.5 -2 8zM513.5 497.5l-1 0 -4 -15.5 -1 6.5 -1 -2.5 -2 -0.5 -1 -3 -2 -23.5 -1 -0.5 -1 -23 3 -30 3 -12.5 2 -18.5 1 19 1 0 4 -35.5 2 29 2 -13.5 2 11.5 1 -3.5 2 11 3 43 -1 28 -2 20 -1 4 -1 0 -1 -4 -2 8 -2 -6 -2 12zM372.5 493l-3 -7.5 -2 7 -2 -13 -1 -1.5 -2 0.5 -2 -6 -3 9 -1 -3 -2 7.5 -2 -6.5 -2 1.5 -3 -8 -2 8 -2 -5.5 -1 2.5 -0.5 -1.5 -3.5 -12.5 -3 17 -1 -6.5 -2 -4.5 -1 -10 -2 19.5 -1 0 -2 -14 -3 14.5 -1 2 -2 -1.5 -1 3 -2 -10.5 -2 7 -0.5 -1.5 -1.5 -23.5 -2 19.5 -1 1.5 -3 -9 -2 12.5 -3 0.5 -2 3.5 -2 -0.5 -2 4.5 -2 -4 -1 0.5 -2 5 -4.5 -17.5 -2 -37 6.5 -39.5 2 3.5 3 -14 2 2 2 -7 2 3 2 -0.5 3 29 3 -8 3 24 2 -41 2 8 2 -30.5 1 6.5 2 -7.5 4 47.5 2 -22 1 3.5 2 31 1 -12 2 -2.5 1 -12 1 0.5 2 23 3 -7.5 1 -0.5 1 3.5 2 -9 2 5.5 3 -16.5 2 -0.5 1 -7 1 0 2 15.5 1 -3 3 5.5 1 -1.5 2 -10.5 2 9 2 -38 2 24.5 3 -26 2 17 2 -11.5 4 20.5 1 -7 2 34 1 -8 2 8.5 1 -10.5 1 4 2 23.5 -0.5 17 -1.5 20.5 -1 1.5 -1 -5 -2 6.5 -1 -7.5 -2 16.5 -1 -1.5 -2 5.5 -4 1 -2 5zM528.5 492.5l-2.5 -57 2.5 -66.5 2.5 66.5 -1 40 -1.5 17zM728.5 496.5l-3 -23.5 -0.5 -36.5 3.5 -60 3.5 60 -3.5 60zM267.5 485l-3 -9.5 -2 4.5 -2 -2 -2 0.5 -4 -23 -2 11.5 -2 0.5 -1 5.5 -2.5 -6.5 -2.5 -13.5 -1 5 -2 -5.5 -1 5 -1 2 -1 -2 -2 4.5 -2 -12 -1 0 -2 -8.5 -1 14 -4 8 -2 -30 2 -13 5 11.5 3 -2.5 2 -8 5 7.5 2 -4.5 1 3.5 5 -26 1 9 2 2.5 2 13 4 -24.5 2 -1.5 2 -6.5 2 5 3 -15 2 9 2 1.5 6 20.5 2 -0.5 1 1.5 1 -2 2 20.5 -2 36 -1 -2.5 -1 0.5 -2 -2.5 -1 3 -2 -0.5 -3 10.5 -4 6zM454.5 481.5l-2 -7 -1 1.5 -1 -2 -1 -5 -1.5 -34.5 1.5 -22 1 -4.5 1 1.5 1 -1.5 2 -22.5 4.5 50 -0.5 22 -4 24zM493.5 484.5l-3 -7.5 -1 2.5 -1 -3.5 -2 7 -1 -8 -0.5 -41.5 1.5 -46 2 14 2 0 2 -9.5 4 24 1 -10.5 1.5 29 -1 30 -0.5 8 -1 -4.5 -2 16 -1 0.5zM555.5 486.5l-3 -16 -2 4 -1 -3.5 -1 -10 -1 1 -2 24.5 -1 -2.5 -1 1 -2 -11 -1 0 -2 8.5 -3 -14 -0.5 -45 3.5 -34.5 3 26 2 -21 1 5 1 -12.5 3 37 1 -8.5 2 -2.5 1 2.5 1 -3 2 -25 2.5 48.5 -0.5 32 -2 19zM610.5 483.5l-1.5 -48 1.5 -38.5 1.5 38.5 -1.5 48zM743.5 487l-2 -12.5 -1 6 -1.5 -44 1.5 -38.5 1 12 2 -13 2 28.5 2 -11 1 22 -1 37 -1 0 -1 -8.5 -2 22zM626.5 482l-3 -22.5 -0.5 -24 3.5 -35.5 1 1.5 1.5 34 -0.5 32 -2 14.5zM649.5 481l-1.5 -12.5 -0.5 -33 2 -36 1.5 36 -1.5 45.5zM820.5 482l-1.5 -10.5 -0.5 -35 2 -35 1 1.5 1.5 33.5 -1 34 -1.5 11.5zM664.5 478.5l-2 -45 2 -30 1 23 1 2 1 -25 2 30 0 26 -2 18 -1 -20 -2 21zM719.5 480l-1 0 -1.5 -28.5 1.5 -49 2 12 1 20 -0.5 32 -1.5 13.5zM573.5 477.5l-2 -17 -1 -25 3 -31 2 11.5 2 4.5 0.5 15 -0.5 29 -4 13zM790.5 479.5l-2 -14 -0.5 -29 2.5 -32.5 1.5 32.5 -1.5 43zM683.5 479l-2 -35.5 -2 32 -1 -15.5 -3 9.5 -1 -12.5 -2 13 -0.5 -34.5 0.5 -18 2 12 1 -12.5 3 11 1 -18.5 2 24.5 2 -29.5 1.5 32 -1.5 42.5zM638.5 476.5l-1 -10 -1 -31 2 -29 1 20.5 2 -9.5 1 18 -1 32 -2 -10 -1 19zM619.5 473.5l-1.5 -9 -0.5 -29 2 -24 1.5 24 -1.5 38zM691.5 475.5l-1.5 -39 1.5 -25 1.5 25 -1.5 39zM583.5 472l-3 -14.5 -0.5 -22 0.5 -8 3 -15.5 1 23.5 -1 36.5zM811.5 475l-1.5 -38.5 1.5 -25 1 25 -1 38.5zM599.5 469.5l-1 0.5 -1 -34.5 1 -20.5 1 -0.5 2.5 21 -0.5 25.5 -2 8.5zM655.5 473l0 -58 1.5 21.5 -1.5 36.5zM840.5 472l0 -57 0 57zM605.5 468.5l-1 -33 1 -17.5 1 17.5 -1 33zM699.5 467.5l-1 -31 1 -18.5 1 18.5 -1 31zM595.5 463.5l-1 -0.5 0 -6.5 0 -35.5 1 1.5 0.5 11 -0.5 30zM218.5 464l-2 -30.5 2 -12 2 6 2 -2 1.5 8 -1.5 23.5 -2 -2 -2 9zM590.5 463l-1 -27.5 1 -14 0 41.5zM867.5 471.5l-1 -2 -0.5 -33 0.5 -13 1 -1 0 49zM710.5 463.5l-1 -5.5 -1 3.5 -1 0 -0.5 -25 0.5 -10 2 2.5 1 -4.5 0 39zM826.5 462l-1 -25.5 1 -12 0 37.5zM561.5 464l-1.5 -28.5 1.5 -11 1.5 11 -1.5 28.5zM568.5 462l0 -37 1.5 10.5 -1.5 26.5zM829.5 460.5l0 -33 0 33zM849.5 462.5l0 -35 0 35zM835.5 459.5l-1 -0.5 -1 -12.5 1 -17 1 0 1 6 -1 24zM661.5 457l0 -27 0 27zM737.5 455.5l0 -25.5 0 25.5zM854.5 457.5l-1 -21 1 -6.5 0 27.5zM532.5 451l0 -20 0 20zM803.5 454.5l-1 -1 0 -17 0 -5 1 -0.5 0 23.5zM858.5 457l0 -26 0 26zM614.5 449l0 -17 0 17zM782.5 449.5l-1 -1.5 0 -11.5 1 -3.5 0 16.5zM645.5 443.5l0 -9.5 0 9.5z"/><path fill="rgb(169,169,169)" fill-rule="evenodd" d="M149.5 479.5l-8 -1 -5 -7 -3 -13 -1 -19 1 -65 2 -24.5 4 -24.5 3 -8 3 -3 3 1.5 2 3.5 5 21 3 34 1 51.5 3 6.5 -1 7 -2 4 -3 26.5 -3 6.5 -4 3zM441.5 491.5l-3 -26 -2 7 -2 -5.5 -2 20.5 -1 1.5 -5 -28.5 -0.5 -27 5.5 -77 3 55 3 -7 1 11 3 -50.5 3 25 2.5 42.5 -0.5 23 -1.5 23 -3.5 13zM469.5 494.5l-2 -9 -2 -0.5 -3 -14 -1 -35.5 4 -58 1 7 3 -27.5 2 26 1 0.5 1 -5 1.5 9 3.5 48 -2 43 -2 11 -1 1 -2 -4.5 -2 8.5zM410.5 488.5l-2 -11 -2 -4 -2 0 -2 -7 -1 2 -2 -36 5 -42.5 1 5 1 0.5 1 -1 1 3 2 -8.5 3 43.5 5 -71.5 5.5 72.5 -1 27 -1 12 -3.5 13.5 -2.5 -14.5 -2.5 -26.5 -3 43.5zM513.5 495.5l-1 0 -4 -17 -1 7.5 -1 -3.5 -2 -0.5 -1 -3.5 -2 -43 2 -30.5 2 -6.5 2 -17.5 1 18 1 -1 4 -35 2 28.5 2 -13.5 2 11.5 1 -3.5 2 10.5 2.5 39 -0.5 23 -2.5 24 -0.5 3 -1 0 -1 -4.5 -2 8.5 -2 -6.5 -2 12.5zM372.5 491.5l-3 -7.5 -2 7 -2 -14 -1 -2 -2 0.5 -2 -7 -3 9.5 -1 -3.5 -2 8.5 -2 -6.5 -2 1.5 -3 -10 -2 9.5 -2 -6.5 -1 3 -1 -2.5 -3 -14 -3 21 -1 -8 -2 -5 -1 -14.5 -2 25.5 -1 0 -2 -17 -4 20 -2 -1.5 -1 3.5 -2 -12 -2 7.5 -2 -27.5 1 -42 1 -16 2 9 2 -30.5 1 7 2 -7 4 50 2 -26.5 1 3.5 2 32.5 4 -29 1 0.5 2 25 4 -11 1 4 2 -9 2 7.5 3 -18 2 -0.5 1 -6.5 1 -0.5 2 15.5 1 -3 3 7.5 3 -13.5 2 7.5 2 -37 2 23.5 3 -25.5 2 16.5 2 -11 4 21.5 1 -6.5 2 36 1 -10 2 10 1 -10 1 4.5 1 32.5 -1.5 16 -0.5 1.5 -1 -7 -2 9 -1 -9.5 -2 20 -1 -1.5 -2 6 -4 1.5 -2 5zM395.5 479.5l-1 0 -1.5 -13 -1 -32 2.5 -61.5 1 -2.5 4 64 -1 32.5 -3 12.5zM528.5 490l-2 -54.5 2 -61 2 61 -0.5 37 -1.5 17.5zM728.5 494l-3 -29 -0.5 -28.5 3.5 -54.5 2 54.5 -2 57.5zM291.5 487.5l-4 -18 -2 -37 6 -35 2 3.5 3 -13.5 2 2.5 2 -6.5 2 4.5 2 0 1 2.5 2 28.5 3 -11.5 1 3.5 2 23.5 -2 34 -1 4 -3 -11 -2 15 -3 1.5 -2 3.5 -2 0 -2 4.5 -2 -4 -1 0.5 -2 5zM198.5 477l-5.5 -17.5 -2.5 -26 8 -45.5 3 8 1 -3 2 2 1 -2.5 3 27 3 7.5 1 -6.5 1 1 1 12 -1 27.5 -1 0.5 -1 -9 -3 7.5 -3 15.5 -4 -4 -3 5.5zM267.5 483.5l-3 -10.5 -2 5 -2 -2.5 -2 0.5 -2.5 -18.5 -1.5 -24 4 -28 2 -1.5 2 -7 2 5.5 3 -15 2 9 2 2 3 15.5 2 2 1 5.5 2 -1 1 1 1 -3 1.5 16 -1.5 32 -1 -3.5 -1 0.5 -2 -2.5 -1 3.5 -2 0 -3 12 -4 7zM454.5 478.5l-2 -8.5 -1 2 -1 -2.5 -1 -7 -0.5 -28 0.5 -13.5 1 -5.5 2 -1.5 2 -22 2 33 2 10.5 -1 21 -1 2 -2 20zM555.5 483l-3 -20 -2 5.5 -1 -4 -1 -18 -3 37 -1 -3 -1 1 -2 -13.5 -1 0.5 -2 10.5 -2.5 -14.5 -0.5 -39 3 -30.5 3 26.5 2 -22.5 1 5 1 -12 2 38 1 2.5 2 -12.5 2 3.5 1 -3.5 2 -26.5 2 42 -2 47.5zM493.5 481l-3 -8.5 -1 2.5 -1 -4 -2 8.5 -1 -9.5 -0.5 -36.5 1.5 -39.5 2 15.5 1 -2.5 1 2 2 -10.5 4 26 1 -10 0 53 -1 -7 -2 19.5 -1 1zM181.5 467.5l-2 -1.5 -1.5 0.5 -1.5 -2 -4 -16.5 -4 -1 -3 -11.5 0 -5 3 -6 4 1 3 -18 3 -6.5 1 0.5 2 -0.5 3 7 2 23.5 -1 31.5 -1 3 -3 1.5zM610.5 479.5l-1.5 -44 1.5 -33 1.5 33 -1.5 44zM743.5 483.5l-2 -14.5 -1 8 -1 -40.5 1 -33 1 14.5 2 -15.5 2 30.5 2 -10.5 0.5 14 -0.5 30.5 -1 0 -1 -16.5 -2 33zM649.5 477l-1.5 -41.5 1.5 -30 1 30 -1 41.5zM249.5 470l-3 -11.5 -1.5 -25 3.5 -25 1 -2.5 1 11 2 2.5 2 14 -1.5 25 -0.5 4 -1 -1 -1 1.5 -1 7zM626.5 477.5l-3 -42 3 -29.5 1 2 1 27.5 -0.5 31 -1.5 11zM820.5 478l-1 -7.5 -0.5 -34 1.5 -29.5 1 1.5 1 28 -0.5 32 -1.5 9.5zM664.5 474l-1.5 -38.5 1.5 -26 1 26 -1 38.5zM719.5 474.5l-1 1 -1 -22 1 -45 2.5 26 -1.5 40zM790.5 475.5l-2 -39 2 -27 1.5 27 -1.5 39zM667.5 472.5l-1 -37 1 -25 2 25 -2 37zM573.5 472.5l-2 -37 2 -23.5 4 23.5 0 17.5 -4 19.5zM683.5 473.5l-1.5 -37 1.5 -24.5 1 24.5 -1 37zM638.5 471.5l-1.5 -36 1.5 -22.5 1 22.5 -1 36zM679.5 470l-1 -33.5 1 -19 1.5 19 -1.5 33.5zM691.5 469.5l-1 -33 1 -17.5 0 50.5zM811.5 469.5l-1.5 -33 1.5 -17.5 0 50.5zM583.5 466l-2 -30.5 2 -15.5 0 46zM619.5 467l-1 -4 -0.5 -27.5 1.5 -15.5 1 15.5 -1 31.5zM840.5 465.5l0 -42.5 0 42.5zM599.5 462l-1 0.5 -0.5 -27 0.5 -11.5 1 0 2 11.5 -2 26.5zM655.5 464.5l0 -40.5 1 11.5 -1 29zM226.5 458l-1 -24.5 1 -8.5 4 8.5 0 8 -4 16.5zM672.5 462l0 -36.5 1.5 10 -1.5 26.5zM675.5 461.5l0 -36 2 11 -2 25zM218.5 458.5l-1.5 -25 1.5 -8 2 7 2 -2 0.5 3 -0.5 12.5 -2 -8 -2 20.5zM641.5 460l-1 -24.5 1 -9.5 0 34zM236.5 455l-1 -21.5 1 -7 2 4 1 -1 1 1.5 0.5 2.5 -0.5 14 -1 3.5 -1 -4.5 -2 8.5zM605.5 459.5l0 -32.5 0 32.5zM699.5 459l0 -31.5 0 31.5zM867.5 463l-1 -3.5 0 -23 1 -7.5 0 34zM243.5 447.5l0 -17 0 17zM595.5 451.5l-1 1 0 -22 1 0.5 0 20.5zM590.5 452l0 -21.5 0 21.5zM561.5 449.5l0 -17.5 0 17.5zM826.5 451.5l0 -19.5 0 19.5zM710.5 450l0 -17.5 0 17.5zM568.5 443.5l0 -10 0 10z"/><path fill="rgb(175,175,175)" fill-rule="evenodd" d="M149.5 478l-3 0.5 -5 -2 -4 -5 -3 -11 -1.5 -18 1 -68 1.5 -17 4 -26 3 -8.5 3 -3 2 0.5 2 2.5 4 13 4.5 39.5 0.5 78 -3 17 -2.5 5 -3.5 2.5zM469.5 493l-2 -9.5 -2 -0.5 -3 -18 -0.5 -29.5 3.5 -53 1 6 3 -27 2 26.5 1 0 1 -5.5 1 6 3.5 47 -2 42 -1.5 10 -1 1 -2 -5 -2 9.5zM441.5 489.5l-3 -31 -2 9 -2 -7 -2 24 -1 2.5 -4 -26.5 -1 -27 5 -71 3 59 3 -7.5 1 10 3 -53 3 25.5 2 37 0 20 -2 23 -3 13zM418.5 484l-3 -22.5 -1 -27 4 -67 4.5 67 -0.5 29 -4 20.5zM513.5 493.5l-1 0 -4 -19.5 -1 8.5 -4 -8.5 -1.5 -38.5 1.5 -24.5 2.5 -8.5 1.5 -15.5 1 18.5 2 -8.5 3 -29 2 28.5 2 -14.5 2 12.5 1 -4 1.5 8 2.5 37 -2.5 46 -1.5 1.5 -1 -4.5 -2 9 -2 -7.5 -2 13.5zM372.5 490l-3 -8 -2 7.5 -2 -15.5 -1 -2.5 -1 1 -1 -0.5 -2 -9 -3 11.5 -1 -4 -2 10 -2 -7 -2 1.5 -3 -13 -2 11.5 -2 -7.5 -1 3.5 -1 -3.5 -3 -23 -1.5 26.5 -1.5 5.5 -3 -15.5 -0.5 -25 3.5 -29.5 1 0.5 2 27 4 -13 1 4 2 -10 2 10.5 3 -20 2 0 2 -7.5 2 16.5 1 -4.5 3 11 3 -16 2 6 2 -36.5 2 23 3 -25 2 16 2 -10 4 22 1 -6 2 38 1 -10.5 2 10 1 -9 1.5 13 -1.5 27 -1 -11 -2 14 -1 -15 -2 28 -1 -1.5 -2 7.5 -4 1.5 -2 5zM319.5 479l-2 -14 -2 9 -1 -5.5 -0.5 -34 1.5 -37.5 2 13 2 -33 1 7 2 -6.5 4 52.5 2 -30.5 1 2.5 1.5 32.5 -1.5 38.5 -1 0 -2 -24.5 -3 26 -1 2 -2 -1 -1 3.5zM395.5 477.5l-1 -0.5 -1.5 -12.5 -0.5 -30 2 -55 1 -3 3.5 58 -0.5 27.5 -3 15.5zM528.5 487.5l-1.5 -52 1.5 -55 2 55 -2 52zM291.5 485.5l-4 -18 -1.5 -35 5.5 -32.5 2 4 3 -13.5 2 3 2 -5.5 2 5 2 1 1 2 2 31.5 3 -15 1 4 1 18 -1 32.5 -1 1.5 -3 -15.5 -2 20.5 -3 1.5 -2 4.5 -2 0 -2 5 -2 -4.5 -1 0.5 -2 5zM728.5 491l-3 -54.5 3 -49 2 49 -2 54.5zM267.5 481.5l-3 -11 -2 5.5 -2 -3 -2 0.5 -2 -20 -1 -20 3 -25 2 -1.5 2 -6.5 2 5.5 3 -15 2 9 2 2.5 3 18.5 2 1.5 1 5 3 0 1 -4 1.5 11 -1.5 26.5 -1 -5.5 -1 0.5 -2 -2.5 -1 6 -2 0 -3 14.5 -4 7.5zM198.5 475l-5 -18.5 -1.5 -23 6.5 -41 3 8 1 -3 2 2 1 -2.5 2 22.5 3 14 -1 17 -3.5 21 -0.5 2 -4 -5 -3 6.5zM410.5 486l-2 -11.5 -2 -4 -2 0 -2 -9 -1 1 -1 -28 4 -39 1 4.5 1 0.5 1 -1.5 1 3.5 2 -9.5 2.5 41.5 -0.5 33 -2 18.5zM454.5 474.5l-2 -10 -1 2 -1 -4 -1 -27 1 -12.5 1 -2.5 1 0.5 2 -23 2.5 37.5 -2.5 39zM545.5 480l-2.5 -4.5 -1.5 -16 -1 1 -2 15 -2.5 -17 -0.5 -23 3 -34.5 1.5 21.5 1.5 5.5 2 -24 1 4.5 1 -11 2 38 -2 44.5zM494.5 475.5l-1 1 -1 -1 -2 -9 -1 3.5 -1 -5 -2 10.5 0 -1 -1.5 -40 1.5 -34 2 18 1 -4 1 3.5 2 -13 1 2.5 3 26 1 -10 0 37 -1 -19 -2 34zM555.5 479l-3 -30.5 -2 12.5 -0.5 -3.5 -1 -22 1.5 -8.5 2 5.5 1 -5 2 -27.5 2 35.5 -2 43.5zM181.5 464l-2 -2 -1 1 -1 -1 -2 -5 -2 -24.5 1 -11 3 -12 1 -2 1 2 2 -2.5 3 8 1.5 18.5 -0.5 24 -1 4.5 -3 2zM743.5 479l-2 -17.5 -1 11 -1 -36 1 -26.5 1 16 2 -18.5 1.5 29 -1.5 42.5zM610.5 475l-1 -39.5 1 -27 1 27 -1 39.5zM249.5 466.5l-3 -12 -0.5 -21 3.5 -22 1 12 2 2.5 1 7.5 -1 22 -1 -0.5 -1 2.5 -1 9zM649.5 472l-1.5 -36.5 1.5 -23.5 1 23.5 -1 36.5zM820.5 473.5l-1.5 -37 1.5 -23.5 1 2.5 0.5 21 -0.5 31 -1 6zM626.5 472l-2 -36.5 2 -21.5 1.5 21.5 -0.5 30 -1 6.5zM790.5 470.5l-1.5 -34 1.5 -20 1 20 -1 34zM664.5 468.5l-1 -33 1 -18 0 51zM718.5 469.5l-1 -33 1 -19 2 19 0 21.5 -2 11.5zM667.5 466.5l0 -47 1 16 -1 31zM573.5 465.5l-1.5 -30 1.5 -14.5 2.5 14.5 -1 22 -1.5 8zM638.5 465l-1 -29.5 1 -14.5 0 44zM683.5 467l-1 -30.5 1 -15.5 0 46zM679.5 462.5l0 -37 1 11 -1 26zM212.5 454.5l-1 -21 1 -7.5 1 1 0.5 6.5 -0.5 20 -1 1zM691.5 461.5l0 -34.5 0 34.5zM811.5 462l-1 -25.5 1 -9.5 0 35zM583.5 457l0 -28.5 0 28.5zM619.5 457l-1 -21.5 1 -7 0 28.5zM218.5 450l0 -20 0 20zM226.5 449.5l0 -20 1.5 4 -1.5 16zM747.5 456.5l-1 -1 -0.5 -19 1.5 -6 0 26zM840.5 456l0 -25.5 0 25.5zM236.5 438l0 -5.5 0 5.5zM599.5 444.5l-1 0.5 0 -11.5 1 1 0 10zM655.5 448l0 -15 0 15zM672.5 445.5l0 -12 0 12zM675.5 441l0 -6.5 0 6.5zM641.5 439l0 -4 0 4z"/><path fill="rgb(182,182,182)" fill-rule="evenodd" d="M148.5 476.5l-7 -1.5 -4 -5.5 -3 -12 -1 -17 2 -75 4 -28 3 -9 3 -3 3 1.5 3 7 4 22.5 1.5 18 1.5 56 -0.5 20 -1.5 14 -3 8 -5 4zM469.5 491l-2 -10 -2 -0.5 -0.5 -2 -2.5 -23 0 -20 3 -47.5 1 5 3 -26.5 2 26.5 1 -0.5 1 -5.5 1 4 3 44.5 -0.5 27 -2 21 -1.5 2.5 -2 -5.5 -2 10.5zM441.5 487l-3 -45 -1 17 -1 1 -2 -12 -1.5 29.5 -1.5 7.5 -4 -30.5 -0.5 -21 4.5 -65 3 62.5 2 -7.5 1 -0.5 1 10 3 -56.5 3 27 1.5 30 0 22 -1.5 17.5 -3 14zM513.5 491.5l-1 -0.5 -2 -8.5 -2 -13.5 -1 10 -1 -4.5 -2 -1.5 -0.5 -2.5 -1.5 -35 1 -16.5 4 -25.5 1 20.5 5 -41 2 28 2 -14.5 2 13 1 -4.5 1 5 2 35.5 -2 45 -1 0 -1 -5 -2 10 -2 -8.5 -2 14.5zM418.5 482l-2.5 -20.5 -1 -27 3.5 -60.5 4 60.5 -0.5 27 -3.5 20.5zM372.5 488.5l-3 -9 -2 8 -2 -17 -1 -3 -1 1 -1 -0.5 -2 -13 -3 15 -1 -4.5 -2 12 -2 -8 -2 2 -3 -20 -2 17.5 -2 -10.5 -1 5 -1 -5 -1 -24 1 -7.5 1 -2 1 3.5 2 -10 2 12 3 -21.5 2 1.5 2 -9 2 18 1 -5 3 13 3 -17 1 5 1 -1.5 2 -37 2 22 3 -24 2 14.5 2 -8.5 4 23 1 -5 1.5 35.5 -1.5 39.5 -1 -1.5 -2 9 -4 2 -2 5zM395.5 475l-1 -0.5 -1 -10 -0.5 -30 1.5 -48.5 1 -3 3 51.5 -0.5 25 -2.5 15.5zM319.5 476l-2 -17 -2 11.5 -0.5 -2 -1 -34 1.5 -31.5 2 16.5 2 -36 1 7.5 2 -6 1 7.5 2.5 42 -2 33 -1.5 6 -2 -1.5 -1 4zM528.5 484.5l-1.5 -49 1.5 -49 1.5 49 -1.5 49zM291.5 484l-4 -20 -0.5 -32.5 4.5 -29 2 4 3 -13 2 4 2 -5 2 5.5 3 4 2 31.5 -1 30 -1 6.5 -3 2.5 -2 5 -2 0 -2 5 -2 -4.5 -1 0.5 -2 5.5zM728.5 488l-2 -51.5 2 -43.5 1.5 43.5 -1.5 51.5zM267.5 479.5l-3 -12 -2 6 -2 -3.5 -2 0.5 -2 -37 2 -22 2 -1 2 -6.5 2 6.5 3 -16 2 9 2 3 3 21 2 1.5 0.5 5.5 -0.5 16.5 -1 -0.5 -1 1.5 -3 19 -4 8.5zM198.5 472.5l-4.5 -18 -1 -21 5.5 -36.5 3 9.5 1 -4.5 2 1.5 1 -2 3 32 -2.5 36 -0.5 1 -1 -2.5 -2 0 -1 -2.5 -3 7zM410.5 483.5l-2 -12.5 -2 -3.5 -2 0 -2 -13.5 -1 0.5 -0.5 -20 2.5 -15 1 -18 1 4 1 1 1 -2 1 3.5 2 -10.5 2 37 -2 49zM545.5 476.5l-1 -4 -1 1.5 -1 -7 -1 -31.5 2 -25.5 1 4 1 -11 1.5 32.5 -1.5 41zM454.5 470.5l-2 -14 -1 2.5 -0.5 -4.5 -1 -19 1.5 -8.5 1 1 2 -22.5 1.5 29 -1.5 36zM329.5 469.5l-1 0 -1 -21 1 -42.5 1 2 1 25.5 -1 36zM555.5 474l-2 -38.5 2 -28 1.5 28 -1.5 38.5zM335.5 471.5l-3 -23 0 -14 2 -9.5 1 -16 1 1.5 1.5 24 -1 28 -1.5 9zM493.5 471l-3 -14 -1 6.5 -1 -8 -2 15 -1 -35 1 -26.5 2 19 1 -5.5 1 5 2 -13 2 4 1 27 -1 24.5 -1 1zM538.5 471l-2 -17 -0.5 -18.5 2.5 -26.5 2 26.5 -2 35.5zM743.5 474l-2 -32.5 -1 26 -0.5 -31 0.5 -18.5 1 16.5 2 -20.5 1.5 22.5 -1.5 37.5zM181.5 459.5l-2 -3 -1 1.5 -2 -4.5 -1.5 -21 2.5 -14 1 -2 1 1.5 2 -2.5 3 7 1 11 -1 22 -3 4zM610.5 469.5l-1 -34 1 -18.5 0 52.5zM249.5 462l-2 -9.5 -1 -19 3 -15.5 1 12 2 3.5 -3 28.5zM310.5 464l-2.5 -29.5 2.5 -15.5 1.5 15.5 -0.5 26 -1 3.5zM649.5 466l-1 -30.5 1 -15 0 45.5zM820.5 467.5l-1 -31 1 -15.5 1.5 15.5 -0.5 27 -1 4zM626.5 464l-1 -28.5 1 -12.5 1.5 12.5 -0.5 24.5 -1 4zM790.5 464l0 -40 1 12.5 -1 27.5zM664.5 461l0 -35.5 0 35.5zM718.5 461l0 -35 1.5 10.5 -0.5 21 -1 3.5zM384.5 457l0 -30 1 7.5 -1 22.5zM667.5 457l0 -28.5 0 28.5zM281.5 453l-1 -18.5 1 -5.5 1 5.5 -1 18.5zM387.5 452.5l0 -23 1 5 -1 18zM638.5 455.5l0 -26 0 26zM573.5 455l0 -25.5 1 6 -1 19.5zM683.5 455.5l0 -25.5 0 25.5zM497.5 447l0 -15 0 15zM679.5 447l0 -13.5 0 13.5zM550.5 437.5l0 -2.5 0 2.5zM811.5 442l0 -7 0 7z"/><path fill="rgb(188,188,188)" fill-rule="evenodd" d="M149.5 474.5l-3 0.5 -4 -1 -4 -5 -3 -11 -1.5 -15.5 1.5 -71 5 -31 2 -6.5 3 -3.5 3 2 3 8 5 35 1 75 -3 17 -2 4.5 -3 2.5zM469.5 489l-2 -10.5 -2 -2 -2.5 -41 2.5 -42 1 4 3 -26 2 26.5 2 -6.5 1 3.5 3 40.5 -1 26 -2 21 -1 1.5 -2 -6.5 -2 11.5zM431.5 482.5l-2.5 -22 -1 -26 3.5 -59.5 2.5 59.5 -0.5 36 -2 12zM513.5 489.5l-1 -0.5 -2 -9.5 -2 -17 -1 12.5 -1 -6 -2 -2 -1.5 -31.5 4.5 -35.5 1 22.5 5 -44.5 2 29 2 -16 2 14 1 -5.5 1 4.5 2 31.5 -2 42 -1 0.5 -1 -6 -2 11 -2 -9.5 -2 16zM372.5 486.5l-3 -9 -2 8 -2 -19.5 -1 -4 -1 1.5 -1 -0.5 -0.5 -4.5 -1.5 -24 2 -14 1 -2.5 1 4 1 -2.5 2 -38 2 21 3 -24 2 15 2 -8 4 24.5 1 -5 1 29.5 -1 36 -1 -1.5 -2 10 -4 2.5 -2 5zM418.5 479.5l-2.5 -20 -0.5 -25 3 -54.5 3.5 54.5 -1 28 -2.5 17zM441.5 484.5l-2 -50 2 -52 4 53 -1 31 -3 18zM395.5 472l-1 -0.5 -0.5 -8 -1 -29 1.5 -42 1 -3 3 45 -1 24 -2 13.5zM319.5 473l-2 -24 -2 17.5 -1 -32 1 -24.5 2 19.5 2 -39 1 8 2 -6 2.5 42 -1.5 32 -1 3.5 -2 -1.5 -1 4.5zM528.5 481.5l-1.5 -46 1.5 -43 1.5 43 -1.5 46zM291.5 482l-4 -22.5 -0.5 -28 4.5 -26.5 2 4 3 -12.5 2 4.5 2 -4.5 5 14 1.5 24 -1.5 30 -3 4.5 -2 6 -2 0 -2 6 -2 -5.5 -3 6.5zM267.5 477.5l-3 -13.5 -2 7 -2 -4 -2 0 -1.5 -33.5 1.5 -18 1 -1.5 1 0.5 2 -7 2 8.5 3 -18 4 13 2.5 22.5 -2.5 34.5 -4 9.5zM728.5 484.5l-1.5 -48 1.5 -38 1.5 38 -1.5 48zM198.5 469.5l-3.5 -18 -1 -18 4.5 -32 3 12 1 -5.5 2 1 1 -3 2 27.5 -0.5 23 -1.5 11 -1 -2.5 -2 0 -1 -3.5 -3 8zM410.5 480.5l-2 -14 -2 -3 -2 0.5 -2 -29.5 2 -24.5 2 4 1 -2 1 3 2 -13.5 2 33 -2 46zM354.5 473.5l-2 -9 -2 2.5 -0.5 -2.5 -1.5 -11 -0.5 -19 2.5 -18.5 2 2 2 -12 2 20.5 1 -5.5 2.5 13.5 -1.5 24.5 -1 6 -1 -6.5 -2 15zM545.5 472.5l-1 -6 -1 2 -0.5 -5 -1 -28 1.5 -18 1 3.5 1 -12 1 26.5 -1 37zM329.5 465l-1 -0.5 -0.5 -14 0.5 -36 1 1 0.5 18 -0.5 31.5zM335.5 467.5l-2 -33 2 -19.5 2 19.5 -0.5 26 -1.5 7zM454.5 465.5l-2 -30 2 -21 1 20 -1 31zM555.5 468l-1.5 -32.5 1.5 -18.5 1 18.5 -1 32.5zM486.5 464.5l0 -46 1.5 17 -1.5 29zM538.5 465.5l-1 -30 1 -17.5 1 17.5 -1 30zM743.5 467l-1 -30.5 1 -14.5 1 14.5 -1 30.5zM181.5 453l-2 -4.5 -1 2 -1 -2.5 -1 -15.5 2 -7 1 1.5 2 -3.5 3 6 0.5 4 -0.5 11.5 -3 8zM345.5 463l-2 -28.5 2 -10 1.5 10 -1.5 28.5zM493.5 463.5l-1 -2 -1 -21 1 -17 2 2 0.5 8 -0.5 27 -1 3zM249.5 455.5l-1.5 -5 -0.5 -17 2 -9 0 31zM310.5 457.5l-1 -23 1 -9 1.5 9 -1.5 23zM610.5 462l0 -37 0 37zM740.5 459.5l0 -33 0 33zM649.5 456l0 -26.5 0 26.5zM820.5 458l0 -29 1 7.5 -1 21.5zM342.5 454.5l-1 -20 1 -4.5 1 4.5 -1 20zM489.5 452l0 -21.5 0 21.5zM626.5 450l0 -18 0 18zM790.5 453l0 -21.5 0 21.5zM437.5 443.5l-1 0.5 0 -9.5 0 -2 1 0 0 11zM451.5 440l0 -6 0 6zM664.5 444.5l0 -10.5 0 10.5z"/><path fill="rgb(194,194,194)" fill-rule="evenodd" d="M149.5 472.5l-6 0 -4.5 -5 -3 -10 -1 -15 1.5 -70 4 -26.5 2 -6.5 3 -3.5 3 2 3 8 4.5 29.5 1 74 -2.5 15.5 -2 4.5 -3 3zM469.5 487l-2 -11.5 -2 -1 -2 -39 2 -37 1 3.5 3 -25.5 2 27.5 2 -8 1 3.5 2.5 36 -2.5 44.5 -1 1 -2 -7 -2 13zM431.5 480l-2 -22.5 -0.5 -23 2.5 -53.5 2.5 53.5 -1 34 -1.5 11.5zM372.5 485l-3 -10 -2 8.5 -3 -29 -1 2 -1 -1 -1 -21 1 -7.5 1 -1 1 2 1 -3.5 2 -39 2 20.5 3 -23.5 2 14.5 2 -7.5 4 28 1 -4 0.5 21 -0.5 31.5 -1 -2 -2 13 -4 2.5 -2 5.5zM513.5 487l-1 -0.5 -2 -10.5 -2 -26 -1 20.5 -1 -9 -2 -4 -1 -22 3 -12.5 1 -13.5 1 21.5 5 -48 2 31 2 -18.5 2 17 1 -8.5 1 4 1.5 27.5 -1.5 38.5 -1 1 -1 -7 -2 12.5 -2 -11 -2 17.5zM418.5 476.5l-1.5 -12 -1 -30 2.5 -48 3 48 -0.5 26 -2.5 16zM441.5 481.5l-1.5 -47 1.5 -46.5 3.5 46.5 -0.5 27 -3 20zM395.5 469l-1 -1 -0.5 -6.5 -0.5 -27 2 -38.5 2.5 38.5 -0.5 20 -2 14.5zM319.5 469.5l-1.5 -35 1.5 -37.5 1 12 2 -5.5 2 31 -1 27.5 -1 4 -2 -2 -1 5.5zM528.5 477.5l-1 -42 1 -37.5 1.5 37.5 -1.5 42zM291.5 480l-3.5 -21.5 -0.5 -26 4 -25 2 4 1 -0.5 2 -11 2 4.5 2 -3.5 3 14 2 4 0.5 37.5 -0.5 4 -2 2 -3 10 -2 0 -2 6.5 -2 -6 -1 1 -2 6zM267.5 475.5l-3 -16 -2 8.5 -2 -5 -1 0.5 -1 -0.5 -1.5 -29.5 1.5 -13 1 -1.5 1 0.5 2 -8 2 10 3 -20 4 15.5 1.5 16.5 -1.5 30.5 -4 11.5zM728.5 480.5l-1 -44 1 -32.5 1 32.5 -1 44zM198.5 466.5l-3 -20 -0.5 -13 3.5 -27.5 3 14.5 1 -6 2 1 1 -4 1.5 22 -1.5 30.5 -1 -3 -2 0 -1 -4 -3 9.5zM410.5 477l-2 -15.5 -1 0 -1 -2.5 -2 0.5 -1 -25 1 -16.5 2 3 1 -2 1 2.5 2 -15.5 1.5 29.5 -1.5 41.5zM354.5 469.5l-2 -11.5 -2 3.5 -1.5 -27 1.5 -12 2 2.5 2 -12.5 2 21 1 -6.5 1 7.5 -1 22 -1 -16 -2 29zM545.5 467l-1 -8.5 -1 3.5 -1 -26.5 3 -18.5 0 50zM315.5 461l-1 -26.5 1 -16 1.5 16 -1.5 26.5zM335.5 462l0 -40.5 1.5 13 -0.5 24.5 -1 3zM329.5 459l-1 -0.5 0 -4 0 -32 1 0.5 0.5 9.5 -0.5 26.5zM454.5 458l-1 -22.5 1 -11.5 0 34zM555.5 459.5l-1 -24 1 -9.5 0 33.5zM538.5 457.5l0 -31 0 31zM486.5 455l0 -27 0 27zM345.5 453.5l0 -23.5 0 23.5zM743.5 457l0 -27 0 27zM249.5 443.5l0 -12 0 12zM310.5 444.5l0 -12.5 0 12.5zM493.5 449.5l-1 -14 1 -3.5 1 3.5 -1 14zM610.5 444l0 -10.5 0 10.5z"/><path fill="rgb(201,201,201)" fill-rule="evenodd" d="M147.5 471.5l-5.5 -2 -3.5 -5.5 -2 -10.5 -1 -15 1.5 -65 4 -22 2.5 -7.5 2 -2 3 2 2 5 4 21 2 61.5 -2 29.5 -3 7.5 -4 3zM469.5 484.5l-2 -12 -2 -1.5 -1 -35.5 1 -30.5 1 1.5 3 -25 2 29.5 2 -10.5 1 3 2 32 -2 41.5 -1 1 -2 -8 -2 14.5zM372.5 483l-3 -11 -2 9.5 -2.5 -47 2.5 -44.5 2 19.5 3 -23 2 13.5 2 -6 1 5 3 26 1 -3 0.5 12.5 -0.5 25.5 -1 -2.5 -2 17 -4 3 -2 5.5zM431.5 477l-2 -42.5 2 -47 2 47 -0.5 32 -1.5 10.5zM513.5 484l-1 -0.5 -2 -13 -1.5 -35 4.5 -47.5 2 32.5 2 -20.5 2 19.5 1 -10.5 1 5 1 21.5 -1 35 -1 1 -1 -8.5 -2 14.5 -2 -13 -2 19.5zM418.5 473.5l-1.5 -12 -0.5 -27 2 -41.5 2.5 41.5 -0.5 24 -2 15zM441.5 478.5l-1.5 -44 1.5 -40.5 3 40.5 -0.5 23 -2.5 21zM291.5 477.5l-3 -20.5 -0.5 -24.5 3.5 -23 2 4.5 1 -0.5 2 -10.5 2 5.5 2 -3.5 3 18.5 2 4 0 25 -2 3.5 -3 13.5 -2 0 -2 7 -2 -6 -1 0.5 -2 6.5zM267.5 473l-3 -19.5 -2 11 -2 -6.5 -1 1 -1 -1.5 -1 -24 1 -8.5 1 -1 1 0.5 2 -8 2 10 3 -21.5 4 17.5 1 11 -1 25 -4 14.5zM395.5 465.5l-1 -5 -1 -26 2 -29.5 2 29.5 -2 31zM528.5 473.5l-1 -38 1 -30 1 30 -1 38zM319.5 465.5l-1 -31 1 -27.5 1 12 2 -4.5 1.5 20 -0.5 22 -1 4.5 -2 -2.5 -1 7zM728.5 475.5l0 -65 1 26 -1 39zM410.5 473.5l-2 -20 -1 1.5 -1 -3.5 -2 1.5 -0.5 -18.5 0.5 -8 2 2 1 -2 1 2 2 -17.5 1 24.5 -1 38zM198.5 463l-2 -29.5 2 -20.5 3 14.5 1 -6 2 1 1 -4.5 1 15.5 -1 26.5 -1 -4 -2 0 -1 -6.5 -3 13.5zM507.5 464l-1.5 -28.5 1.5 -16.5 0 45zM354.5 464.5l-2 -21 -2 9 -0.5 -18 0.5 -5 2 3 2 -13 1.5 15 -1.5 30zM545.5 460l-1 -24.5 1 -10.5 0 35zM315.5 453.5l0 -26.5 0 26.5zM335.5 454.5l0 -26.5 1 6.5 -1 20zM329.5 448l-1 -1.5 0 -12 0 -3.5 1 -0.5 0 17.5zM543.5 449l0 -17 0 17z"/><path fill="rgb(207,207,207)" fill-rule="evenodd" d="M147.5 469.5l-5 -1.5 -3 -4.5 -2.5 -10 -1 -15 2 -65 3.5 -18 4 -7.5 2 1 2.5 5.5 4 19 2 58 -2 27 -2.5 7.5 -4 3.5zM469.5 482.5l-2 -14 -2 -2 -1 -31 1 -22.5 2 -2 2 -24.5 2 32 2 -13.5 2.5 30.5 -1.5 38 -1 1.5 -2 -10 -2 17.5zM372.5 481l-3 -12 -2 10 -2 -44.5 2 -40.5 2 20 3 -23.5 2 13 2 -5.5 1 5 3 29.5 1 -2.5 0 4.5 0 15 -1 -5.5 -2 27.5 -4 3.5 -2 6zM513.5 481.5l-1 -1 -2 -14 -1 -31 4 -42.5 2 34.5 2 -23 2 22.5 1 -11.5 1 4.5 1 15.5 -1 30 -1 2 -1 -11 -2 18 -2 -17.5 -2 24.5zM431.5 474l-2 -39.5 2 -41 2 41 -0.5 31 -1.5 8.5zM418.5 470l-1.5 -35.5 1.5 -35 2 35 -2 35.5zM441.5 474.5l-1 -40 1 -34.5 2.5 34.5 -2.5 40zM291.5 475.5l-3 -26 0 -17 3 -20.5 2 5.5 1 -0.5 2 -11 2 7.5 2 -2 3.5 22 -0.5 13 -3 19.5 -2 0.5 -2 8 -2 -7 -1 0.5 -2 7.5zM267.5 470.5l-3 -31.5 -2 21 -2 -10 -1 1.5 -1 -2.5 -0.5 -15.5 0.5 -3.5 1 -1.5 1 1 2 -8 2 11 3 -24 4.5 25 -1 22 -3.5 15zM528.5 468.5l0 -54.5 0 54.5zM395.5 461l-1 -2.5 -0.5 -24 1.5 -19.5 1.5 19.5 -1.5 26.5zM319.5 460l0 -43 1 12 1 0 1 -3.5 1 9 -1 18.5 -1 -4.5 -1 0 -1 11.5zM410.5 468.5l-2 -34 2 -17.5 1 18.5 -1 33zM728.5 469.5l0 -51 0 51zM198.5 458l-1 -24.5 1 -14 2 14 -2 24.5zM205.5 454l-1 -6.5 -1 -0.5 -1 1 -0.5 -14.5 0.5 -5 2 0.5 1 -4.5 0 29.5zM354.5 457l-1.5 -22.5 1.5 -8 0 30.5zM507.5 454.5l0 -26 0 26zM545.5 444.5l0 -11.5 0 11.5z"/><path fill="rgb(214,214,214)" fill-rule="evenodd" d="M148.5 467l-4 0 -4 -4.5 -2.5 -9 -1 -14 2 -65 3 -14 3.5 -6.5 2 1 2 3.5 3.5 15 2 57 -1.5 26 -2 6.5 -3 4zM469.5 479.5l-2 -15.5 -2 -3 -0.5 -25.5 0.5 -14.5 2 -3 2 -26.5 2 34 2 -14 2 24 -1 34 -1 1.5 -2 -12.5 -2 21zM372.5 479l-3 -14 -2 11.5 -1.5 -42 1.5 -36.5 2 21 3 -24.5 2 12.5 2 -4.5 1 4.5 2.5 27.5 -1.5 33.5 -4 4.5 -2 6.5zM513.5 478l-1 -0.5 -2 -18.5 -0.5 -23.5 3.5 -37 2 37 -2 42.5zM431.5 470.5l-1.5 -36 1.5 -34 1.5 34 -0.5 30 -1 6zM441.5 470.5l-1 -36 1 -26 2 26 -2 36zM291.5 472.5l-2.5 -40 2.5 -18 2 7 1 0 2 -12.5 2 10 1 -1.5 1 0.5 2 15.5 -0.5 17 -1.5 11.5 -2 0.5 -2 9.5 -2 -8.5 -3 9zM418.5 466l-1.5 -31.5 1.5 -25.5 1.5 25.5 -1.5 31.5zM517.5 470.5l-2 -35 2 -24.5 2 24.5 -2 35zM267.5 467l-1.5 -10.5 -0.5 -23 2 -21 3.5 22 -0.5 17.5 -3 15zM520.5 462l-1 -26.5 1 -13 1.5 13 -0.5 24 -1 2.5zM528.5 461.5l0 -38.5 0 38.5zM395.5 454.5l-1 -20 1 -10 0 30zM410.5 462.5l-1 -28 1 -11 0 39zM198.5 451.5l0 -25.5 1 7.5 -1 18zM262.5 454l-1.5 -20.5 1.5 -6.5 1.5 6.5 -1.5 20.5zM319.5 451.5l0 -24.5 0 24.5zM728.5 461.5l0 -34.5 0 34.5zM205.5 441.5l0 -10.5 0 10.5z"/><path fill="rgb(220,220,220)" fill-rule="evenodd" d="M147.5 465l-4 -1.5 -3 -4.5 -2 -9 -1 -12.5 2.5 -63 2.5 -9.5 3 -4.5 3 2 3.5 12 2.5 57 -2 24 -2 6.5 -3 3zM469.5 477l-2 -19 -2 -5.5 0 -17 0 -6.5 2 -4 2 -28.5 2 36.5 2 -15 1.5 17.5 -0.5 29 -1 2 -2 -24 -2 34.5zM372.5 476.5l-3 -16.5 -2 14 -1.5 -39.5 1.5 -32 2 21.5 3 -25.5 2 12 2 -3 3 27 -1 29.5 -5 8 -1 4.5zM513.5 474.5l-1.5 -8 -1.5 -31 3 -30.5 1.5 30.5 -1.5 39zM431.5 466l-1 -31.5 1 -24.5 1.5 24.5 -1.5 31.5zM291.5 470l-2 -37.5 2 -15.5 2 8 1 0.5 2 -13 2 12 1 -1.5 1 1 0.5 6.5 0 23 -0.5 3 -1 1.5 -1 -0.5 -2 11.5 -2 -10 -3 11zM441.5 465l0 -48 1 17.5 -1 30.5zM267.5 463.5l-1.5 -30 1.5 -16 2.5 17 -0.5 19 -2 10zM517.5 466l-1 -30.5 1 -18 1 18 -1 30.5zM418.5 460.5l-1 -26 1 -16 1 16 -1 26zM520.5 454.5l0 -25.5 1 6.5 -1 19zM410.5 453.5l0 -23.5 0 23.5zM262.5 441l0 -9 0 9zM528.5 448.5l0 -17 0 17z"/><path fill="rgb(226,226,226)" fill-rule="evenodd" d="M147.5 462l-4 -1.5 -2.5 -4 -2.5 -19 3 -62 2 -6.5 2 -2.5 3 2.5 2 5.5 3 57 -1.5 21 -1.5 6 -3 3.5zM372.5 474l-3 -21 -2 17.5 -1 -36 1 -27 2 21.5 3 -27 2 13.5 2 -1.5 2.5 20.5 -0.5 24.5 -5 10 -1 5zM469.5 473.5l-3 -38 1 -3.5 2 -30 1.5 33.5 -1.5 38zM513.5 470l-1.5 -6.5 -0.5 -28 2 -23 1 23 -1 34.5zM296.5 465.5l-2 -13 -3 14 -1.5 -32 1.5 -14 2 8.5 1 0.5 2 -12.5 2 12.5 1 -0.5 1 1.5 0 4 0 12.5 -1 3.5 -1 -1 -2 16zM431.5 460.5l0 -41.5 1 15.5 -1 26zM267.5 459l-1.5 -25.5 1.5 -11 1.5 12 -1.5 24.5zM517.5 460.5l0 -36 0 36zM473.5 460l0 -35 1.5 10.5 -0.5 22 -1 2.5zM441.5 457.5l0 -32 0 32zM418.5 452l0 -24 0 24z"/><path fill="rgb(233,233,233)" fill-rule="evenodd" d="M146.5 459l-3 -2 -2 -4 -2 -17.5 3 -48.5 1.5 -11.5 1.5 -2.5 2 1 1 4 4 53.5 -1.5 20 -2 5 -2.5 2.5zM372.5 471l-3 -36.5 3 -28 1 11 1 3 1 -1.5 1 1.5 2 14 -0.5 19 -1.5 7 -3 4.5 -1 6zM469.5 469.5l-1.5 -34 1.5 -26 1.5 26 -1.5 34zM367.5 467l-1 -32.5 1 -21 2 21 -2 32.5zM513.5 464.5l-1 -3 -0.5 -26 1.5 -15.5 0 44.5zM296.5 461.5l-2 -27 2 -13 1.5 13 -1.5 27zM291.5 462l-1 -27.5 1 -10.5 2 10.5 -0.5 20 -1.5 7.5zM267.5 452.5l-1 -19 1 -5.5 1 6.5 -1 18zM431.5 452l0 -23.5 0 23.5zM473.5 449.5l0 -18 1 4 -1 14zM517.5 451l0 -20 0 20z"/><path fill="rgb(239,239,239)" fill-rule="evenodd" d="M146.5 454.5l-2 -0.5 -2 -4.5 -1.5 -14 1.5 -26 3 -18 1 0 1 3 1 6 2.5 31 -1 16 -1.5 5 -2 2zM372.5 468l-1.5 -9.5 -0.5 -24 2 -22 1 10.5 1 2.5 1 -1 1 2 1.5 8 -1 18 -3.5 8 -1 7.5zM469.5 465l-1.5 -29.5 1.5 -18.5 1 18.5 -1 29.5zM367.5 462.5l0 -42.5 1.5 14.5 -1.5 28zM296.5 456.5l-1 -22 1 -8.5 1 8.5 -1 22zM513.5 457l-1 -21.5 1 -8 0 29.5zM291.5 457l0 -29.5 1.5 7 -1.5 22.5z"/><path fill="rgb(245,245,245)" fill-rule="evenodd" d="M146.5 448.5l-2 -1.5 -1 -2.5 -1 -9 3 -21.5 1 0 1 3 2 14.5 -1 12 -2 5zM372.5 464l-1.5 -29.5 1.5 -16 1 9.5 1 2.5 1 -0.5 1 4.5 -0.5 14 -0.5 1.5 -1 -1 -2 15zM469.5 459l-1 -23.5 1 -11 0 34.5zM367.5 456l0 -29.5 0 29.5zM291.5 447.5l0 -16 0 16zM296.5 448l0 -17 0 17z"/><path fill="rgb(252,252,252)" fill-rule="evenodd" d="M372.5 458.5l-1 -24 1 -10.5 1 10.5 -1 24zM469.5 447l0 -15 0 15zM367.5 442.5l0 -10 0 10z"/></g></svg>
<svg class="a" style="left:274px;top:167px" width="870" height="527" viewBox="0 0 870 527"><path d="M79.5 0V527M126.5 0V527M159.5 0V527M184.5 0V527M205.5 0V527M223.5 0V527M238.5 0V527M252.5 0V527M264.5 0V527M343.5 0V527M389.5 0V527M422.5 0V527M448.5 0V527M469.5 0V527M486.5 0V527M502.5 0V527M515.5 0V527M527.5 0V527M607.5 0V527M653.5 0V527M686.5 0V527M711.5 0V527M732.5 0V527M750.5 0V527M765.5 0V527M779.5 0V527M791.5 0V527M0 483.5H870M0 439.5H870M0 395.5H870M0 351.5H870M0 307.5H870M0 264.5H870M0 220.5H870M0 176.5H870M0 132.5H870M0 88.5H870M0 44.5H870" stroke="#4c4c4c" stroke-opacity="0.95" stroke-width="1" fill="none"/><path d="M110.5 0V527" stroke="#b9b9b9" stroke-width="1" fill="none"/><path d="M0 417.5H870" stroke="#a9a9a9" stroke-width="1.3" fill="none"/><path d="M0.0 428.8 39.5 431.7 107.0 430.5 121.7 426.8 143.4 416.4 150.7 418.4 167.6 436.0 179.7 431.7 199.0 416.0 208.7 428.0 223.0 430.5 232.8 446.0 247.3 430.5 255.8 443.7 264.2 424.4 276.3 435.3 284.8 429.2 287.0 426.2 289.5 426.9 291.4 429.8 294.7 434.6 297.8 427.7 300.6 428.3 302.7 426.3 304.8 436.1 308.0 434.7 311.2 427.3 313.5 432.5 316.6 435.3 319.9 426.0 322.7 433.1 325.3 427.1 328.0 426.1 331.3 435.4 334.1 428.6 337.4 431.9 340.7 435.2 343.4 430.0 346.2 430.2 348.3 428.7 351.5 425.5 353.3 432.5 355.6 431.4 358.2 429.1 361.7 427.3 364.2 427.4 367.1 428.3 369.5 434.0 371.8 431.7 375.2 426.2 377.1 427.7 380.2 432.4 382.4 429.0 384.5 430.5 386.4 433.4 389.7 436.5 392.7 436.5 394.6 428.5 398.0 434.3 400.5 436.3 403.4 434.8 405.7 427.3 408.2 426.6 410.7 436.5 413.0 425.1 414.9 427.0 418.0 429.4 420.3 426.2 423.8 430.1 425.9 425.7 427.8 427.0 430.8 426.8 432.7 430.9 434.9 437.0 436.9 431.4 440.0 429.9 443.5 430.7 445.7 429.9 447.6 430.1 449.8 435.7 453.0 431.0 454.8 428.1 457.1 427.5 459.3 435.4 461.3 425.6 464.7 431.8 468.2 429.8 471.5 432.8 474.6 433.9 477.3 426.1 479.4 435.5 482.8 436.1 485.1 432.9 488.3 432.7 491.5 431.3 494.4 433.2 496.6 436.1 500.1 425.9 503.5 436.5 506.5 425.5 509.8 426.5 513.2 433.0 515.1 427.0 518.0 431.8 521.1 436.1 523.3 425.0 526.6 427.1 529.9 427.9 533.1 433.3 536.4 431.4 539.7 428.6 542.6 429.6 545.9 433.2 548.5 431.2 550.4 427.3 553.2 430.9 556.5 431.9 558.5 429.9 561.6 431.2 563.4 433.7 566.6 427.7 569.3 430.0 572.5 429.5 574.7 430.9 578.1 427.8 580.1 432.0 583.4 431.1 586.0 433.9 589.1 427.5 592.4 428.6 594.7 433.7 597.2 433.4 599.3 434.0 601.4 428.2 604.0 429.7 606.8 434.2 609.8 427.0 612.1 431.4 614.7 432.7 617.4 427.6 619.6 433.8 622.0 433.1 625.4 432.0 628.4 432.9 630.7 435.3 633.3 435.3 635.6 434.9 638.8 432.9 641.3 429.1 644.4 430.9 647.4 429.1 649.3 429.2 652.5 429.4 655.8 431.0 658.6 430.8 661.5 428.7 663.9 435.5 666.0 433.2 668.4 430.4 670.2 428.2 673.7 434.6 676.8 433.5 680.2 430.3 683.0 432.0 685.8 434.2 688.9 434.3 690.9 432.8 693.8 433.2 696.7 433.7 699.0 434.1 701.5 432.5 704.8 433.0 707.2 430.7 709.5 432.6 713.0 434.0 715.5 431.5 718.7 430.9 721.2 429.6 723.3 432.2 726.3 432.6 728.7 434.3 731.5 430.3 733.5 434.4 736.9 434.1 739.8 431.1 741.7 430.8 743.9 434.1 747.2 433.4 749.3 430.7 751.6 434.2 753.7 433.5 756.6 432.2 760.0 430.8 762.7 430.3 764.7 429.7 767.0 430.1 768.9 434.5 771.2 434.0 774.2 433.2 777.1 434.3 780.4 433.1 783.2 433.0 786.2 432.3 788.9 430.3 792.1 431.9 794.0 430.3 797.3 430.8 799.8 432.9 803.0 431.1 805.5 431.6 807.3 433.9 809.2 434.3 811.2 430.3 814.5 433.6 816.7 432.3 819.3 433.1 821.4 433.6 824.9 433.0 828.3 434.2 830.7 433.7 833.9 432.4 835.9 432.6 839.2 431.0 842.1 434.0 845.0 429.7 847.8 430.8 851.1 432.8 853.4 434.0 856.3 431.2 859.5 434.0 862.8 433.9 865.7 433.0 868.6 432.1" stroke="#858585" stroke-width="2" stroke-dasharray="4.5 2.5" fill="none" stroke-linejoin="round"/></svg>
<svg class="a" style="left:275px;top:168px" width="18" height="36" viewBox="0 0 18 36">
<rect width="18" height="35.5" fill="#9c86b4"/>
<circle cx="9" cy="8.8" r="4.9" fill="none" stroke="#4a4a4a" stroke-width="1.1"/><path d="M9 6v5.6M6.2 8.8h5.6" stroke="#4a4a4a" stroke-width="1.6"/>
<circle cx="9" cy="26.3" r="4.9" fill="none" stroke="#4a4a4a" stroke-width="1.1"/><path d="M6.2 26.3h5.6" stroke="#4a4a4a" stroke-width="1.6"/>
</svg>
<svg class="a" style="left:1104px;top:676px" width="39" height="18" viewBox="0 0 39 18">
<rect width="39" height="18" fill="#9c86b4"/>
<circle cx="9.8" cy="9" r="4.9" fill="none" stroke="#4a4a4a" stroke-width="1.1"/><path d="M7 9h5.6" stroke="#4a4a4a" stroke-width="1.6"/>
<circle cx="29" cy="9" r="4.9" fill="none" stroke="#4a4a4a" stroke-width="1.1"/><path d="M29 6.2v5.6M26.2 9h5.6" stroke="#4a4a4a" stroke-width="1.6"/>
</svg>
<div class="a" style="left:276px;top:677px;width:44px;height:16.5px;border-radius:3px;background:linear-gradient(#fdfdfd,#dcdcdc);box-shadow:0 0 0 1px #888"></div>
<div class="t" style="left:258px;width:80px;text-align:center;top:681.72px;font-size:8.6px;line-height:8.6px;color:#222;">Generate</div>
<div class="a" style="left:1069px;top:643px;width:73px;height:14px;border-radius:3px;background:linear-gradient(#fdfdfd,#dcdcdc);box-shadow:0 0 0 0.7px #888, 1px 1px 1px rgba(0,0,0,0.4)"></div>
<div class="t" style="left:1065.5px;width:80px;text-align:center;top:646.22px;font-size:8.6px;line-height:8.6px;color:#222;">10 .. 200</div>
<div class="a" style="left:1069px;top:661px;width:73px;height:14px;border-radius:3px;background:linear-gradient(#fdfdfd,#dcdcdc);box-shadow:0 0 0 0.7px #888, 1px 1px 1px rgba(0,0,0,0.4)"></div>
<div class="t" style="left:1065.5px;width:80px;text-align:center;top:664.22px;font-size:8.6px;line-height:8.6px;color:#222;">20 .. 20,000</div>
<div class="t" style="left:189px;width:80px;text-align:right;top:185.70px;font-size:8.7px;line-height:8.7px;color:#a8a8a8;">950m</div>
<div class="t" style="left:189px;width:80px;text-align:right;top:207.66px;font-size:8.7px;line-height:8.7px;color:#262626;-webkit-text-stroke:0.3px #262626">900m</div>
<div class="t" style="left:189px;width:80px;text-align:right;top:229.62px;font-size:8.7px;line-height:8.7px;color:#a8a8a8;">850m</div>
<div class="t" style="left:189px;width:80px;text-align:right;top:251.58px;font-size:8.7px;line-height:8.7px;color:#262626;-webkit-text-stroke:0.3px #262626">800m</div>
<div class="t" style="left:189px;width:80px;text-align:right;top:273.54px;font-size:8.7px;line-height:8.7px;color:#a8a8a8;">750m</div>
<div class="t" style="left:189px;width:80px;text-align:right;top:295.50px;font-size:8.7px;line-height:8.7px;color:#262626;-webkit-text-stroke:0.3px #262626">700m</div>
<div class="t" style="left:189px;width:80px;text-align:right;top:317.46px;font-size:8.7px;line-height:8.7px;color:#a8a8a8;">650m</div>
<div class="t" style="left:189px;width:80px;text-align:right;top:339.42px;font-size:8.7px;line-height:8.7px;color:#262626;-webkit-text-stroke:0.3px #262626">600m</div>
<div class="t" style="left:189px;width:80px;text-align:right;top:361.38px;font-size:8.7px;line-height:8.7px;color:#a8a8a8;">550m</div>
<div class="t" style="left:189px;width:80px;text-align:right;top:383.34px;font-size:8.7px;line-height:8.7px;color:#262626;-webkit-text-stroke:0.3px #262626">500m</div>
<div class="t" style="left:189px;width:80px;text-align:right;top:405.30px;font-size:8.7px;line-height:8.7px;color:#a8a8a8;">450m</div>
<div class="t" style="left:189px;width:80px;text-align:right;top:427.26px;font-size:8.7px;line-height:8.7px;color:#262626;-webkit-text-stroke:0.3px #262626">400m</div>
<div class="t" style="left:189px;width:80px;text-align:right;top:449.22px;font-size:8.7px;line-height:8.7px;color:#a8a8a8;">350m</div>
<div class="t" style="left:189px;width:80px;text-align:right;top:471.18px;font-size:8.7px;line-height:8.7px;color:#262626;-webkit-text-stroke:0.3px #262626">300m</div>
<div class="t" style="left:189px;width:80px;text-align:right;top:493.14px;font-size:8.7px;line-height:8.7px;color:#a8a8a8;">250m</div>
<div class="t" style="left:189px;width:80px;text-align:right;top:515.10px;font-size:8.7px;line-height:8.7px;color:#262626;-webkit-text-stroke:0.3px #262626">200m</div>
<div class="t" style="left:189px;width:80px;text-align:right;top:537.06px;font-size:8.7px;line-height:8.7px;color:#a8a8a8;">150m</div>
<div class="t" style="left:189px;width:80px;text-align:right;top:559.02px;font-size:8.7px;line-height:8.7px;color:#262626;-webkit-text-stroke:0.3px #262626">100m</div>
<div class="t" style="left:189px;width:80px;text-align:right;top:580.98px;font-size:8.7px;line-height:8.7px;color:#a8a8a8;">50m</div>
<div class="t" style="left:189px;width:80px;text-align:right;top:602.94px;font-size:8.7px;line-height:8.7px;color:#262626;-webkit-text-stroke:0.3px #262626">0</div>
<div class="t" style="left:189px;width:80px;text-align:right;top:624.90px;font-size:8.7px;line-height:8.7px;color:#a8a8a8;">-50m</div>
<div class="t" style="left:189px;width:80px;text-align:right;top:646.86px;font-size:8.7px;line-height:8.7px;color:#262626;-webkit-text-stroke:0.3px #262626">-100m</div>
<div class="t" style="left:189px;width:80px;text-align:right;top:668.82px;font-size:8.7px;line-height:8.7px;color:#a8a8a8;">-150m</div>
<div class="t" style="left:189px;width:80px;text-align:right;top:690.78px;font-size:8.7px;line-height:8.7px;color:#262626;-webkit-text-stroke:0.3px #262626">-200m</div>
<div class="a" style="left:253px;top:578.5px;width:19.5px;height:12px;background:#fff;border:1px solid #3a3aff"></div>
<div class="t" style="left:222.8px;width:80px;text-align:center;top:580.52px;font-size:8.6px;line-height:8.6px;color:#2a2aff;">49m</div>
<div class="a" style="left:230px;top:167px;width:12.5px;height:528px;background:#fff;border:1px solid #a8a8a8"></div>
<div class="a" style="left:230px;top:167px;width:12.5px;height:12.5px;background:linear-gradient(#fbfbfb,#dedede);border:1px solid #a8a8a8"></div>
<svg class="a" style="left:232px;top:170px" width="9" height="6"><path d="M1 5h7L4.5 1.2z" fill="#333"/></svg>
<div class="a" style="left:230px;top:683px;width:12.5px;height:12.5px;background:linear-gradient(#fbfbfb,#dedede);border:1px solid #a8a8a8"></div>
<svg class="a" style="left:232px;top:686.5px" width="9" height="6"><path d="M1 1h7L4.5 4.8z" fill="#333"/></svg>
<div class="a" style="left:230px;top:622px;width:12.5px;height:23px;background:linear-gradient(90deg,#e8e8e8,#d6d6d6);border:1px solid #a8a8a8"></div>
<div class="t" style="left:234.0px;width:80px;text-align:center;top:700.72px;font-size:8.6px;line-height:8.6px;color:#222;">10</div>
<div class="t" style="left:313.35150685702547px;width:80px;text-align:center;top:700.72px;font-size:8.6px;line-height:8.6px;color:#222;">20</div>
<div class="t" style="left:359.769162744103px;width:80px;text-align:center;top:700.72px;font-size:8.6px;line-height:8.6px;color:#222;">30</div>
<div class="t" style="left:392.70301371405094px;width:80px;text-align:center;top:700.72px;font-size:8.6px;line-height:8.6px;color:#222;">40</div>
<div class="t" style="left:418.24849314297455px;width:80px;text-align:center;top:700.72px;font-size:8.6px;line-height:8.6px;color:#222;">50</div>
<div class="t" style="left:439.1206696011285px;width:80px;text-align:center;top:700.72px;font-size:8.6px;line-height:8.6px;color:#222;">60</div>
<div class="t" style="left:456.7678433477581px;width:80px;text-align:center;top:700.72px;font-size:8.6px;line-height:8.6px;color:#222;">70</div>
<div class="t" style="left:472.0545205710763px;width:80px;text-align:center;top:700.72px;font-size:8.6px;line-height:8.6px;color:#222;">80</div>
<div class="t" style="left:497.6px;width:80px;text-align:center;top:700.72px;font-size:8.6px;line-height:8.6px;color:#222;">100</div>
<div class="t" style="left:576.9515068570255px;width:80px;text-align:center;top:700.72px;font-size:8.6px;line-height:8.6px;color:#222;">200</div>
<div class="t" style="left:623.369162744103px;width:80px;text-align:center;top:700.72px;font-size:8.6px;line-height:8.6px;color:#222;">300</div>
<div class="t" style="left:656.303013714051px;width:80px;text-align:center;top:700.72px;font-size:8.6px;line-height:8.6px;color:#222;">400</div>
<div class="t" style="left:681.8484931429746px;width:80px;text-align:center;top:700.72px;font-size:8.6px;line-height:8.6px;color:#222;">500</div>
<div class="t" style="left:702.7206696011285px;width:80px;text-align:center;top:700.72px;font-size:8.6px;line-height:8.6px;color:#222;">600</div>
<div class="t" style="left:735.6545205710763px;width:80px;text-align:center;top:700.72px;font-size:8.6px;line-height:8.6px;color:#222;">800</div>
<div class="t" style="left:761.2px;width:80px;text-align:center;top:700.72px;font-size:8.6px;line-height:8.6px;color:#222;">1k</div>
<div class="t" style="left:840.5515068570255px;width:80px;text-align:center;top:700.72px;font-size:8.6px;line-height:8.6px;color:#222;">2k</div>
<div class="t" style="left:886.9691627441031px;width:80px;text-align:center;top:700.72px;font-size:8.6px;line-height:8.6px;color:#222;">3k</div>
<div class="t" style="left:919.903013714051px;width:80px;text-align:center;top:700.72px;font-size:8.6px;line-height:8.6px;color:#222;">4k</div>
<div class="t" style="left:945.4484931429746px;width:80px;text-align:center;top:700.72px;font-size:8.6px;line-height:8.6px;color:#222;">5k</div>
<div class="t" style="left:966.3206696011284px;width:80px;text-align:center;top:700.72px;font-size:8.6px;line-height:8.6px;color:#222;">6k</div>
<div class="t" style="left:983.9678433477582px;width:80px;text-align:center;top:700.72px;font-size:8.6px;line-height:8.6px;color:#222;">7k</div>
<div class="t" style="left:999.2545205710765px;width:80px;text-align:center;top:700.72px;font-size:8.6px;line-height:8.6px;color:#222;">8k</div>
<div class="t" style="left:1024.8000000000002px;width:80px;text-align:center;top:700.72px;font-size:8.6px;line-height:8.6px;color:#222;">10k</div>
<div class="t" style="left:1105px;width:80px;text-align:center;top:700.72px;font-size:8.6px;line-height:8.6px;color:#222;">20kHz</div>
<div class="a" style="left:373.5px;top:698.5px;width:20.5px;height:11.5px;background:#fff;border:1px solid #3a3aff"></div>
<div class="t" style="left:343.8px;width:80px;text-align:center;top:700.72px;font-size:8.6px;line-height:8.6px;color:#2a2aff;">26.2</div>
<div class="a" style="left:274px;top:714px;width:870px;height:12.5px;background:#fff;border:1px solid #a8a8a8"></div>
<div class="a" style="left:424.5px;top:714px;width:677px;height:12.5px;background:linear-gradient(#f4f4f4,#d8d8d8);border:1px solid #a8a8a8"></div>
<div class="a" style="left:274px;top:714px;width:12.5px;height:12.5px;background:linear-gradient(#fbfbfb,#dedede);border:1px solid #a8a8a8"></div>
<svg class="a" style="left:277px;top:716.5px" width="7" height="8"><path d="M5 0.8v6.4L1.4 4z" fill="#333"/></svg>
<div class="a" style="left:1131.5px;top:714px;width:12.5px;height:12.5px;background:linear-gradient(#fbfbfb,#dedede);border:1px solid #a8a8a8"></div>
<svg class="a" style="left:1134.5px;top:716.5px" width="7" height="8"><path d="M1.5 0.8v6.4L5.1 4z" fill="#333"/></svg>
<div class="a" style="left:426px;top:728.7px;width:564px;height:17.5px;background:#fff;border:1px solid #9e9e9e;box-shadow:1px 1px 1px rgba(0,0,0,0.35)"></div>
<svg class="a" style="left:430.5px;top:731.5px" width="12" height="12" viewBox="0 0 12 12"><rect x="0.5" y="0.5" width="11" height="11" fill="#f4f4f4" stroke="#666"/><path d="M2.5 6.2 4.8 9 9.5 1.8" stroke="#111" stroke-width="1.3" fill="none"/></svg>
<div class="t" style="left:446px;top:734.72px;font-size:8.6px;line-height:8.6px;color:#4a4ae8;">Nov 3</div>
<div class="a" style="left:577.5px;top:737px;width:39.5px;height:2.2px;background:#3a3ae0"></div>
<div class="t" style="left:648.7px;top:734.72px;font-size:8.6px;line-height:8.6px;color:#4a4ae8;">76.4 dB</div>
<svg class="a" style="left:707.5px;top:731.5px" width="12" height="12" viewBox="0 0 12 12"><rect x="0.5" y="0.5" width="11" height="11" fill="#f4f4f4" stroke="#666"/><path d="M2.5 6.2 4.8 9 9.5 1.8" stroke="#111" stroke-width="1.3" fill="none"/></svg>
<div class="t" style="left:723.5px;top:734.72px;font-size:8.6px;line-height:8.6px;color:#999;">Peak energy time</div>
<svg class="a" style="left:856px;top:737px" width="39" height="3"><path d="M0 1.2H39" stroke="#666" stroke-width="1.4" stroke-dasharray="5.5 2.5"/></svg>
<div class="t" style="left:921px;top:734.72px;font-size:8.6px;line-height:8.6px;color:#888;">19.60 ms</div>
<svg class="a" style="left:1149px;top:272px" width="29" height="318" viewBox="0 0 29 318"><defs><linearGradient id="cbar" x1="0" y1="0" x2="0" y2="1"><stop offset="0.0000" stop-color="#ff0000"/><stop offset="0.0500" stop-color="#ff2200"/><stop offset="0.1000" stop-color="#ff5500"/><stop offset="0.1497" stop-color="#f59000"/><stop offset="0.1503" stop-color="#f5a800"/><stop offset="0.2000" stop-color="#f2c800"/><stop offset="0.2497" stop-color="#e6e000"/><stop offset="0.2503" stop-color="#d0d800"/><stop offset="0.3000" stop-color="#b0c800"/><stop offset="0.3497" stop-color="#90c000"/><stop offset="0.3503" stop-color="#70c000"/><stop offset="0.4000" stop-color="#50bc00"/><stop offset="0.4497" stop-color="#30b800"/><stop offset="0.4503" stop-color="#00b030"/><stop offset="0.5000" stop-color="#00b040"/><stop offset="0.5497" stop-color="#00b048"/><stop offset="0.5502" stop-color="#00c080"/><stop offset="0.6000" stop-color="#00b888"/><stop offset="0.6498" stop-color="#00b090"/><stop offset="0.6502" stop-color="#00a0a0"/><stop offset="0.7000" stop-color="#008898"/><stop offset="0.7498" stop-color="#006a90"/><stop offset="0.7502" stop-color="#005a90"/><stop offset="0.8000" stop-color="#0040a0"/><stop offset="0.8498" stop-color="#1020b0"/><stop offset="0.8502" stop-color="#1400b0"/><stop offset="0.9000" stop-color="#1a00a8"/><stop offset="0.9498" stop-color="#2000a0"/><stop offset="0.9502" stop-color="#300080"/><stop offset="1.0000" stop-color="#300070"/></linearGradient></defs><rect x="0.5" y="0.5" width="27.5" height="317" fill="url(#cbar)" stroke="#222" stroke-width="1"/><path d="M0.5 301.6H28" stroke="#222" stroke-width="0.9"/><path d="M0.5 269.9H28" stroke="#222" stroke-width="0.9"/><path d="M0.5 238.2H28" stroke="#222" stroke-width="0.9"/><path d="M0.5 206.6H28" stroke="#222" stroke-width="0.9"/><path d="M0.5 174.8H28" stroke="#222" stroke-width="0.9"/><path d="M0.5 143.2H28" stroke="#222" stroke-width="0.9"/><path d="M0.5 111.5H28" stroke="#222" stroke-width="0.9"/><path d="M0.5 79.8H28" stroke="#222" stroke-width="0.9"/><path d="M0.5 48.0H28" stroke="#222" stroke-width="0.9"/><path d="M0.5 16.4H28" stroke="#222" stroke-width="0.9"/></svg>
<div class="t" style="left:1122.5px;width:80px;text-align:center;top:262.72px;font-size:8.6px;line-height:8.6px;color:#222;">86</div>
<div class="t" style="left:1122.5px;width:80px;text-align:center;top:593.22px;font-size:8.6px;line-height:8.6px;color:#222;">46</div>
<div class="t" style="left:1178px;top:569.47px;font-size:8.6px;line-height:8.6px;color:#222;">48</div>
<div class="t" style="left:1178px;top:537.77px;font-size:8.6px;line-height:8.6px;color:#222;">52</div>
<div class="t" style="left:1178px;top:506.07px;font-size:8.6px;line-height:8.6px;color:#222;">56</div>
<div class="t" style="left:1178px;top:474.37px;font-size:8.6px;line-height:8.6px;color:#222;">60</div>
<div class="t" style="left:1178px;top:442.67px;font-size:8.6px;line-height:8.6px;color:#222;">64</div>
<div class="t" style="left:1178px;top:410.97px;font-size:8.6px;line-height:8.6px;color:#222;">68</div>
<div class="t" style="left:1178px;top:379.27px;font-size:8.6px;line-height:8.6px;color:#222;">72</div>
<div class="t" style="left:1178px;top:347.57px;font-size:8.6px;line-height:8.6px;color:#222;">76</div>
<div class="t" style="left:1178px;top:315.87px;font-size:8.6px;line-height:8.6px;color:#222;">80</div>
<div class="t" style="left:1178px;top:284.17px;font-size:8.6px;line-height:8.6px;color:#222;">84</div>
<div class="a" style="left:1198.5px;top:111px;width:1px;height:639px;background:#dedede"></div><div class="a" style="left:1px;top:111px;width:1px;height:639px;background:#cdcdcd"></div>
<div id="status" class="a"></div>
<div class="a" style="left:60.8px;top:751px;width:1px;height:17px;background:#a6a6a6"></div>
<div class="a" style="left:105.5px;top:751px;width:1px;height:17px;background:#a6a6a6"></div>
<div class="a" style="left:135.0px;top:751px;width:1px;height:17px;background:#a6a6a6"></div>
<div class="a" style="left:143.0px;top:751px;width:1px;height:17px;background:#a6a6a6"></div>
<div class="a" style="left:304.5px;top:751px;width:1px;height:17px;background:#a6a6a6"></div>
<div class="a" style="left:458.4px;top:751px;width:1px;height:17px;background:#a6a6a6"></div>
<div class="a" style="left:1036.1px;top:751px;width:1px;height:17px;background:#a6a6a6"></div>
<div class="t" style="left:3px;top:756.36px;font-size:8.2px;line-height:8.2px;color:#333;">184/400MB</div>
<div class="t" style="left:65px;top:756.19px;font-size:8.4px;line-height:8.4px;color:#333;">48000 Hz</div>
<div class="t" style="left:110.5px;top:756.19px;font-size:8.4px;line-height:8.4px;color:#333;">16 Bit</div>
<div class="t" style="left:147.5px;top:756.19px;font-size:8.4px;line-height:8.4px;color:#3a9a3a;letter-spacing:-0.15px">XXXX XXXX</div>
<div class="t" style="left:200px;top:756.19px;font-size:8.4px;line-height:8.4px;color:#3a9a3a;letter-spacing:-0.15px">XXXX XXXX</div>
<div class="t" style="left:253px;top:756.19px;font-size:8.4px;line-height:8.4px;color:#7a7aee;letter-spacing:0.3px">0000 0000</div>
<div class="t" style="left:308.5px;top:756.23px;font-size:8.35px;line-height:8.35px;color:#333;">Peak input before clipping 127 dB SPL</div>
<div class="t" style="left:586px;top:756.10px;font-size:8.5px;line-height:8.5px;color:#333;">Right click &amp; drag to pan; Ctrl+Right click &amp; drag to measure; mouse wheel to zoom;</div>
<div id="task" class="a"></div>
<svg class="a" style="left:12px;top:777px" width="14" height="14" viewBox="0 0 14 14"><path d="M0.5 2.2 6 1.4V6.6H0.5zM6.8 1.3 13.5 0.4V6.6H6.8zM0.5 7.4H6v5.2L0.5 11.8zM6.8 7.4h6.7v6.2L6.8 12.7z" fill="#fff"/></svg>
<svg class="a" style="left:50px;top:776px" width="16" height="16" viewBox="0 0 16 16"><circle cx="9.5" cy="6.5" r="4.6" fill="none" stroke="#fff" stroke-width="1.2"/><path d="M6.2 9.8 1.2 14.8" stroke="#fff" stroke-width="1.3"/></svg>
<svg class="a" style="left:89px;top:777px" width="14" height="14" viewBox="0 0 14 14"><circle cx="7" cy="7" r="5.5" fill="none" stroke="#fff" stroke-width="1.4"/></svg>
<svg class="a" style="left:126px;top:776px" width="16" height="16" viewBox="0 0 16 16"><rect x="1.5" y="4" width="9" height="8" fill="none" stroke="#fff" stroke-width="1"/><path d="M1 2h10M1 14h10M13.5 1.5v13" stroke="#fff" stroke-width="1"/></svg>
<svg class="a" style="left:165px;top:774px" width="20" height="20" viewBox="0 0 20 20"><path d="M6 4V2.5a4 1.5 0 0 1 8 0V4" stroke="#5ab8ff" stroke-width="1.2" fill="none"/><rect x="1" y="4" width="18" height="15" rx="2" fill="#f2f2f2"/><rect x="6" y="8" width="3.8" height="3.8" fill="#f35325"/><rect x="10.3" y="8" width="3.8" height="3.8" fill="#81bc06"/><rect x="6" y="12.3" width="3.8" height="3.8" fill="#05a6f0"/><rect x="10.3" y="12.3" width="3.8" height="3.8" fill="#ffba08"/></svg>
<svg class="a" style="left:204px;top:774px" width="21" height="21" viewBox="0 0 21 21"><defs><linearGradient id="ed" x1="0" y1="0" x2="1" y2="1"><stop offset="0" stop-color="#36c3f0"/><stop offset="0.5" stop-color="#1a8fd8"/><stop offset="1" stop-color="#0c5aa8"/></linearGradient></defs>
<circle cx="10.5" cy="10.5" r="9.8" fill="url(#ed)"/><path d="M5 11 a5.5 5 0 0 1 11 -1 c0 2-2 3-4 3 -2.5 0-3-1.5-3-1.5 0 2 2 5 6 4.5" fill="#22aee8" stroke="#7ee07a" stroke-width="1.5"/></svg>
<svg class="a" style="left:245px;top:774px" width="20" height="20" viewBox="0 0 20 20"><rect width="19" height="19" rx="3" fill="#111"/><path d="M4 6 q1 9 4 6 q2-4 3 0 q3 4 4-6" stroke="#4ac8ff" stroke-width="2.2" fill="none"/><rect x="11" y="11" width="8" height="7" rx="1.5" fill="#1fb050"/><path d="M13 13h3v3h-3z" fill="#fff"/></svg>
<svg class="a" style="left:285px;top:775px" width="19" height="19" viewBox="0 0 19 19"><circle cx="9.5" cy="9.5" r="9" fill="#db4437"/><path d="M9.5 9.5 L17.3 5 A9 9 0 0 1 5 17.3z" fill="#ffcd40"/><path d="M9.5 9.5 L5 17.3 A9 9 0 0 1 1.7 5z" fill="#0f9d58"/><path d="M9.5 9.5 L17.3 5 A9 9 0 0 1 18.5 9.5 L18.5 9.5 A9 9 0 0 1 9 18.5z" fill="#ffcd40"/><circle cx="9.5" cy="9.5" r="4.3" fill="#fff"/><circle cx="9.5" cy="9.5" r="3.3" fill="#4285f4"/></svg>
<svg class="a" style="left:325px;top:776px" width="19" height="16" viewBox="0 0 19 16"><path d="M0.5 1.5h6l1.5 1.5h10.5V15H0.5z" fill="#f0b83a"/><rect x="0.5" y="5" width="18" height="10" fill="#ffd35a"/><rect x="4" y="8" width="11" height="3" fill="#3a8ee6"/></svg>
<div class="a" style="left:319px;top:798px;width:32px;height:2px;background:#7fb8e8"></div>
<svg class="a" style="left:365px;top:774px" width="20" height="21" viewBox="0 0 20 21"><rect x="1" y="1" width="15" height="11" fill="#2a66c8" stroke="#ddd" stroke-width="1"/><path d="M6 12l-1 4h7l-1-4" fill="#ccc"/><rect x="3" y="16" width="11" height="2" fill="#bbb"/><circle cx="15" cy="16" r="4.5" fill="#e8e8e8"/><path d="M12.5 16.5h5M15.5 14l2 2.5-2 2.5" stroke="#3a9a3a" stroke-width="1" fill="none"/></svg>
<svg class="a" style="left:405px;top:776px" width="20" height="17" viewBox="0 0 20 17"><rect x="0.5" y="3" width="19" height="13.5" fill="#0f78d4"/><path d="M0.5 3 10 10 19.5 3" fill="#3aa0f0"/><path d="M0.5 3 10 0.3 19.5 3" fill="#5ab8ff"/></svg>
<div class="a" style="left:435px;top:768px;width:38.5px;height:32px;background:#3a4a56"></div>
<div class="a" style="left:435px;top:798px;width:38.5px;height:2px;background:#7fb8e8"></div>
<svg class="a" style="left:444px;top:774px" width="20" height="20" viewBox="0 0 20 20"><rect width="20" height="20" fill="#3a1a8a"/><text x="10" y="7.5" font-size="7" font-weight="700" text-anchor="middle" fill="#fff" font-family="Liberation Sans">REW</text><path d="M1 19 V15 l2-3 2 4 2-6 2 5 2-3 2 4 2-2 2 3 2-1V19z" fill="#20c040"/><path d="M1 19 V17 l3-2 3 2 3-3 3 2 3-1 3 2V19z" fill="#e0e020"/></svg>
<svg class="a" style="left:484px;top:775px" width="19" height="19" viewBox="0 0 19 19"><circle cx="9.5" cy="9.5" r="9" fill="#db4437"/><path d="M9.5 9.5 L17.3 5 A9 9 0 0 1 5 17.3z" fill="#ffcd40"/><path d="M9.5 9.5 L5 17.3 A9 9 0 0 1 1.7 5z" fill="#0f9d58"/><path d="M9.5 9.5 L17.3 5 A9 9 0 0 1 18.5 9.5 L18.5 9.5 A9 9 0 0 1 9 18.5z" fill="#ffcd40"/><circle cx="9.5" cy="9.5" r="4.3" fill="#fff"/><circle cx="9.5" cy="9.5" r="3.3" fill="#4285f4"/></svg>
<svg class="a" style="left:494px;top:784px" width="12" height="12" viewBox="0 0 12 12"><circle cx="6" cy="6" r="5.8" fill="#4a9ab0"/><circle cx="6" cy="4.5" r="1.8" fill="#1a2a30"/><path d="M2.8 9.5a3.2 2.5 0 0 1 6.4 0z" fill="#1a2a30"/></svg>
<div class="a" style="left:475px;top:798px;width:38px;height:2px;background:#7fb8e8"></div>
<svg class="a" style="left:621px;top:773px" width="22" height="20" viewBox="0 0 22 20"><path d="M4 3 a5.5 5.5 0 0 0 7 7 a5.5 5.5 0 0 1 -7 -7z" fill="#f5c542"/><path d="M5 18 a3.5 3.5 0 0 1 1-7 a4.5 4.5 0 0 1 8.5-1 a3.5 3.5 0 0 1 2.5 8z" fill="#dfe8f0"/><circle cx="17.5" cy="3.2" r="2.2" fill="#e0301e"/></svg>
<div class="t" style="left:647.5px;top:780.18px;font-size:11.3px;line-height:11.3px;color:#fff;">12°C</div>
<div class="t" style="left:677.5px;top:780.02px;font-size:11.5px;line-height:11.5px;color:#fff;">Mostly cloudy</div>
<svg class="a" style="left:762px;top:778px" width="13" height="13" viewBox="0 0 13 13"><rect width="13" height="13" rx="5" fill="#8a949c"/><text x="6.5" y="10" font-size="9.5" text-anchor="middle" fill="#1f2d38" font-family="Liberation Sans" font-weight="700">S</text></svg>
<svg class="a" style="left:786px;top:779px" width="15" height="10" viewBox="0 0 15 10"><path d="M3 9.5a2.8 2.8 0 0 1 .3-5.5 a4 4 0 0 1 7.5-.8 a3 3 0 0 1 3.5 3 a3 3 0 0 1 -1 3.3z" fill="#e6e6e6"/></svg>
<svg class="a" style="left:814px;top:776px" width="10" height="16" viewBox="0 0 10 16"><rect width="10" height="16" rx="5" fill="#1a7ae8"/><path d="M2.5 5 7 10l-2 2V4l2 2-4.5 5" stroke="#fff" stroke-width="1" fill="none"/></svg>
<svg class="a" style="left:838px;top:776px" width="13" height="15" viewBox="0 0 13 15"><path d="M6 0.5 11 2.5v5c0 3.5-2.5 6-5 7-2.5-1-5-3.5-5-7v-5z" fill="#f4f4f4"/><path d="M6 0.5v14M1 6.5h10" stroke="#c02020" stroke-width="1"/><circle cx="10" cy="12" r="2.8" fill="#e02020"/><path d="M8.8 10.8l2.4 2.4M11.2 10.8l-2.4 2.4" stroke="#fff" stroke-width="0.8"/></svg>
<svg class="a" style="left:863px;top:777px" width="14" height="13" viewBox="0 0 14 13"><path d="M1 6 7 1.5 13 5 9 11.5 2 10z" fill="#3aa0d8"/><path d="M2 8 8 4l4 2-3 4z" fill="#e8c840"/></svg>
<svg class="a" style="left:889px;top:776px" width="12" height="15" viewBox="0 0 12 15"><rect x="0.5" y="0.5" width="10" height="10" fill="#d8d8f0" stroke="#999" stroke-width="0.5"/><path d="M2 3h7M2 5h5" stroke="#3a6ad8" stroke-width="1"/><circle cx="7.5" cy="10.5" r="3.8" fill="#e03020"/><circle cx="7.5" cy="10.5" r="2.3" fill="#fff"/><path d="M6 9l3 3" stroke="#e03020" stroke-width="0.9"/></svg>
<svg class="a" style="left:914px;top:779px" width="14" height="10" viewBox="0 0 14 10"><rect x="3" y="2.5" width="10" height="6" fill="none" stroke="#ddd" stroke-width="0.9"/><path d="M1 1v4M0 2.5h2" stroke="#ddd" stroke-width="0.8"/></svg>
<svg class="a" style="left:941px;top:778px" width="12" height="12" viewBox="0 0 12 12"><path d="M1 11a10 10 0 0 1 10-10M3.5 11a7.5 7.5 0 0 1 7.5-7.5M6 11a5 5 0 0 1 5-5M8.5 11a2.5 2.5 0 0 1 2.5-2.5" stroke="#ddd" stroke-width="0.9" fill="none"/></svg>
<svg class="a" style="left:967px;top:777px" width="11" height="14" viewBox="0 0 11 14"><rect x="1.5" y="2" width="7" height="10" rx="1.5" fill="none" stroke="#ddd" stroke-width="0.9"/><path d="M3 0.8h4M3 13.2h4M9 5v4" stroke="#ddd" stroke-width="0.9"/></svg>
<svg class="a" style="left:991px;top:778px" width="14" height="12" viewBox="0 0 14 12"><path d="M1 4h2.5L7 1v10L3.5 8H1z" fill="none" stroke="#ddd" stroke-width="0.9"/><path d="M9 4a3 3 0 0 1 0 4M11 2.5a5 5 0 0 1 0 7" stroke="#ddd" stroke-width="0.9" fill="none"/></svg>
<svg class="a" style="left:1046px;top:777px" width="13" height="14" viewBox="0 0 13 14"><path d="M2 12.5 L11 2" stroke="#ddd" stroke-width="2.6" stroke-linecap="round"/><path d="M2 12.5 L11 2" stroke="#1f2d38" stroke-width="1" stroke-linecap="round"/></svg>
<div class="t" style="left:1073px;top:780.63px;font-size:9.3px;line-height:9.3px;color:#fff;">ENG</div>
<div class="t" style="left:1076.5px;width:100px;text-align:center;top:772.87px;font-size:9.6px;line-height:9.6px;color:#fff;">7:58 PM</div>
<div class="t" style="left:1077.5px;width:100px;text-align:center;top:787.37px;font-size:9.6px;line-height:9.6px;color:#fff;">3/11/2022</div>
<svg class="a" style="left:1165px;top:776px" width="16" height="15" viewBox="0 0 16 15"><path d="M1 1h14v10H7l-3 3v-3H1z" fill="#f4f4f4"/><path d="M3.5 4h9M3.5 6h9M3.5 8h6" stroke="#1f2d38" stroke-width="0.8"/><circle cx="12.5" cy="11" r="2.5" fill="#1f2d38" stroke="#ddd" stroke-width="0.6"/></svg>
</body></html>
